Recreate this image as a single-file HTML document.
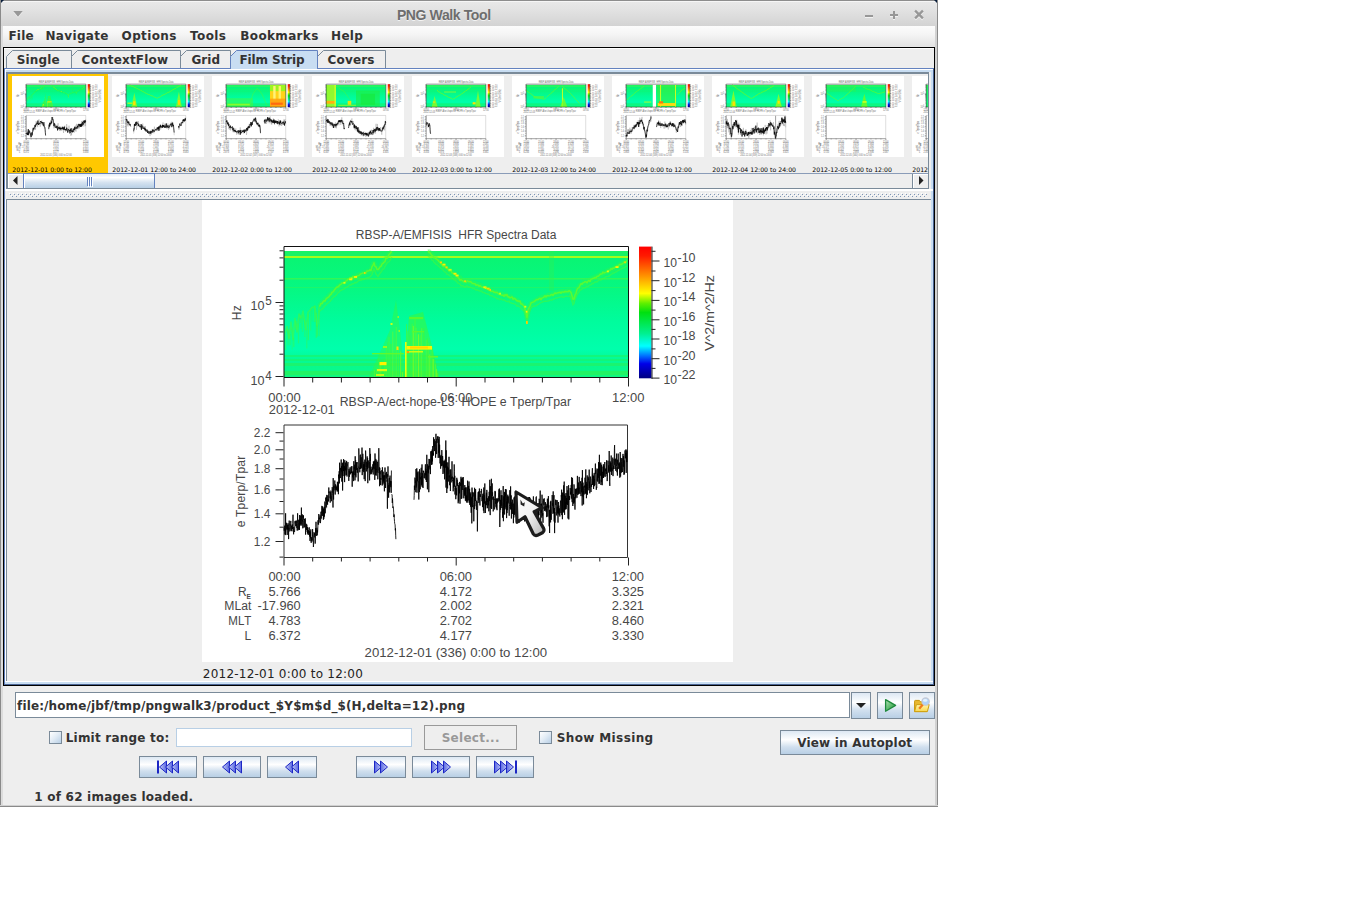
<!DOCTYPE html>
<html lang="en"><head><meta charset="utf-8"><title>PNG Walk Tool</title>
<style>

*{box-sizing:border-box;margin:0;padding:0}
html,body{width:1345px;height:916px;background:#fff;overflow:hidden}
body{position:relative;font-kerning:none;font-family:"DejaVu Sans","Liberation Sans",sans-serif;font-size:12px;color:#333}
.abs{position:absolute}
#win{position:absolute;left:0;top:0;width:938px;height:807px;background:#eee;overflow:hidden}
#titlebar{position:absolute;left:0;top:0;width:938px;height:26px;background:linear-gradient(#e9e9e9,#e4e4e4 30%,#d3d3d3)}
#title{position:absolute;left:0;width:888px;top:5px;text-align:center;font:bold 13.4px "Liberation Sans",sans-serif;color:#6d6d6d;text-shadow:0 1px 0 #f4f4f4;letter-spacing:0.1px}
#menubar{position:absolute;left:3px;top:26px;width:932px;height:20px;background:linear-gradient(#fcfcfc,#f5f5f5 40%,#e3e3e3)}
.menu{position:absolute;top:3px;font-weight:bold;font-size:12px;color:#333;white-space:nowrap;letter-spacing:0.1px}
.b{font-weight:bold}
.tab{position:absolute;top:50px;height:19px;font-weight:bold;font-size:12px;color:#333;white-space:nowrap;letter-spacing:0.12px}
.tab svg{position:absolute;left:0;top:0}
.tab span{position:absolute;top:3px}
.btn{position:absolute;border:1px solid #7a8a99;background:linear-gradient(#dde8f3,#ffffff 38%,#d0dfee 70%,#b8cfe5)}
.btn svg{position:absolute}
.lbl{position:absolute;white-space:nowrap;font-weight:bold;font-size:12px;color:#333}
svg.th text{font-size:15px;fill:#6a6a6a}
.chk{position:absolute;width:13px;height:13px;border:1px solid #7a8a99;background:linear-gradient(135deg,#ffffff,#e4edf6 45%,#b8cfe5)}

</style></head><body>
<svg width="0" height="0" style="position:absolute"><defs>
<linearGradient id="jet" x1="0" y1="0" x2="0" y2="1">
<stop offset="0" stop-color="#f00"/><stop offset="0.07" stop-color="#ff1a00"/><stop offset="0.22" stop-color="#ff9000"/><stop offset="0.355" stop-color="#ffff00"/>
<stop offset="0.43" stop-color="#60f000"/><stop offset="0.5" stop-color="#00e010"/><stop offset="0.66" stop-color="#00f090"/><stop offset="0.755" stop-color="#00ffff"/>
<stop offset="0.83" stop-color="#0070ff"/><stop offset="0.89" stop-color="#0000e8"/><stop offset="1" stop-color="#000080"/></linearGradient>
<linearGradient id="specg" x1="0" y1="0" x2="0" y2="1">
<stop offset="0" stop-color="#0af470"/><stop offset="0.3" stop-color="#06f882"/><stop offset="0.55" stop-color="#00fc9c"/><stop offset="0.78" stop-color="#00ffac"/><stop offset="0.86" stop-color="#04fa96"/><stop offset="1" stop-color="#0ef780"/></linearGradient>
<linearGradient id="tl" x1="0" y1="0" x2="1" y2="0"><stop offset="0" stop-color="#c4ccf6"/><stop offset="1" stop-color="#5a68e2"/></linearGradient>
<linearGradient id="tr" x1="0" y1="0" x2="1" y2="0"><stop offset="0" stop-color="#5a68e2"/><stop offset="1" stop-color="#c4ccf6"/></linearGradient>
</defs></svg>
<div id="win">
<div id="titlebar"></div>
<div class="abs" style="left:0;top:0;width:938px;height:1px;background:#8d8d8d"></div>
<div class="abs" style="left:1px;top:1px;width:936px;height:1px;background:#f6f6f6"></div>
<div class="abs" style="left:396.90px;top:6.60px;font:bold 14px 'Liberation Sans',sans-serif;letter-spacing:-0.387px;color:#6d6d6d;white-space:nowrap;line-height:normal;text-shadow:0 1px 0 #f4f4f4;">PNG Walk Tool</div>
<svg class="abs" style="left:0;top:0" width="938" height="26" viewBox="0 0 938 26"><path d="M13.3 12 L22.7 12 L18 17.8 Z" fill="#f0f0f0"/><path d="M13.3 11 L22.7 11 L18 16.8 Z" fill="#989898"/><path d="M0 0 H4 L0 4 Z" fill="#0a1f3c"/><path d="M938 0 H934 L938 4 Z" fill="#0a1f3c"/><g transform="translate(0 1)" fill="#f2f2f2" stroke="#f2f2f2"><path d="M865 15 H873 V17 H865 Z" stroke="none"/><path d="M890 14 H893 V11 H895 V14 H898 V16 H895 V19 H893 V16 H890 Z" stroke="none"/><path d="M915.1 10.6 L922.9 18.4 M922.9 10.6 L915.1 18.4" stroke-width="2.3" fill="none"/></g><path d="M865 15 H873 V17 H865 Z" fill="#979797"/><path d="M890 14 H893 V11 H895 V14 H898 V16 H895 V19 H893 V16 H890 Z" fill="#979797"/><path d="M915.1 10.6 L922.9 18.4 M922.9 10.6 L915.1 18.4" stroke="#979797" stroke-width="2.3" fill="none"/></svg>
<div id="menubar">
</div>
<div class="abs" style="left:8.40px;top:28.60px;font:bold 12px 'DejaVu Sans',sans-serif;letter-spacing:0.225px;color:#333;white-space:nowrap;line-height:normal;">File</div>
<div class="abs" style="left:45.50px;top:28.60px;font:bold 12px 'DejaVu Sans',sans-serif;letter-spacing:0.329px;color:#333;white-space:nowrap;line-height:normal;">Navigate</div>
<div class="abs" style="left:121.60px;top:28.60px;font:bold 12px 'DejaVu Sans',sans-serif;letter-spacing:0.362px;color:#333;white-space:nowrap;line-height:normal;">Options</div>
<div class="abs" style="left:190.10px;top:28.60px;font:bold 12px 'DejaVu Sans',sans-serif;letter-spacing:0.378px;color:#333;white-space:nowrap;line-height:normal;">Tools</div>
<div class="abs" style="left:240.30px;top:28.60px;font:bold 12px 'DejaVu Sans',sans-serif;letter-spacing:0.348px;color:#333;white-space:nowrap;line-height:normal;">Bookmarks</div>
<div class="abs" style="left:331.10px;top:28.60px;font:bold 12px 'DejaVu Sans',sans-serif;letter-spacing:0.268px;color:#333;white-space:nowrap;line-height:normal;">Help</div>
<div class="abs" style="left:0;top:0;width:1px;height:807px;background:#8a8a8a"></div>
<div class="abs" style="left:1px;top:26px;width:2px;height:780px;background:#dcdcdc"></div>
<div class="abs" style="left:937px;top:0;width:1px;height:807px;background:#8a8a8a"></div>
<div class="abs" style="left:935px;top:26px;width:2px;height:780px;background:#d2d2d2"></div>
<div class="abs" style="left:0;top:805px;width:938px;height:1px;background:#d0d0d0"></div>
<div class="abs" style="left:0;top:806px;width:938px;height:1px;background:#8a8a8a"></div>
<div class="abs" style="left:3px;top:46px;width:932px;height:1px;background:#e6e6e6"></div>
<div class="abs" style="left:3px;top:47px;width:932px;height:639px;border:1px solid #000;background:#eee"></div>
<div class="abs" style="left:4px;top:48px;width:930px;height:1px;background:#fff"></div>
<div class="abs" style="left:4px;top:68px;width:930px;height:617px;border:1px solid #6382bf;border-bottom-color:#4a6494;border-right-color:#4a6494;background:#c8ddf2"></div>
<div class="abs" style="left:5px;top:69px;width:928px;height:1px;background:#fff"></div>
<div class="abs" style="left:5px;top:69px;width:1px;height:612px;background:#fff"></div>
<div class="abs" style="left:6px;top:72px;width:925px;height:610px;background:#eee"></div>
<div class="tab" style="left:6px;width:66px"><svg width="66" height="19" viewBox="0 0 66 19"><path d="M0.5 18 L0.5 6.5 L6.5 0.5 L65.5 0.5 L65.5 18 Z" fill="#eeeeee"/><path d="M0.5 18 L0.5 6.5 L6.5 0.5 L65.5 0.5 L65.5 18" fill="none" stroke="#7a8a99" stroke-width="1"/></svg></div>
<div class="tab" style="left:71px;width:110px"><svg width="110" height="19" viewBox="0 0 110 19"><path d="M0.5 18 L0.5 6.5 L6.5 0.5 L109.5 0.5 L109.5 18 Z" fill="#eeeeee"/><path d="M0.5 18 L0.5 6.5 L6.5 0.5 L109.5 0.5 L109.5 18" fill="none" stroke="#7a8a99" stroke-width="1"/></svg></div>
<div class="tab" style="left:180px;width:51px"><svg width="51" height="19" viewBox="0 0 51 19"><path d="M0.5 18 L0.5 6.5 L6.5 0.5 L50.5 0.5 L50.5 18 Z" fill="#eeeeee"/><path d="M0.5 18 L0.5 6.5 L6.5 0.5 L50.5 0.5 L50.5 18" fill="none" stroke="#7a8a99" stroke-width="1"/></svg></div>
<div class="tab" style="left:317px;width:69px"><svg width="69" height="19" viewBox="0 0 69 19"><path d="M0.5 18 L0.5 6.5 L6.5 0.5 L68.5 0.5 L68.5 18 Z" fill="#eeeeee"/><path d="M0.5 18 L0.5 6.5 L6.5 0.5 L68.5 0.5 L68.5 18" fill="none" stroke="#7a8a99" stroke-width="1"/></svg></div>
<div class="tab" style="left:230px;width:88px"><svg width="88" height="19" viewBox="0 0 88 19"><path d="M0.5 19 L0.5 6.5 L6.5 0.5 L87.5 0.5 L87.5 19 Z" fill="#c8ddf2"/><path d="M0.5 19 L0.5 6.5 L6.5 0.5 L87.5 0.5 L87.5 19" fill="none" stroke="#6382bf" stroke-width="1"/></svg></div>
<div class="abs" style="left:16.70px;top:52.80px;font:bold 12px 'DejaVu Sans',sans-serif;letter-spacing:0.160px;color:#333;white-space:nowrap;line-height:normal;">Single</div>
<div class="abs" style="left:81.50px;top:52.80px;font:bold 12px 'DejaVu Sans',sans-serif;letter-spacing:0.200px;color:#333;white-space:nowrap;line-height:normal;">ContextFlow</div>
<div class="abs" style="left:191.40px;top:52.80px;font:bold 12px 'DejaVu Sans',sans-serif;letter-spacing:0.106px;color:#333;white-space:nowrap;line-height:normal;">Grid</div>
<div class="abs" style="left:239.50px;top:52.80px;font:bold 12px 'DejaVu Sans',sans-serif;letter-spacing:-0.102px;color:#333;white-space:nowrap;line-height:normal;">Film Strip</div>
<div class="abs" style="left:327.50px;top:52.80px;font:bold 12px 'DejaVu Sans',sans-serif;letter-spacing:0.174px;color:#333;white-space:nowrap;line-height:normal;">Covers</div>
<div class="abs" style="left:6px;top:72px;width:923px;height:117px;background:#7a8a99"></div>
<div class="abs" style="left:8px;top:74px;width:920px;height:99px;background:#eee;overflow:hidden">
<div class="abs" style="left:0;top:0;width:100px;height:99px;background:#ffc800"></div>
<div class="abs" style="left:4px;top:2px;width:92px;height:81px;background:#fff;overflow:hidden"><svg class="th" width="92" height="81" viewBox="0 0 531 462" preserveAspectRatio="none" style="position:absolute;left:0;top:0"><g font-family="'Liberation Sans',sans-serif" font-size="12" fill="#484848">
<rect x="82.0" y="51" width="344.0" height="126" fill="url(#specg)"/>
<rect x="82.0" y="155" width="344.0" height="2" fill="#12f77c"/>
<rect x="82.0" y="159" width="344.0" height="2" fill="#12f67a"/>
<rect x="82.0" y="163" width="344.0" height="3" fill="#1af470"/>
<rect x="82.0" y="168" width="344.0" height="2" fill="#08f98e"/>
<rect x="82.0" y="171" width="344.0" height="4" fill="#22f364"/>
<rect x="82.0" y="175" width="344.0" height="2" fill="#10f780"/>
<rect x="82.0" y="56" width="344.0" height="2" fill="#a4fb1c"/>
<rect x="82.0" y="51" width="344.0" height="5" fill="#22f25e" opacity="0.6"/>
<rect x="82.0" y="78" width="344.0" height="1.5" fill="#3cf64c" opacity="0.8"/>
<rect x="82.0" y="87" width="344.0" height="1" fill="#30f656" opacity="0.5"/>
<rect x="347" y="51" width="5" height="40" fill="#30f050" opacity="0.35"/>
<rect x="83.0" y="134.0" width="1.2" height="16.1" fill="#44f83c" opacity="0.42"/><rect x="85.5" y="129.0" width="1.2" height="16.4" fill="#44f83c" opacity="0.40"/><rect x="87.5" y="133.9" width="1.2" height="11.3" fill="#44f83c" opacity="0.40"/><rect x="89.6" y="127.4" width="1.2" height="22.3" fill="#44f83c" opacity="0.28"/><rect x="91.2" y="137.5" width="1.2" height="9.6" fill="#44f83c" opacity="0.49"/><rect x="93.4" y="120.8" width="1.2" height="8.8" fill="#44f83c" opacity="0.54"/><rect x="95.9" y="123.5" width="1.2" height="19.8" fill="#44f83c" opacity="0.43"/><rect x="97.4" y="114.7" width="1.2" height="8.3" fill="#44f83c" opacity="0.41"/><rect x="98.6" y="117.3" width="1.2" height="11.4" fill="#44f83c" opacity="0.32"/><rect x="99.9" y="115.3" width="1.2" height="16.4" fill="#44f83c" opacity="0.38"/><rect x="102.3" y="119.6" width="1.2" height="17.3" fill="#44f83c" opacity="0.44"/><rect x="104.2" y="128.5" width="1.2" height="19.9" fill="#44f83c" opacity="0.39"/><rect x="105.8" y="114.2" width="1.2" height="26.0" fill="#44f83c" opacity="0.55"/><rect x="108.1" y="109.9" width="1.2" height="20.7" fill="#44f83c" opacity="0.34"/><rect x="109.7" y="108.3" width="1.2" height="13.2" fill="#44f83c" opacity="0.27"/><rect x="111.9" y="106.7" width="1.2" height="15.2" fill="#44f83c" opacity="0.50"/><rect x="113.7" y="112.7" width="1.2" height="25.2" fill="#44f83c" opacity="0.50"/><rect x="114.9" y="124.7" width="1.2" height="11.8" fill="#44f83c" opacity="0.52"/><rect x="116.7" y="110.5" width="1.2" height="25.6" fill="#44f83c" opacity="0.37"/>
<path d="M83.0 133.6L84.0 130.1L85.0 126.5L86.0 132.6L87.0 138.5L88.0 130.0L89.0 122.1L90.0 130.9L91.0 139.5L92.0 128.8L93.0 118.4L94.0 125.1L95.0 131.9L96.0 122.6L97.0 114.0L98.0 115.8L99.0 118.0L100.0 115.2L101.0 111.1L102.0 118.0L103.0 123.4L104.0 129.6L105.0 120.5L106.0 112.4L107.0 111.3L108.0 110.2L109.0 108.7L110.0 107.4L111.0 107.2L112.0 106.7L113.0 106.0L114.0 116.3L115.0 125.9L116.0 123.4L117.0 106.3" fill="none" stroke="#50f834" stroke-width="1.6" opacity="0.5" stroke-linejoin="round"/>
<path d="M117.0 106.5L118.0 105.6L119.0 104.0L120.0 102.7L121.0 101.6L122.0 101.0L123.0 99.6L124.0 98.4L125.0 98.1L126.0 97.1L127.0 96.2L128.0 94.6L129.0 94.0L130.0 93.0L131.0 91.4L132.0 91.2L133.0 90.1L134.0 90.0L135.0 88.1L136.0 86.9L137.0 86.5L138.0 85.1L139.0 84.8L140.0 83.7L141.0 83.3L142.0 83.0L143.0 82.3L144.0 81.5L145.0 80.4L146.0 80.4L147.0 79.6L148.0 79.3L149.0 78.6L150.0 78.5L151.0 77.6L152.0 77.3L153.0 77.0L154.0 75.9L155.0 75.7L156.0 75.2L157.0 75.7L158.0 74.5L159.0 74.4L160.0 74.0L161.0 73.3L162.0 72.5L163.0 73.1L164.0 72.2L165.0 72.3L166.0 71.2L167.0 71.2L168.0 71.5L169.0 70.1L170.0 67.5L171.0 65.0L172.0 63.0L173.0 65.8L174.0 68.1L175.0 69.1L176.0 69.6L177.0 68.9L178.0 67.8L179.0 65.8L180.0 64.1L181.0 63.0L182.0 62.3L183.0 59.8L184.0 59.0L185.0 57.1L186.0 55.9L187.0 54.7L188.0 53.5L189.0 52.9L190.0 51.2" fill="none" stroke="#34f848" stroke-width="5" opacity="0.4" stroke-linejoin="round"/>
<path d="M226.0 51.9L227.0 51.7L228.0 53.2L229.0 54.1L230.0 55.3L231.0 55.4L232.0 56.8L233.0 57.7L234.0 58.5L235.0 59.5L236.0 60.5L237.0 61.5L238.0 62.1L239.0 63.6L240.0 64.1L241.0 63.9L242.0 66.6L243.0 66.8L244.0 67.5L245.0 68.7L246.0 69.5L247.0 70.2L248.0 70.7L249.0 71.9L250.0 72.0L251.0 74.0L252.0 73.7L253.0 74.9L254.0 75.9L255.0 76.8L256.0 77.5L257.0 78.6L258.0 77.8L259.0 80.0L260.0 80.9L261.0 80.9L262.0 81.8L263.0 80.9L264.0 81.4L265.0 80.8L266.0 81.8L267.0 81.2L268.0 81.3L269.0 83.3L270.0 83.0L271.0 83.1L272.0 83.6L273.0 83.4L274.0 83.9L275.0 84.9L276.0 84.3L277.0 85.7L278.0 85.2L279.0 86.4L280.0 86.3L281.0 87.9L282.0 88.0L283.0 87.8L284.0 87.7L285.0 88.5L286.0 89.2L287.0 89.3L288.0 90.2L289.0 90.9L290.0 90.9L291.0 91.1L292.0 92.0L293.0 92.0L294.0 92.9L295.0 92.8L296.0 93.9L297.0 93.4L298.0 93.4L299.0 94.2L300.0 94.2L301.0 94.4L302.0 95.1L303.0 95.7L304.0 94.8L305.0 96.0L306.0 96.3L307.0 96.6L308.0 97.3L309.0 96.9L310.0 98.2L311.0 98.4L312.0 99.0L313.0 99.4L314.0 99.8L315.0 100.2L316.0 101.1L317.0 102.3L318.0 102.4L319.0 103.3L320.0 104.2L321.0 104.8L322.0 106.2L323.0 109.8L324.0 111.4L325.0 118.3L326.0 110.4L327.0 107.7L328.0 105.6L329.0 103.5L330.0 103.3L331.0 102.4L332.0 102.0L333.0 100.9L334.0 100.5L335.0 99.7L336.0 99.2L337.0 98.3L338.0 98.2L339.0 98.3L340.0 97.3L341.0 97.2L342.0 97.0L343.0 96.5L344.0 96.6L345.0 96.0L346.0 95.1L347.0 94.9L348.0 95.3L349.0 94.9L350.0 94.8L351.0 94.2L352.0 93.9L353.0 92.8L354.0 93.7L355.0 92.5L356.0 93.0L357.0 91.8L358.0 91.7L359.0 91.9L360.0 91.6L361.0 91.4L362.0 91.9L363.0 91.8L364.0 91.5L365.0 91.2L366.0 90.9L367.0 90.9L368.0 90.8L369.0 93.5L370.0 96.3L371.0 99.3L372.0 98.3L373.0 93.7L374.0 92.7L375.0 90.5L376.0 88.7L377.0 86.9L378.0 85.2L379.0 84.5L380.0 84.5L381.0 83.8L382.0 81.9L383.0 82.4L384.0 83.2L385.0 81.0L386.0 81.0L387.0 80.9L388.0 80.0L389.0 80.0L390.0 78.5L391.0 78.0L392.0 77.9L393.0 77.2L394.0 76.6L395.0 76.7L396.0 76.1L397.0 75.5L398.0 74.8L399.0 74.6L400.0 74.0L401.0 73.2L402.0 73.2L403.0 72.6L404.0 72.0L405.0 71.8L406.0 70.6L407.0 70.4L408.0 69.8L409.0 70.0L410.0 69.2L411.0 69.3L412.0 68.6L413.0 67.4L414.0 66.6L415.0 66.7L416.0 65.9L417.0 65.4L418.0 64.6L419.0 64.7L420.0 63.9L421.0 63.4L422.0 62.8L423.0 61.8L424.0 60.7L425.0 60.9" fill="none" stroke="#34f848" stroke-width="5" opacity="0.4" stroke-linejoin="round"/>
<path d="M226.0 55.6L227.0 56.7L228.0 58.2L229.0 58.3L230.0 60.0L231.0 60.3L232.0 62.3L233.0 63.1L234.0 64.3L235.0 64.6L236.0 65.8L237.0 66.5L238.0 67.3L239.0 68.4L240.0 68.9L241.0 70.1L242.0 71.3L243.0 72.0L244.0 72.7L245.0 74.3L246.0 74.4L247.0 75.0L248.0 76.0L249.0 76.6L250.0 77.5L251.0 78.3L252.0 79.8L253.0 80.0L254.0 80.9L255.0 81.9L256.0 83.2L257.0 83.4L258.0 84.1L259.0 85.9L260.0 85.6L261.0 86.0L262.0 86.5L263.0 87.1L264.0 86.2L265.0 85.9L266.0 86.9L267.0 86.7L268.0 86.9L269.0 87.5L270.0 87.9L271.0 88.3L272.0 88.5L273.0 89.4L274.0 89.9L275.0 89.8L276.0 90.1L277.0 90.8L278.0 91.1L279.0 91.1L280.0 91.7L281.0 92.6L282.0 92.6L283.0 93.0L284.0 93.5L285.0 93.9L286.0 94.3L287.0 94.1L288.0 95.6L289.0 95.6L290.0 95.7L291.0 96.6L292.0 96.9L293.0 97.2L294.0 97.9L295.0 98.7L296.0 98.5L297.0 99.1L298.0 99.6L299.0 98.9L300.0 99.4L301.0 100.1L302.0 99.6L303.0 100.4L304.0 101.2L305.0 101.4L306.0 101.6L307.0 101.1L308.0 102.7L309.0 102.7L310.0 103.2L311.0 103.6L312.0 103.5L313.0 104.1L314.0 104.6L315.0 106.1L316.0 105.8L317.0 106.4L318.0 106.9L319.0 108.2L320.0 109.2L321.0 110.1L322.0 110.6L323.0 113.1L324.0 117.0L325.0 123.1L326.0 115.4L327.0 112.6L328.0 110.1L329.0 108.1L330.0 107.0L331.0 106.6L332.0 106.0L333.0 105.9L334.0 105.8L335.0 104.9L336.0 104.5L337.0 103.6L338.0 103.1L339.0 102.6L340.0 102.3L341.0 101.4L342.0 101.4L343.0 101.1L344.0 101.5L345.0 101.1L346.0 100.9L347.0 100.8L348.0 99.9L349.0 100.0L350.0 100.0L351.0 99.1L352.0 99.1L353.0 98.5L354.0 97.7L355.0 97.9L356.0 97.4L357.0 97.3L358.0 96.9L359.0 97.0L360.0 96.2L361.0 97.3L362.0 97.0L363.0 96.4L364.0 96.1L365.0 96.3L366.0 96.4L367.0 96.2L368.0 96.1L369.0 97.9L370.0 100.7L371.0 104.7L372.0 103.7L373.0 98.5L374.0 96.9L375.0 95.0L376.0 93.3L377.0 92.2L378.0 89.9L379.0 89.8L380.0 89.1L381.0 88.0L382.0 87.8L383.0 88.2L384.0 86.8L385.0 86.2L386.0 86.4L387.0 85.5L388.0 85.0L389.0 84.9L390.0 83.5L391.0 83.6L392.0 82.7L393.0 82.1L394.0 81.8L395.0 81.9L396.0 81.0L397.0 79.9L398.0 79.7L399.0 80.0L400.0 79.3L401.0 78.2L402.0 78.7L403.0 77.4L404.0 76.6L405.0 76.5L406.0 76.3L407.0 76.0L408.0 75.3L409.0 74.4L410.0 73.8L411.0 73.1L412.0 73.0L413.0 72.3L414.0 72.1L415.0 71.1L416.0 70.8L417.0 70.2L418.0 69.6L419.0 69.1L420.0 68.5L421.0 67.9L422.0 67.9L423.0 67.2L424.0 66.2L425.0 66.2" fill="none" stroke="#48f838" stroke-width="1.5" opacity="0.55"/>
<path d="M117.0 112.1L118.0 110.5L119.0 109.8L120.0 109.0L121.0 108.4L122.0 107.0L123.0 105.5L124.0 105.1L125.0 103.6L126.0 103.4L127.0 101.9L128.0 101.5L129.0 100.0L130.0 98.7L131.0 97.6L132.0 96.9L133.0 96.1L134.0 95.4L135.0 94.1L136.0 92.8L137.0 92.2L138.0 90.6L139.0 90.6L140.0 89.6L141.0 89.6L142.0 88.9L143.0 88.1L144.0 87.1L145.0 87.0L146.0 86.3L147.0 85.4L148.0 84.8L149.0 84.9L150.0 84.0L151.0 83.8L152.0 83.6L153.0 82.3L154.0 82.8L155.0 82.2L156.0 81.2L157.0 80.7L158.0 80.1L159.0 80.4L160.0 79.0L161.0 79.7L162.0 79.2L163.0 78.5L164.0 78.2L165.0 77.9L166.0 77.6L167.0 77.6L168.0 76.7L169.0 75.8L170.0 74.3L171.0 71.4L172.0 69.2L173.0 71.3L174.0 74.0L175.0 75.1L176.0 76.6L177.0 74.7L178.0 73.3L179.0 72.0L180.0 70.6L181.0 69.0L182.0 68.6L183.0 66.3L184.0 64.8L185.0 63.3L186.0 62.2L187.0 61.6L188.0 60.4L189.0 58.5L190.0 57.1" fill="none" stroke="#48f838" stroke-width="1.5" opacity="0.55"/>
<path d="M117.0 106.1L118.0 105.8L119.0 103.4L120.0 103.6L121.0 101.8L122.0 100.8L123.0 101.1L124.0 99.1L125.0 98.0L126.0 97.4L127.0 96.7L128.0 95.0L129.0 94.4L130.0 92.4L131.0 91.8L132.0 90.7L133.0 89.2L134.0 88.1L135.0 87.0L136.0 86.9L137.0 85.9L138.0 84.8L139.0 84.4L140.0 83.0L141.0 83.2L142.0 82.7L143.0 82.5L144.0 80.9L145.0 80.6L146.0 79.0L147.0 79.3L148.0 77.7L149.0 77.7L150.0 78.8L151.0 76.3L152.0 77.7L153.0 76.9L154.0 76.1L155.0 76.1L156.0 75.7L157.0 75.6L158.0 74.4L159.0 73.8L160.0 73.4L161.0 72.9L162.0 73.1L163.0 72.3L164.0 73.0L165.0 70.9L166.0 71.0L167.0 70.8L168.0 69.7L169.0 70.6L170.0 66.6L171.0 65.3L172.0 62.7L173.0 66.5L174.0 66.8L175.0 69.6L176.0 69.6L177.0 68.6L178.0 66.9L179.0 66.4L180.0 64.0L181.0 63.3L182.0 62.2L183.0 61.6L184.0 57.6L185.0 58.4L186.0 56.6L187.0 54.5L188.0 53.7L189.0 52.0L190.0 52.0" fill="none" stroke="#66fa28" stroke-width="1.5" opacity="0.85" stroke-linejoin="round"/>
<path d="M226.0 51.0L227.0 52.3L228.0 52.7L229.0 54.2L230.0 55.6L231.0 56.2L232.0 57.9L233.0 57.5L234.0 58.9L235.0 59.4L236.0 60.2L237.0 61.5L238.0 62.6L239.0 63.7L240.0 64.6L241.0 66.5L242.0 66.6L243.0 66.0L244.0 67.9L245.0 68.2L246.0 69.1L247.0 71.0L248.0 70.9L249.0 70.6L250.0 72.8L251.0 73.2L252.0 73.5L253.0 74.4L254.0 75.5L255.0 76.7L256.0 77.3L257.0 78.5L258.0 80.4L259.0 79.7L260.0 80.5L261.0 81.0L262.0 81.9L263.0 81.0L264.0 82.4L265.0 80.8L266.0 81.1L267.0 81.8L268.0 81.5L269.0 82.0L270.0 83.1L271.0 83.6L272.0 83.7L273.0 83.8L274.0 85.2L275.0 85.0L276.0 85.1L277.0 86.3L278.0 85.5L279.0 86.5L280.0 87.2L281.0 87.2L282.0 87.3L283.0 88.3L284.0 88.1L285.0 88.5L286.0 88.7L287.0 90.5L288.0 89.8L289.0 91.2L290.0 91.2L291.0 91.2L292.0 92.2L293.0 92.3L294.0 92.7L295.0 92.2L296.0 93.4L297.0 94.2L298.0 94.2L299.0 94.8L300.0 95.4L301.0 95.1L302.0 96.3L303.0 94.6L304.0 95.6L305.0 94.6L306.0 96.9L307.0 96.7L308.0 98.0L309.0 97.3L310.0 96.8L311.0 99.3L312.0 98.2L313.0 98.7L314.0 99.9L315.0 100.9L316.0 100.7L317.0 101.6L318.0 100.9L319.0 104.0L320.0 104.0L321.0 105.1L322.0 106.4L323.0 109.1L324.0 112.1L325.0 117.4L326.0 109.9L327.0 107.9L328.0 106.0L329.0 102.9L330.0 102.5L331.0 102.1L332.0 101.7L333.0 100.9L334.0 100.1L335.0 99.4L336.0 99.8L337.0 98.7L338.0 98.0L339.0 99.8L340.0 97.9L341.0 97.6L342.0 96.9L343.0 95.9L344.0 96.9L345.0 95.8L346.0 95.6L347.0 95.9L348.0 95.6L349.0 94.8L350.0 94.4L351.0 95.4L352.0 94.1L353.0 92.9L354.0 93.7L355.0 93.0L356.0 92.6L357.0 92.7L358.0 92.1L359.0 93.1L360.0 91.9L361.0 91.9L362.0 92.3L363.0 91.2L364.0 92.0L365.0 91.3L366.0 91.9L367.0 90.6L368.0 91.3L369.0 92.5L370.0 95.7L371.0 99.3L372.0 99.0L373.0 95.2L374.0 93.3L375.0 89.6L376.0 88.1L377.0 87.6L378.0 85.3L379.0 83.7L380.0 84.3L381.0 82.8L382.0 82.5L383.0 81.7L384.0 81.8L385.0 82.8L386.0 81.2L387.0 80.4L388.0 81.5L389.0 79.2L390.0 78.9L391.0 78.3L392.0 78.3L393.0 77.3L394.0 77.9L395.0 76.3L396.0 76.3L397.0 75.6L398.0 74.5L399.0 73.9L400.0 74.0L401.0 72.1L402.0 73.0L403.0 72.5L404.0 72.1L405.0 71.5L406.0 71.2L407.0 70.3L408.0 70.4L409.0 68.5L410.0 69.5L411.0 68.0L412.0 68.3L413.0 67.2L414.0 66.7L415.0 66.0L416.0 66.8L417.0 64.8L418.0 64.3L419.0 64.6L420.0 64.0L421.0 63.3L422.0 62.1L423.0 61.8L424.0 62.1L425.0 60.4" fill="none" stroke="#66fa28" stroke-width="1.5" opacity="0.85" stroke-linejoin="round"/>
<rect x="141.4" y="81.9" width="2" height="1.8" fill="#d8ff10"/><rect x="147.2" y="78.5" width="3" height="1.8" fill="#fff000"/><rect x="148.9" y="77.6" width="1.5" height="1.8" fill="#c0ff18"/><rect x="152.1" y="76.1" width="3" height="1.8" fill="#fff000"/><rect x="162.0" y="72.1" width="1.5" height="1.8" fill="#ffd000"/><rect x="238.0" y="61.5" width="2" height="1.8" fill="#ffd000"/><rect x="240.5" y="63.7" width="3" height="1.8" fill="#fff000"/><rect x="243.6" y="66.4" width="2" height="1.8" fill="#ffd000"/><rect x="246.6" y="68.9" width="3" height="1.8" fill="#c0ff18"/><rect x="251.5" y="72.8" width="3" height="1.8" fill="#fff000"/><rect x="253.6" y="74.6" width="3" height="1.8" fill="#fff000"/><rect x="262.3" y="80.3" width="1.5" height="1.8" fill="#ffd000"/><rect x="281.4" y="86.4" width="3" height="1.8" fill="#fff000"/><rect x="282.9" y="87.0" width="1.5" height="1.8" fill="#c0ff18"/><rect x="284.6" y="87.7" width="3" height="1.8" fill="#ffd000"/><rect x="287.5" y="88.9" width="1.5" height="1.8" fill="#ffd000"/><rect x="297.3" y="92.7" width="1.5" height="1.8" fill="#d8ff10"/><rect x="322.3" y="105.8" width="2" height="1.8" fill="#d8ff10"/><rect x="323.9" y="110.8" width="1.5" height="1.8" fill="#fff000"/><rect x="404.9" y="70.5" width="2" height="1.8" fill="#d8ff10"/><rect x="413.5" y="66.2" width="3" height="1.8" fill="#fff000"/><rect x="422.3" y="61.5" width="1.5" height="1.8" fill="#ffd000"/>
<rect x="324" y="121" width="1.8" height="3" fill="#ffc800"/>
<path d="M167 177 L188 130 L194 100 L198 130 L203 177 Z" fill="#38f83c" opacity="0.45"/>
<path d="M202 177 L207 116 L221 112 L231 150 L237 177 Z" fill="#3cf838" opacity="0.55"/>
<rect x="172.1" y="170.0" width="1" height="7.0" fill="#70fb20" opacity="0.52"/><rect x="173.9" y="168.3" width="1" height="8.7" fill="#70fb20" opacity="0.41"/><rect x="176.4" y="158.4" width="1" height="18.6" fill="#48f830" opacity="0.72"/><rect x="177.6" y="163.3" width="1" height="13.7" fill="#70fb20" opacity="0.72"/><rect x="179.1" y="160.9" width="1" height="16.1" fill="#48f830" opacity="0.67"/><rect x="181.3" y="158.2" width="1" height="18.8" fill="#48f830" opacity="0.38"/><rect x="182.3" y="160.5" width="1" height="16.5" fill="#58fb28" opacity="0.66"/><rect x="183.7" y="148.2" width="1" height="28.8" fill="#58fb28" opacity="0.64"/><rect x="185.3" y="142.0" width="1" height="35.0" fill="#48f830" opacity="0.46"/><rect x="186.5" y="136.9" width="1" height="40.1" fill="#58fb28" opacity="0.55"/><rect x="188.4" y="143.9" width="1" height="33.1" fill="#48f830" opacity="0.78"/><rect x="190.3" y="131.6" width="1" height="45.4" fill="#90fb18" opacity="0.47"/><rect x="192.3" y="137.4" width="1" height="39.6" fill="#58fb28" opacity="0.43"/><rect x="193.7" y="127.1" width="1" height="49.9" fill="#70fb20" opacity="0.53"/><rect x="195.8" y="147.3" width="1" height="29.7" fill="#58fb28" opacity="0.53"/><rect x="198.1" y="151.4" width="1" height="25.6" fill="#90fb18" opacity="0.55"/><rect x="200.0" y="172.1" width="1" height="4.9" fill="#90fb18" opacity="0.60"/><rect x="204.0" y="124.2" width="1" height="52.8" fill="#48f830" opacity="0.64"/><rect x="205.3" y="131.0" width="1" height="46.0" fill="#58fb28" opacity="0.45"/><rect x="207.6" y="135.6" width="1" height="41.4" fill="#48f830" opacity="0.59"/><rect x="209.7" y="123.8" width="1" height="53.2" fill="#58fb28" opacity="0.51"/><rect x="210.8" y="125.9" width="1" height="51.1" fill="#90fb18" opacity="0.70"/><rect x="212.5" y="118.5" width="1" height="58.5" fill="#58fb28" opacity="0.54"/><rect x="213.5" y="127.6" width="1" height="49.4" fill="#70fb20" opacity="0.56"/><rect x="215.9" y="134.2" width="1" height="42.8" fill="#90fb18" opacity="0.78"/><rect x="217.6" y="135.1" width="1" height="41.9" fill="#58fb28" opacity="0.69"/><rect x="219.2" y="128.1" width="1" height="48.9" fill="#70fb20" opacity="0.59"/><rect x="221.4" y="128.1" width="1" height="48.9" fill="#48f830" opacity="0.65"/><rect x="223.7" y="139.9" width="1" height="37.1" fill="#70fb20" opacity="0.49"/><rect x="224.9" y="138.4" width="1" height="38.6" fill="#48f830" opacity="0.61"/><rect x="226.2" y="142.8" width="1" height="34.2" fill="#58fb28" opacity="0.62"/><rect x="227.3" y="154.4" width="1" height="22.6" fill="#90fb18" opacity="0.59"/><rect x="229.6" y="147.7" width="1" height="29.3" fill="#58fb28" opacity="0.66"/><rect x="230.7" y="159.1" width="1" height="17.9" fill="#90fb18" opacity="0.76"/><rect x="232.9" y="164.3" width="1" height="12.7" fill="#70fb20" opacity="0.56"/><rect x="234.0" y="169.1" width="1" height="7.9" fill="#90fb18" opacity="0.59"/><rect x="235.2" y="173.0" width="1" height="4.0" fill="#58fb28" opacity="0.77"/>
<rect x="204.5" y="146" width="25.5" height="3.6" fill="#fff200"/>
<rect x="208" y="146.5" width="18" height="2" fill="#ffd800"/>
<rect x="204.5" y="151" width="3" height="2.2" fill="#ffa000"/>
<rect x="207" y="151" width="14" height="1.5" fill="#c8ff10"/>
<rect x="177.5" y="162" width="7" height="3.2" fill="#fff200"/>
<rect x="175" y="169" width="10" height="2.2" fill="#d8fb10"/>
<rect x="170" y="153" width="32" height="1.4" fill="#60f82c"/>
<rect x="194.5" y="146.5" width="2" height="3.5" fill="#ffe000"/>
<rect x="207" y="117" width="14" height="2.2" fill="#58f830"/>
<rect x="210" y="131" width="12" height="1.4" fill="#58f830"/>
<rect x="203" y="142" width="1.6" height="35" fill="#e8ff10"/>
<rect x="188.5" y="123" width="2" height="2" fill="#d0ff10"/>
<rect x="195.5" y="116" width="1.5" height="2" fill="#90fb20"/>
<rect x="196.5" y="130" width="1.5" height="2" fill="#90fb20"/>
<rect x="181" y="146" width="4" height="2" fill="#90fb20"/>
<rect x="226" y="156" width="10" height="1.6" fill="#60f82c"/>
<rect x="174" y="174" width="8" height="2" fill="#c0fb18"/>
<path d="M82.0 46.5 H426.5 V177.5 H82.0 Z" fill="none" stroke="#111" stroke-width="2.6"/>
<path d="M73.5 176.5 H81.5M73.5 102.5 H81.5M77.5 154.2 H81.5M77.5 141.2 H81.5M77.5 131.9 H81.5M77.5 124.8 H81.5M77.5 118.9 H81.5M77.5 114.0 H81.5M77.5 109.7 H81.5M77.5 105.9 H81.5M77.5 80.2 H81.5M77.5 67.2 H81.5M77.5 57.9 H81.5M77.5 50.8 H81.5M82.0 177.5 V186.5M110.7 177.5 V182.5M139.4 177.5 V182.5M168.1 177.5 V182.5M196.8 177.5 V182.5M225.5 177.5 V182.5M254.2 177.5 V186.5M283.0 177.5 V182.5M311.7 177.5 V182.5M340.4 177.5 V182.5M369.1 177.5 V182.5M397.8 177.5 V182.5M426.5 177.5 V186.5" stroke="#222" stroke-width="2.6" fill="none"/>
<rect x="437" y="46.599999999999994" width="12.5" height="131.70000000000002" fill="url(#jet)"/>
<path d="M450.0 46.599999999999994 V178.8M449.5 61.0 H457.5M449.5 80.7 H457.5M449.5 100.4 H457.5M449.5 119.8 H457.5M449.5 139.0 H457.5M449.5 158.7 H457.5M449.5 178.1 H457.5M449.5 51.3 H453.5M449.5 71.0 H453.5M449.5 90.6 H453.5M449.5 110.1 H453.5M449.5 129.4 H453.5M449.5 148.9 H453.5M449.5 168.4 H453.5" stroke="#222" stroke-width="2.6" fill="none"/>
<text x="461.5" y="67.0" text-anchor="start" font-size="12" textLength="13.5" lengthAdjust="spacingAndGlyphs">10</text>
<text x="475.5" y="62.0" text-anchor="start" font-size="12" textLength="18" lengthAdjust="spacingAndGlyphs">-10</text>
<text x="461.5" y="86.7" text-anchor="start" font-size="12" textLength="13.5" lengthAdjust="spacingAndGlyphs">10</text>
<text x="475.5" y="81.7" text-anchor="start" font-size="12" textLength="18" lengthAdjust="spacingAndGlyphs">-12</text>
<text x="461.5" y="106.4" text-anchor="start" font-size="12" textLength="13.5" lengthAdjust="spacingAndGlyphs">10</text>
<text x="475.5" y="101.4" text-anchor="start" font-size="12" textLength="18" lengthAdjust="spacingAndGlyphs">-14</text>
<text x="461.5" y="125.8" text-anchor="start" font-size="12" textLength="13.5" lengthAdjust="spacingAndGlyphs">10</text>
<text x="475.5" y="120.8" text-anchor="start" font-size="12" textLength="18" lengthAdjust="spacingAndGlyphs">-16</text>
<text x="461.5" y="145.0" text-anchor="start" font-size="12" textLength="13.5" lengthAdjust="spacingAndGlyphs">10</text>
<text x="475.5" y="140.0" text-anchor="start" font-size="12" textLength="18" lengthAdjust="spacingAndGlyphs">-18</text>
<text x="461.5" y="164.7" text-anchor="start" font-size="12" textLength="13.5" lengthAdjust="spacingAndGlyphs">10</text>
<text x="475.5" y="159.7" text-anchor="start" font-size="12" textLength="18" lengthAdjust="spacingAndGlyphs">-20</text>
<text x="461.5" y="184.1" text-anchor="start" font-size="12" textLength="13.5" lengthAdjust="spacingAndGlyphs">10</text>
<text x="475.5" y="179.1" text-anchor="start" font-size="12" textLength="18" lengthAdjust="spacingAndGlyphs">-22</text>
<text transform="translate(511.5 113) rotate(-90)" text-anchor="middle" textLength="76" lengthAdjust="spacingAndGlyphs">V^2/m^2/Hz</text>
<text x="153.8" y="38.5" text-anchor="start" font-size="12" textLength="200.5" lengthAdjust="spacingAndGlyphs">RBSP-A/EMFISIS&#160; HFR Spectra Data</text>
<text x="48.599999999999994" y="110" text-anchor="start" font-size="12" textLength="14" lengthAdjust="spacingAndGlyphs">10</text>
<text x="63.30000000000001" y="105" text-anchor="start" font-size="12" textLength="6.5" lengthAdjust="spacingAndGlyphs">5</text>
<text x="48.599999999999994" y="184.60000000000002" text-anchor="start" font-size="12" textLength="14" lengthAdjust="spacingAndGlyphs">10</text>
<text x="63.30000000000001" y="179.60000000000002" text-anchor="start" font-size="12" textLength="6.5" lengthAdjust="spacingAndGlyphs">4</text>
<text transform="translate(38.5 112.80000000000001) rotate(-90)" text-anchor="middle" textLength="15">Hz</text>
<text x="66.30000000000001" y="202.3" text-anchor="start" font-size="12" textLength="32.5" lengthAdjust="spacingAndGlyphs">00:00</text>
<text x="238" y="202.3" text-anchor="start" font-size="12" textLength="32.5" lengthAdjust="spacingAndGlyphs">06:00</text>
<text x="410" y="202.3" text-anchor="start" font-size="12" textLength="32.5" lengthAdjust="spacingAndGlyphs">12:00</text>
<text x="66.80000000000001" y="213.8" text-anchor="start" font-size="12" textLength="66" lengthAdjust="spacingAndGlyphs">2012-12-01</text>
<text x="137.7" y="205.5" text-anchor="start" font-size="12" textLength="231.3" lengthAdjust="spacingAndGlyphs">RBSP-A/ect-hope-L3&#160; HOPE e Tperp/Tpar</text>
<path d="M82.0 225.0 H425.5 V357.5" fill="none" stroke="#333" stroke-width="1"/>
<path d="M82.0 225.0 V357.5 H425.5" fill="none" stroke="#333" stroke-width="2.6"/>
<path d="M73.5 232.7 H81.5M73.5 249.8 H81.5M73.5 268.7 H81.5M73.5 289.9 H81.5M73.5 313.8 H81.5M73.5 341.5 H81.5M77.5 241.1 H81.5M77.5 259.0 H81.5M77.5 279.0 H81.5M77.5 301.5 H81.5M77.5 327.2 H81.5M77.5 357.1 H81.5M82.0 357.5 V365.5M110.7 357.5 V361.5M139.4 357.5 V361.5M168.1 357.5 V361.5M196.8 357.5 V361.5M225.5 357.5 V361.5M254.2 357.5 V365.5M283.0 357.5 V361.5M311.7 357.5 V361.5M340.4 357.5 V361.5M369.1 357.5 V361.5M397.8 357.5 V361.5M426.5 357.5 V365.5" stroke="#222" stroke-width="2.6" fill="none"/>
<text x="51.80000000000001" y="237.0" text-anchor="start" font-size="12" textLength="16.5" lengthAdjust="spacingAndGlyphs">2.2</text>
<text x="51.80000000000001" y="254.1" text-anchor="start" font-size="12" textLength="16.5" lengthAdjust="spacingAndGlyphs">2.0</text>
<text x="51.80000000000001" y="273.0" text-anchor="start" font-size="12" textLength="16.5" lengthAdjust="spacingAndGlyphs">1.8</text>
<text x="51.80000000000001" y="294.2" text-anchor="start" font-size="12" textLength="16.5" lengthAdjust="spacingAndGlyphs">1.6</text>
<text x="51.80000000000001" y="318.1" text-anchor="start" font-size="12" textLength="16.5" lengthAdjust="spacingAndGlyphs">1.4</text>
<text x="51.80000000000001" y="345.8" text-anchor="start" font-size="12" textLength="16.5" lengthAdjust="spacingAndGlyphs">1.2</text>
<text transform="translate(42.5 291.6) rotate(-90)" text-anchor="middle" textLength="71.5">e Tperp/Tpar</text>
<text x="98.69999999999999" y="380.8" text-anchor="end" font-size="12" textLength="32.3" lengthAdjust="spacingAndGlyphs">00:00</text>
<text x="270" y="380.8" text-anchor="end" font-size="12" textLength="32.3" lengthAdjust="spacingAndGlyphs">06:00</text>
<text x="442" y="380.8" text-anchor="end" font-size="12" textLength="32.3" lengthAdjust="spacingAndGlyphs">12:00</text>
<text x="98.69999999999999" y="395.8" text-anchor="end" font-size="12" textLength="32.3" lengthAdjust="spacingAndGlyphs">5.766</text>
<text x="270" y="395.8" text-anchor="end" font-size="12" textLength="32.3" lengthAdjust="spacingAndGlyphs">4.172</text>
<text x="442" y="395.8" text-anchor="end" font-size="12" textLength="32.3" lengthAdjust="spacingAndGlyphs">3.325</text>
<text x="98.69999999999999" y="410.3" text-anchor="end" font-size="12" textLength="43.3" lengthAdjust="spacingAndGlyphs">-17.960</text>
<text x="270" y="410.3" text-anchor="end" font-size="12" textLength="32.3" lengthAdjust="spacingAndGlyphs">2.002</text>
<text x="442" y="410.3" text-anchor="end" font-size="12" textLength="32.3" lengthAdjust="spacingAndGlyphs">2.321</text>
<text x="98.69999999999999" y="425.2" text-anchor="end" font-size="12" textLength="32.3" lengthAdjust="spacingAndGlyphs">4.783</text>
<text x="270" y="425.2" text-anchor="end" font-size="12" textLength="32.3" lengthAdjust="spacingAndGlyphs">2.702</text>
<text x="442" y="425.2" text-anchor="end" font-size="12" textLength="32.3" lengthAdjust="spacingAndGlyphs">8.460</text>
<text x="98.69999999999999" y="440.0" text-anchor="end" font-size="12" textLength="32.3" lengthAdjust="spacingAndGlyphs">6.372</text>
<text x="270" y="440.0" text-anchor="end" font-size="12" textLength="32.3" lengthAdjust="spacingAndGlyphs">4.177</text>
<text x="442" y="440.0" text-anchor="end" font-size="12" textLength="32.3" lengthAdjust="spacingAndGlyphs">3.330</text>
<text x="36" y="395.79999999999995" textLength="8.5">R</text><text x="44.5" y="399" font-size="6.5" font-weight="bold">E</text>
<text x="49.30000000000001" y="410.29999999999995" text-anchor="end" font-size="12" textLength="27" lengthAdjust="spacingAndGlyphs">MLat</text>
<text x="49.30000000000001" y="425.20000000000005" text-anchor="end" font-size="12" textLength="23" lengthAdjust="spacingAndGlyphs">MLT</text>
<text x="49.30000000000001" y="440" text-anchor="end" font-size="12">L</text>
<text x="162.60000000000002" y="457.1" text-anchor="start" font-size="12" textLength="182.5" lengthAdjust="spacingAndGlyphs">2012-12-01 (336) 0:00 to 12:00</text>
</g>
<path d="M82.0 314.3L83.5 304.5L85.0 333.9L86.5 317.3L88.0 323.2L89.5 331.7L91.0 315.9L92.5 324.3L94.0 328.5L95.5 340.5L97.0 327.6L98.5 323.6L100.0 324.9L101.5 322.5L103.0 319.5L104.5 318.3L106.0 343.3L107.5 341.6L109.0 355.5L110.5 321.4L112.0 321.8L113.5 327.0L115.0 322.7L116.5 331.9L118.0 327.3L119.5 305.6L121.0 311.1L122.5 292.3L124.0 315.8L125.5 293.1L127.0 305.9L128.5 288.7L130.0 288.3L131.5 294.8L133.0 301.7L134.5 275.9L136.0 307.6L137.5 274.1L139.0 256.8L140.5 261.7L142.0 270.0L143.5 282.9L145.0 273.0L146.5 266.0L148.0 291.7L149.5 265.2L151.0 273.2L152.5 272.2L154.0 279.3L155.5 246.2L157.0 269.3L158.5 266.7L160.0 273.4L161.5 271.5L163.0 289.6L164.5 267.3L166.0 272.8L167.5 259.6L169.0 275.2L170.5 261.9L172.0 253.3L173.5 263.3L175.0 279.8L176.5 264.8L178.0 262.9L179.5 272.3L181.0 275.0L182.5 290.3L184.0 287.3L185.5 275.6L187.0 299.2L188.5 278.7M189.5 291.2L191.0 301.3L192.5 326.7L194.0 337.8M212.0 308.2L213.5 275.4L215.0 292.6L216.5 277.3L218.0 266.4L219.5 288.4L221.0 265.6L222.5 283.5L224.0 251.2L225.5 260.6L227.0 265.1L228.5 254.0L230.0 248.4L231.5 252.3L233.0 233.8L234.5 235.6L236.0 235.3L237.5 237.7L239.0 264.3L240.5 272.8L242.0 298.6L243.5 268.9L245.0 266.4L246.5 290.8L248.0 271.7L249.5 279.4L251.0 280.0L252.5 285.3L254.0 278.9L255.5 290.1L257.0 290.3L258.5 286.3L260.0 292.0L261.5 278.3L263.0 308.6L264.5 292.0L266.0 268.8L267.5 290.0L269.0 298.5L270.5 307.8L272.0 287.9L273.5 299.9L275.0 312.9L276.5 285.2L278.0 311.4L279.5 312.7L281.0 305.5L282.5 302.7L284.0 302.5L285.5 311.3L287.0 294.6L288.5 309.6L290.0 304.0L291.5 287.7L293.0 287.2L294.5 300.1L296.0 306.1L297.5 325.1L299.0 299.5L300.5 309.6L302.0 308.6L303.5 308.0L305.0 283.3L306.5 312.5L308.0 301.6L309.5 318.6L311.0 305.0L312.5 313.7L314.0 309.8L315.5 274.1L317.0 288.5L318.5 315.5L320.0 316.3L321.5 297.7L323.0 319.2L324.5 308.3L326.0 303.9L327.5 291.5L329.0 283.2L330.5 291.1L332.0 330.9L333.5 309.8L335.0 302.4L336.5 318.3L338.0 318.8L339.5 341.0L341.0 327.6L342.5 308.6L344.0 337.5L345.5 298.2L347.0 309.3L348.5 311.2L350.0 302.5L351.5 316.9L353.0 296.6L354.5 306.8L356.0 307.1L357.5 295.7L359.0 323.5L360.5 296.0L362.0 312.6L363.5 299.3L365.0 310.4L366.5 283.0L368.0 302.4L369.5 317.3L371.0 277.9L372.5 272.7L374.0 303.2L375.5 282.3L377.0 273.8L378.5 278.0L380.0 289.0L381.5 303.3L383.0 287.7L384.5 277.4L386.0 293.6L387.5 290.0L389.0 299.4L390.5 283.0L392.0 271.0L393.5 280.7L395.0 278.0L396.5 280.7L398.0 270.8L399.5 288.3L401.0 258.1L402.5 265.3L404.0 282.5L405.5 255.3L407.0 276.4L408.5 274.6L410.0 272.9L411.5 278.7L413.0 253.3L414.5 288.0L416.0 276.5L417.5 269.9L419.0 262.8L420.5 257.2L422.0 264.8L423.5 285.9L425.0 246.1" fill="none" stroke="#777" stroke-width="2.4" stroke-linejoin="round" opacity="0.7"/>
<path d="M82.0 327.0L83.5 331.3L85.0 330.8L86.5 326.4L88.0 323.5L89.5 336.9L91.0 328.0L92.5 334.4L94.0 303.2L95.5 334.9L97.0 328.2L98.5 326.1L100.0 311.2L101.5 313.3L103.0 323.9L104.5 327.3L106.0 326.3L107.5 337.8L109.0 336.7L110.5 348.2L112.0 329.5L113.5 328.2L115.0 323.0L116.5 338.8L118.0 318.2L119.5 317.7L121.0 300.1L122.5 302.2L124.0 297.9L125.5 305.5L127.0 301.7L128.5 298.2L130.0 292.8L131.5 286.1L133.0 279.8L134.5 289.6L136.0 289.2L137.5 276.0L139.0 273.0L140.5 276.2L142.0 276.9L143.5 266.7L145.0 269.9L146.5 274.5L148.0 267.2L149.5 254.1L151.0 270.4L152.5 271.7L154.0 279.5L155.5 268.2L157.0 271.1L158.5 271.9L160.0 273.9L161.5 273.4L163.0 263.9L164.5 257.6L166.0 261.5L167.5 258.4L169.0 259.8L170.5 267.1L172.0 264.3L173.5 269.3L175.0 262.7L176.5 267.7L178.0 275.7L179.5 275.8L181.0 283.8L182.5 275.7L184.0 263.5L185.5 282.7L187.0 289.2L188.5 290.5M189.5 291.4L191.0 303.3L192.5 321.5L194.0 339.6M212.0 302.1L213.5 287.0L215.0 277.4L216.5 288.2L218.0 267.0L219.5 276.7L221.0 269.5L222.5 272.8L224.0 274.8L225.5 260.2L227.0 258.8L228.5 270.3L230.0 255.8L231.5 234.0L233.0 248.0L234.5 245.7L236.0 245.5L237.5 249.0L239.0 267.4L240.5 269.0L242.0 285.9L243.5 270.2L245.0 275.5L246.5 274.4L248.0 283.9L249.5 293.7L251.0 295.9L252.5 292.8L254.0 286.9L255.5 285.8L257.0 297.7L258.5 292.5L260.0 286.3L261.5 287.8L263.0 310.4L264.5 300.3L266.0 300.4L267.5 292.5L269.0 296.7L270.5 300.6L272.0 292.7L273.5 294.7L275.0 302.1L276.5 294.7L278.0 303.2L279.5 294.8L281.0 305.3L282.5 297.4L284.0 299.8L285.5 296.2L287.0 301.4L288.5 301.6L290.0 290.2L291.5 292.9L293.0 302.1L294.5 294.4L296.0 307.3L297.5 298.7L299.0 293.2L300.5 302.0L302.0 288.9L303.5 305.3L305.0 308.0L306.5 302.5L308.0 306.4L309.5 302.4L311.0 309.7L312.5 308.1L314.0 309.4L315.5 294.7L317.0 305.9L318.5 305.2L320.0 311.0L321.5 322.9L323.0 319.8L324.5 307.9L326.0 303.4L327.5 308.4L329.0 308.9L330.5 308.1L332.0 314.8L333.5 310.2L335.0 325.7L336.5 316.7L338.0 304.7L339.5 312.7L341.0 298.0L342.5 315.6L344.0 317.2L345.5 319.9L347.0 310.6L348.5 309.8L350.0 321.2L351.5 314.5L353.0 318.3L354.5 313.6L356.0 301.3L357.5 307.1L359.0 304.1L360.5 306.5L362.0 289.5L363.5 303.1L365.0 295.6L366.5 297.5L368.0 295.6L369.5 293.2L371.0 291.1L372.5 292.5L374.0 301.3L375.5 298.4L377.0 293.4L378.5 284.1L380.0 293.7L381.5 286.5L383.0 282.0L384.5 273.7L386.0 275.0L387.5 288.3L389.0 287.6L390.5 273.9L392.0 277.4L393.5 284.5L395.0 275.7L396.5 291.1L398.0 275.2L399.5 289.1L401.0 278.2L402.5 271.1L404.0 286.3L405.5 275.5L407.0 262.4L408.5 263.2L410.0 278.1L411.5 271.5L413.0 271.4L414.5 256.1L416.0 260.8L417.5 254.7L419.0 268.0L420.5 269.4L422.0 251.6L423.5 263.5L425.0 259.1" fill="none" stroke="#000" stroke-width="4" stroke-linejoin="round"/></svg></div>
<div class="abs" style="left:4.30px;top:91.90px;font:normal 6.2px 'DejaVu Sans',sans-serif;letter-spacing:-0.007px;color:#000;white-space:nowrap;line-height:normal;">2012-12-01 0:00 to 12:00</div>
<div class="abs" style="left:104px;top:2px;width:92px;height:81px;background:#fff;overflow:hidden"><svg class="th" width="92" height="81" viewBox="0 0 531 462" preserveAspectRatio="none" style="position:absolute;left:0;top:0"><g font-family="'Liberation Sans',sans-serif" font-size="12" fill="#484848">
<rect x="82.0" y="51" width="344.0" height="126" fill="url(#specg)"/>
<rect x="82.0" y="155" width="344.0" height="2" fill="#12f77c"/>
<rect x="82.0" y="159" width="344.0" height="2" fill="#12f67a"/>
<rect x="82.0" y="163" width="344.0" height="3" fill="#1af470"/>
<rect x="82.0" y="168" width="344.0" height="2" fill="#08f98e"/>
<rect x="82.0" y="171" width="344.0" height="4" fill="#22f364"/>
<rect x="82.0" y="175" width="344.0" height="2" fill="#10f780"/>
<rect x="82.0" y="56" width="344.0" height="2" fill="#a4fb1c"/>
<rect x="82.0" y="51" width="344.0" height="5" fill="#22f25e" opacity="0.6"/>
<rect x="82.0" y="78" width="344.0" height="1.5" fill="#3cf64c" opacity="0.8"/>
<rect x="82.0" y="87" width="344.0" height="1" fill="#30f656" opacity="0.5"/>
<path d="M99.6 51.6L102.6 53.4L105.6 53.0L108.6 54.3L111.6 56.6L114.6 59.0L117.6 59.3L120.6 59.4L123.6 61.0L126.6 62.9L129.6 65.0L132.6 65.6L135.6 66.6L138.6 68.0L141.6 69.7L144.6 70.3L147.6 72.2L150.6 73.7L153.6 76.4L156.6 76.7L159.6 79.1L162.6 79.1L165.6 82.2L168.6 83.3L171.6 84.4L174.6 86.4L177.6 88.7L180.6 89.4L183.6 92.0L186.6 94.1L189.6 95.7L192.6 97.4L195.6 96.7L198.6 99.6L201.6 100.4L204.6 103.1L207.6 103.7L210.6 105.1L213.6 106.6L216.6 107.1L219.6 108.9L222.6 109.5L225.6 113.0L228.6 112.3L231.6 114.0L234.6 113.9L237.6 115.4L240.6 117.2L243.6 119.8L246.6 121.1L249.6 122.0L252.6 122.6L255.6 125.8L258.6 124.9L261.6 125.6L264.6 125.1L267.6 122.4L270.6 121.9L273.6 120.9L276.6 118.5L279.6 117.4L282.6 115.6L285.6 113.5L288.6 110.0L291.6 110.0L294.6 109.4L297.6 106.6L300.6 105.9L303.6 105.0L306.6 104.4L309.6 100.6L312.6 99.7L315.6 98.6L318.6 97.3L321.6 94.1L324.6 95.1L327.6 91.3L330.6 91.2L333.6 88.6L336.6 87.5L339.6 86.8L342.6 84.5L345.6 82.4L348.6 79.9L351.6 78.5L354.6 76.3L357.6 77.4L360.6 72.9L363.6 70.4L366.6 72.0L369.6 70.0L372.6 67.0L375.6 66.3L378.6 63.3L381.6 61.8L384.6 60.9L387.6 59.2L390.6 56.8L393.6 56.7L396.6 54.3L399.6 52.2" fill="none" stroke="#70fb20" stroke-width="5" opacity="0.9" stroke-linejoin="round"/><path d="M128.8 95.1 L146.0 177.0 L111.7 177.0 Z" fill="#90fb20" opacity="0.8"/><rect x="121.9" y="144.2" width="13.7" height="22.7" fill="#ffe000" opacity="1"/><path d="M386.1 88.8 L403.2 177.0 L368.9 177.0 Z" fill="#90fb20" opacity="0.8"/><rect x="380.9" y="136.7" width="12.0" height="27.7" fill="#ffd000" opacity="1"/><rect x="89.4" y="151.8" width="27.4" height="6.3" fill="#d0ff10" opacity="1"/>
<path d="M82.0 46.5 H426.5 V177.5 H82.0 Z" fill="none" stroke="#111" stroke-width="2.6"/>
<path d="M73.5 176.5 H81.5M73.5 102.5 H81.5M77.5 154.2 H81.5M77.5 141.2 H81.5M77.5 131.9 H81.5M77.5 124.8 H81.5M77.5 118.9 H81.5M77.5 114.0 H81.5M77.5 109.7 H81.5M77.5 105.9 H81.5M77.5 80.2 H81.5M77.5 67.2 H81.5M77.5 57.9 H81.5M77.5 50.8 H81.5M82.0 177.5 V186.5M110.7 177.5 V182.5M139.4 177.5 V182.5M168.1 177.5 V182.5M196.8 177.5 V182.5M225.5 177.5 V182.5M254.2 177.5 V186.5M283.0 177.5 V182.5M311.7 177.5 V182.5M340.4 177.5 V182.5M369.1 177.5 V182.5M397.8 177.5 V182.5M426.5 177.5 V186.5" stroke="#222" stroke-width="2.6" fill="none"/>
<rect x="437" y="46.599999999999994" width="12.5" height="131.70000000000002" fill="url(#jet)"/>
<path d="M450.0 46.599999999999994 V178.8M449.5 61.0 H457.5M449.5 80.7 H457.5M449.5 100.4 H457.5M449.5 119.8 H457.5M449.5 139.0 H457.5M449.5 158.7 H457.5M449.5 178.1 H457.5M449.5 51.3 H453.5M449.5 71.0 H453.5M449.5 90.6 H453.5M449.5 110.1 H453.5M449.5 129.4 H453.5M449.5 148.9 H453.5M449.5 168.4 H453.5" stroke="#222" stroke-width="2.6" fill="none"/>
<text x="461.5" y="67.0" text-anchor="start" font-size="12" textLength="13.5" lengthAdjust="spacingAndGlyphs">10</text>
<text x="475.5" y="62.0" text-anchor="start" font-size="12" textLength="18" lengthAdjust="spacingAndGlyphs">-10</text>
<text x="461.5" y="86.7" text-anchor="start" font-size="12" textLength="13.5" lengthAdjust="spacingAndGlyphs">10</text>
<text x="475.5" y="81.7" text-anchor="start" font-size="12" textLength="18" lengthAdjust="spacingAndGlyphs">-12</text>
<text x="461.5" y="106.4" text-anchor="start" font-size="12" textLength="13.5" lengthAdjust="spacingAndGlyphs">10</text>
<text x="475.5" y="101.4" text-anchor="start" font-size="12" textLength="18" lengthAdjust="spacingAndGlyphs">-14</text>
<text x="461.5" y="125.8" text-anchor="start" font-size="12" textLength="13.5" lengthAdjust="spacingAndGlyphs">10</text>
<text x="475.5" y="120.8" text-anchor="start" font-size="12" textLength="18" lengthAdjust="spacingAndGlyphs">-16</text>
<text x="461.5" y="145.0" text-anchor="start" font-size="12" textLength="13.5" lengthAdjust="spacingAndGlyphs">10</text>
<text x="475.5" y="140.0" text-anchor="start" font-size="12" textLength="18" lengthAdjust="spacingAndGlyphs">-18</text>
<text x="461.5" y="164.7" text-anchor="start" font-size="12" textLength="13.5" lengthAdjust="spacingAndGlyphs">10</text>
<text x="475.5" y="159.7" text-anchor="start" font-size="12" textLength="18" lengthAdjust="spacingAndGlyphs">-20</text>
<text x="461.5" y="184.1" text-anchor="start" font-size="12" textLength="13.5" lengthAdjust="spacingAndGlyphs">10</text>
<text x="475.5" y="179.1" text-anchor="start" font-size="12" textLength="18" lengthAdjust="spacingAndGlyphs">-22</text>
<text transform="translate(511.5 113) rotate(-90)" text-anchor="middle" textLength="76" lengthAdjust="spacingAndGlyphs">V^2/m^2/Hz</text>
<text x="153.8" y="38.5" text-anchor="start" font-size="12" textLength="200.5" lengthAdjust="spacingAndGlyphs">RBSP-A/EMFISIS&#160; HFR Spectra Data</text>
<text x="48.599999999999994" y="110" text-anchor="start" font-size="12" textLength="14" lengthAdjust="spacingAndGlyphs">10</text>
<text x="63.30000000000001" y="105" text-anchor="start" font-size="12" textLength="6.5" lengthAdjust="spacingAndGlyphs">5</text>
<text x="48.599999999999994" y="184.60000000000002" text-anchor="start" font-size="12" textLength="14" lengthAdjust="spacingAndGlyphs">10</text>
<text x="63.30000000000001" y="179.60000000000002" text-anchor="start" font-size="12" textLength="6.5" lengthAdjust="spacingAndGlyphs">4</text>
<text transform="translate(38.5 112.80000000000001) rotate(-90)" text-anchor="middle" textLength="15">Hz</text>
<text x="66.30000000000001" y="202.3" text-anchor="start" font-size="12" textLength="32.5" lengthAdjust="spacingAndGlyphs">12:00</text>
<text x="238" y="202.3" text-anchor="start" font-size="12" textLength="32.5" lengthAdjust="spacingAndGlyphs">18:00</text>
<text x="410" y="202.3" text-anchor="start" font-size="12" textLength="32.5" lengthAdjust="spacingAndGlyphs">00:00</text>
<text x="66.80000000000001" y="213.8" text-anchor="start" font-size="12" textLength="66" lengthAdjust="spacingAndGlyphs">2012-12-01</text>
<text x="137.7" y="205.5" text-anchor="start" font-size="12" textLength="231.3" lengthAdjust="spacingAndGlyphs">RBSP-A/ect-hope-L3&#160; HOPE e Tperp/Tpar</text>
<path d="M82.0 225.0 H425.5 V357.5" fill="none" stroke="#333" stroke-width="1"/>
<path d="M82.0 225.0 V357.5 H425.5" fill="none" stroke="#333" stroke-width="2.6"/>
<path d="M73.5 232.7 H81.5M73.5 249.8 H81.5M73.5 268.7 H81.5M73.5 289.9 H81.5M73.5 313.8 H81.5M73.5 341.5 H81.5M77.5 241.1 H81.5M77.5 259.0 H81.5M77.5 279.0 H81.5M77.5 301.5 H81.5M77.5 327.2 H81.5M77.5 357.1 H81.5M82.0 357.5 V365.5M110.7 357.5 V361.5M139.4 357.5 V361.5M168.1 357.5 V361.5M196.8 357.5 V361.5M225.5 357.5 V361.5M254.2 357.5 V365.5M283.0 357.5 V361.5M311.7 357.5 V361.5M340.4 357.5 V361.5M369.1 357.5 V361.5M397.8 357.5 V361.5M426.5 357.5 V365.5" stroke="#222" stroke-width="2.6" fill="none"/>
<text x="51.80000000000001" y="237.0" text-anchor="start" font-size="12" textLength="16.5" lengthAdjust="spacingAndGlyphs">2.2</text>
<text x="51.80000000000001" y="254.1" text-anchor="start" font-size="12" textLength="16.5" lengthAdjust="spacingAndGlyphs">2.0</text>
<text x="51.80000000000001" y="273.0" text-anchor="start" font-size="12" textLength="16.5" lengthAdjust="spacingAndGlyphs">1.8</text>
<text x="51.80000000000001" y="294.2" text-anchor="start" font-size="12" textLength="16.5" lengthAdjust="spacingAndGlyphs">1.6</text>
<text x="51.80000000000001" y="318.1" text-anchor="start" font-size="12" textLength="16.5" lengthAdjust="spacingAndGlyphs">1.4</text>
<text x="51.80000000000001" y="345.8" text-anchor="start" font-size="12" textLength="16.5" lengthAdjust="spacingAndGlyphs">1.2</text>
<text transform="translate(42.5 291.6) rotate(-90)" text-anchor="middle" textLength="71.5">e Tperp/Tpar</text>
<text x="98.69999999999999" y="380.8" text-anchor="end" font-size="12" textLength="32.3" lengthAdjust="spacingAndGlyphs">12:00</text>
<text x="184.5" y="380.8" text-anchor="end" font-size="12" textLength="32.3" lengthAdjust="spacingAndGlyphs">15:00</text>
<text x="270" y="380.8" text-anchor="end" font-size="12" textLength="32.3" lengthAdjust="spacingAndGlyphs">18:00</text>
<text x="356" y="380.8" text-anchor="end" font-size="12" textLength="32.3" lengthAdjust="spacingAndGlyphs">21:00</text>
<text x="442" y="380.8" text-anchor="end" font-size="12" textLength="32.3" lengthAdjust="spacingAndGlyphs">00:00</text>
<text x="98.69999999999999" y="395.8" text-anchor="end" font-size="12" textLength="32.3" lengthAdjust="spacingAndGlyphs">4.141</text>
<text x="184.5" y="395.8" text-anchor="end" font-size="12" textLength="32.3" lengthAdjust="spacingAndGlyphs">4.092</text>
<text x="270" y="395.8" text-anchor="end" font-size="12" textLength="32.3" lengthAdjust="spacingAndGlyphs">2.308</text>
<text x="356" y="395.8" text-anchor="end" font-size="12" textLength="32.3" lengthAdjust="spacingAndGlyphs">4.911</text>
<text x="442" y="395.8" text-anchor="end" font-size="12" textLength="32.3" lengthAdjust="spacingAndGlyphs">2.748</text>
<text x="98.69999999999999" y="410.3" text-anchor="end" font-size="12" textLength="36" lengthAdjust="spacingAndGlyphs">-7.083</text>
<text x="184.5" y="410.3" text-anchor="end" font-size="12" textLength="32.3" lengthAdjust="spacingAndGlyphs">3.541</text>
<text x="270" y="410.3" text-anchor="end" font-size="12" textLength="36" lengthAdjust="spacingAndGlyphs">-7.447</text>
<text x="356" y="410.3" text-anchor="end" font-size="12" textLength="32.3" lengthAdjust="spacingAndGlyphs">10.409</text>
<text x="442" y="410.3" text-anchor="end" font-size="12" textLength="36" lengthAdjust="spacingAndGlyphs">-4.223</text>
<text x="98.69999999999999" y="425.2" text-anchor="end" font-size="12" textLength="32.3" lengthAdjust="spacingAndGlyphs">8.641</text>
<text x="184.5" y="425.2" text-anchor="end" font-size="12" textLength="32.3" lengthAdjust="spacingAndGlyphs">0.558</text>
<text x="270" y="425.2" text-anchor="end" font-size="12" textLength="32.3" lengthAdjust="spacingAndGlyphs">17.436</text>
<text x="356" y="425.2" text-anchor="end" font-size="12" textLength="32.3" lengthAdjust="spacingAndGlyphs">4.994</text>
<text x="442" y="425.2" text-anchor="end" font-size="12" textLength="32.3" lengthAdjust="spacingAndGlyphs">10.557</text>
<text x="98.69999999999999" y="440.0" text-anchor="end" font-size="12" textLength="32.3" lengthAdjust="spacingAndGlyphs">4.713</text>
<text x="184.5" y="440.0" text-anchor="end" font-size="12" textLength="32.3" lengthAdjust="spacingAndGlyphs">3.627</text>
<text x="270" y="440.0" text-anchor="end" font-size="12" textLength="32.3" lengthAdjust="spacingAndGlyphs">6.149</text>
<text x="356" y="440.0" text-anchor="end" font-size="12" textLength="32.3" lengthAdjust="spacingAndGlyphs">3.249</text>
<text x="442" y="440.0" text-anchor="end" font-size="12" textLength="32.3" lengthAdjust="spacingAndGlyphs">3.063</text>
<text x="36" y="395.79999999999995" textLength="8.5">R</text><text x="44.5" y="399" font-size="6.5" font-weight="bold">E</text>
<text x="49.30000000000001" y="410.29999999999995" text-anchor="end" font-size="12" textLength="27" lengthAdjust="spacingAndGlyphs">MLat</text>
<text x="49.30000000000001" y="425.20000000000005" text-anchor="end" font-size="12" textLength="23" lengthAdjust="spacingAndGlyphs">MLT</text>
<text x="49.30000000000001" y="440" text-anchor="end" font-size="12">L</text>
<text x="162.60000000000002" y="457.1" text-anchor="start" font-size="12" textLength="182.5" lengthAdjust="spacingAndGlyphs">2012-12-01 (336) 12:00 to 24:00</text>
</g>
<path d="M82.0 275.5L83.5 245.6L85.0 255.1L86.5 247.3L88.0 267.2L89.5 281.1L91.0 265.1L92.5 288.2L94.0 269.2L95.5 275.0L97.0 257.9L98.5 255.5L100.0 270.4L101.5 272.3L103.0 268.5L104.5 277.4L106.0 277.5L107.5 286.4M124.9 328.1L126.4 316.2L127.9 303.5L129.4 281.3L130.9 280.0L132.4 268.1L133.9 276.3L135.4 276.5L136.9 261.2L138.4 267.7L139.9 265.5L141.4 307.1L142.9 264.9L144.4 268.6L145.9 258.6L147.4 266.3L148.9 288.4L150.4 287.2L151.9 257.1L153.4 284.7L154.9 282.6L156.4 284.1L157.9 275.3L159.4 274.7L160.9 278.2L162.4 276.9L163.9 298.8L165.4 299.4L166.9 288.0L168.4 288.3L169.9 289.1L171.4 299.0L172.9 292.7L174.4 289.7L175.9 299.9L177.4 271.3L178.9 299.6L180.4 284.9L181.9 302.2L183.4 295.8L184.9 293.1L186.4 287.1L187.9 290.3L189.4 296.2L190.9 311.8L192.4 285.0L193.9 315.6L195.4 319.3L196.9 311.2L198.4 302.0L199.9 310.5L201.4 314.3L202.9 311.4L204.4 310.8L205.9 323.8L207.4 325.3L208.9 311.6L210.4 310.7L211.9 328.0L213.4 319.5L214.9 314.6L216.4 329.4L217.9 314.5L219.4 342.8L220.9 311.8L222.4 322.7L223.9 311.5L225.4 332.5L226.9 320.4L228.4 332.7L229.9 320.8L231.4 312.0L232.9 312.8L234.4 312.6L235.9 321.8L237.4 323.9L238.9 306.6L240.4 311.7L241.9 326.9L243.4 310.7L244.9 289.2L246.4 316.4L247.9 313.8L249.4 300.4L250.9 305.4L252.4 308.1L253.9 302.5L255.4 309.2L256.9 308.0L258.4 310.7L259.9 303.2L261.4 314.3L262.9 305.9L264.4 293.1L265.9 292.9L267.4 302.5L268.9 298.6L270.4 285.1L271.9 312.7L273.4 298.0L274.9 281.1L276.4 297.1L277.9 297.2L279.4 296.7L280.9 305.2L282.4 301.6L283.9 298.4L285.4 284.4L286.9 293.0L288.4 279.2L289.9 291.2L291.4 276.3L292.9 286.6L294.4 265.2L295.9 293.8L297.4 283.1L298.9 286.8L300.4 294.9L301.9 289.9L303.4 276.5L304.9 290.7L306.4 269.8L307.9 288.7L309.4 275.3L310.9 292.6L312.4 296.4L313.9 290.3L315.4 283.0L316.9 300.8L318.4 282.9L319.9 289.9L321.4 275.5L322.9 271.1L324.4 282.6L325.9 308.3L327.4 286.2L328.9 298.0L330.4 280.4L331.9 299.9L333.4 284.1L334.9 283.4L336.4 273.1L337.9 283.9L339.4 265.9L340.9 273.6L342.4 275.7L343.9 263.8L345.4 260.4L346.9 275.9L348.4 265.9L349.9 264.2L351.4 269.7L352.9 279.4L354.4 279.7L355.9 286.7L357.4 307.6L358.9 337.9M384.3 305.2L385.8 286.9L387.3 305.2L388.8 284.0L390.3 274.3L391.8 287.7L393.3 283.7L394.8 276.2L396.3 265.6L397.8 265.3L399.3 268.5L400.8 283.7L402.3 275.4L403.8 271.5L405.3 258.8L406.8 267.5L408.3 272.7L409.8 266.0L411.3 253.0L412.8 261.8L414.3 247.1L415.8 263.5L417.3 258.0L418.8 239.2L420.3 255.6L421.8 254.2L423.3 243.1L424.8 254.2" fill="none" stroke="#777" stroke-width="2.4" stroke-linejoin="round" opacity="0.7"/>
<path d="M82.0 248.8L83.5 251.7L85.0 246.9L86.5 257.9L88.0 255.7L89.5 267.3L91.0 263.8L92.5 263.5L94.0 259.2L95.5 269.4L97.0 263.8L98.5 271.3L100.0 279.3L101.5 280.3L103.0 280.1L104.5 274.6L106.0 282.3L107.5 287.4M124.9 315.9L126.4 300.6L127.9 303.8L129.4 273.8L130.9 283.8L132.4 275.7L133.9 284.8L135.4 272.8L136.9 263.9L138.4 272.2L139.9 280.4L141.4 261.1L142.9 263.4L144.4 270.9L145.9 270.3L147.4 267.9L148.9 270.2L150.4 270.2L151.9 283.8L153.4 275.6L154.9 282.1L156.4 281.9L157.9 287.7L159.4 284.8L160.9 286.1L162.4 291.9L163.9 288.5L165.4 291.1L166.9 291.3L168.4 274.7L169.9 306.8L171.4 289.3L172.9 281.9L174.4 287.9L175.9 289.5L177.4 288.4L178.9 299.7L180.4 294.9L181.9 296.3L183.4 300.0L184.9 301.7L186.4 303.4L187.9 294.6L189.4 306.1L190.9 299.2L192.4 311.8L193.9 302.2L195.4 306.6L196.9 309.4L198.4 316.1L199.9 313.1L201.4 312.9L202.9 306.1L204.4 317.8L205.9 324.9L207.4 314.2L208.9 319.9L210.4 318.4L211.9 319.3L213.4 329.1L214.9 324.0L216.4 321.8L217.9 317.2L219.4 315.5L220.9 316.6L222.4 328.2L223.9 316.2L225.4 321.4L226.9 319.3L228.4 315.6L229.9 322.1L231.4 324.0L232.9 305.8L234.4 311.7L235.9 316.9L237.4 305.9L238.9 312.4L240.4 312.4L241.9 317.5L243.4 317.0L244.9 316.5L246.4 309.4L247.9 307.4L249.4 307.0L250.9 307.0L252.4 304.6L253.9 310.2L255.4 308.1L256.9 301.6L258.4 299.3L259.9 300.6L261.4 293.5L262.9 301.3L264.4 305.5L265.9 292.9L267.4 302.2L268.9 289.2L270.4 311.9L271.9 306.8L273.4 296.9L274.9 289.4L276.4 285.9L277.9 295.1L279.4 278.3L280.9 291.0L282.4 288.2L283.9 286.9L285.4 292.0L286.9 290.1L288.4 289.8L289.9 296.0L291.4 279.2L292.9 292.2L294.4 281.2L295.9 288.6L297.4 281.4L298.9 290.0L300.4 283.1L301.9 287.6L303.4 294.9L304.9 289.8L306.4 283.3L307.9 288.4L309.4 294.8L310.9 290.8L312.4 280.7L313.9 270.8L315.4 291.9L316.9 289.0L318.4 294.7L319.9 285.9L321.4 288.3L322.9 280.6L324.4 287.4L325.9 293.6L327.4 295.8L328.9 289.6L330.4 287.5L331.9 290.3L333.4 289.0L334.9 279.5L336.4 276.3L337.9 279.2L339.4 278.9L340.9 270.9L342.4 270.6L343.9 275.7L345.4 291.8L346.9 274.1L348.4 277.6L349.9 266.3L351.4 285.5L352.9 281.5L354.4 278.7L355.9 295.6L357.4 309.4L358.9 322.6M384.3 285.4L385.8 294.4L387.3 284.5L388.8 282.9L390.3 280.3L391.8 271.1L393.3 277.7L394.8 279.3L396.3 282.3L397.8 284.7L399.3 278.4L400.8 271.8L402.3 264.8L403.8 267.8L405.3 264.3L406.8 267.7L408.3 264.9L409.8 249.3L411.3 255.9L412.8 248.8L414.3 256.8L415.8 247.1L417.3 252.4L418.8 258.5L420.3 251.3L421.8 247.2L423.3 253.3L424.8 238.7" fill="none" stroke="#000" stroke-width="4" stroke-linejoin="round"/></svg></div>
<div class="abs" style="left:104.30px;top:91.90px;font:normal 6.2px 'DejaVu Sans',sans-serif;letter-spacing:0.000px;color:#000;white-space:nowrap;line-height:normal;">2012-12-01 12:00 to 24:00</div>
<div class="abs" style="left:204px;top:2px;width:92px;height:81px;background:#fff;overflow:hidden"><svg class="th" width="92" height="81" viewBox="0 0 531 462" preserveAspectRatio="none" style="position:absolute;left:0;top:0"><g font-family="'Liberation Sans',sans-serif" font-size="12" fill="#484848">
<rect x="82.0" y="51" width="344.0" height="126" fill="url(#specg)"/>
<rect x="82.0" y="155" width="344.0" height="2" fill="#12f77c"/>
<rect x="82.0" y="159" width="344.0" height="2" fill="#12f67a"/>
<rect x="82.0" y="163" width="344.0" height="3" fill="#1af470"/>
<rect x="82.0" y="168" width="344.0" height="2" fill="#08f98e"/>
<rect x="82.0" y="171" width="344.0" height="4" fill="#22f364"/>
<rect x="82.0" y="175" width="344.0" height="2" fill="#10f780"/>
<rect x="82.0" y="56" width="344.0" height="2" fill="#a4fb1c"/>
<rect x="82.0" y="51" width="344.0" height="5" fill="#22f25e" opacity="0.6"/>
<rect x="82.0" y="78" width="344.0" height="1.5" fill="#3cf64c" opacity="0.8"/>
<rect x="82.0" y="87" width="344.0" height="1" fill="#30f656" opacity="0.5"/>
<rect x="82.5" y="126.6" width="154.3" height="50.4" fill="#50f830" opacity="0.45"/><rect x="89.4" y="158.1" width="130.3" height="10.1" fill="#b0fb18" opacity="0.7"/><path d="M212.8 177.4L215.8 167.4L218.8 161.0L221.8 149.1L224.8 139.4L227.8 130.1L230.8 119.9L233.8 110.3L236.8 101.9L239.8 97.1L242.8 94.2L245.8 89.4L248.8 84.2L251.8 80.6L254.8 77.1L257.8 72.2L260.8 69.9L263.8 73.1L266.8 77.5L269.8 79.5L272.8 83.5L275.8 87.6L278.8 91.2L281.8 93.1L284.8 98.7L287.8 100.3L290.8 108.2L293.8 113.9L296.8 120.7L299.8 126.9L302.8 134.7L305.8 143.7L308.8 148.0L311.8 156.7L314.8 163.4" fill="none" stroke="#50f838" stroke-width="4" opacity="0.7" stroke-linejoin="round"/><rect x="334.6" y="51.0" width="90.9" height="126.0" fill="#ffd21a" opacity="1"/><rect x="334.6" y="51.0" width="90.9" height="35.3" fill="#9cf520" opacity="1"/><rect x="353.5" y="57.3" width="13.7" height="81.9" fill="#fff27a" opacity="1"/><rect x="384.3" y="57.3" width="13.7" height="75.6" fill="#fff06a" opacity="1"/><rect x="334.6" y="129.1" width="90.9" height="47.9" fill="#ffa010" opacity="0.85"/><rect x="339.8" y="151.8" width="68.6" height="12.6" fill="#ff5a10" opacity="0.8"/>
<path d="M82.0 46.5 H426.5 V177.5 H82.0 Z" fill="none" stroke="#111" stroke-width="2.6"/>
<path d="M73.5 176.5 H81.5M73.5 102.5 H81.5M77.5 154.2 H81.5M77.5 141.2 H81.5M77.5 131.9 H81.5M77.5 124.8 H81.5M77.5 118.9 H81.5M77.5 114.0 H81.5M77.5 109.7 H81.5M77.5 105.9 H81.5M77.5 80.2 H81.5M77.5 67.2 H81.5M77.5 57.9 H81.5M77.5 50.8 H81.5M82.0 177.5 V186.5M110.7 177.5 V182.5M139.4 177.5 V182.5M168.1 177.5 V182.5M196.8 177.5 V182.5M225.5 177.5 V182.5M254.2 177.5 V186.5M283.0 177.5 V182.5M311.7 177.5 V182.5M340.4 177.5 V182.5M369.1 177.5 V182.5M397.8 177.5 V182.5M426.5 177.5 V186.5" stroke="#222" stroke-width="2.6" fill="none"/>
<rect x="437" y="46.599999999999994" width="12.5" height="131.70000000000002" fill="url(#jet)"/>
<path d="M450.0 46.599999999999994 V178.8M449.5 61.0 H457.5M449.5 80.7 H457.5M449.5 100.4 H457.5M449.5 119.8 H457.5M449.5 139.0 H457.5M449.5 158.7 H457.5M449.5 178.1 H457.5M449.5 51.3 H453.5M449.5 71.0 H453.5M449.5 90.6 H453.5M449.5 110.1 H453.5M449.5 129.4 H453.5M449.5 148.9 H453.5M449.5 168.4 H453.5" stroke="#222" stroke-width="2.6" fill="none"/>
<text x="461.5" y="67.0" text-anchor="start" font-size="12" textLength="13.5" lengthAdjust="spacingAndGlyphs">10</text>
<text x="475.5" y="62.0" text-anchor="start" font-size="12" textLength="18" lengthAdjust="spacingAndGlyphs">-10</text>
<text x="461.5" y="86.7" text-anchor="start" font-size="12" textLength="13.5" lengthAdjust="spacingAndGlyphs">10</text>
<text x="475.5" y="81.7" text-anchor="start" font-size="12" textLength="18" lengthAdjust="spacingAndGlyphs">-12</text>
<text x="461.5" y="106.4" text-anchor="start" font-size="12" textLength="13.5" lengthAdjust="spacingAndGlyphs">10</text>
<text x="475.5" y="101.4" text-anchor="start" font-size="12" textLength="18" lengthAdjust="spacingAndGlyphs">-14</text>
<text x="461.5" y="125.8" text-anchor="start" font-size="12" textLength="13.5" lengthAdjust="spacingAndGlyphs">10</text>
<text x="475.5" y="120.8" text-anchor="start" font-size="12" textLength="18" lengthAdjust="spacingAndGlyphs">-16</text>
<text x="461.5" y="145.0" text-anchor="start" font-size="12" textLength="13.5" lengthAdjust="spacingAndGlyphs">10</text>
<text x="475.5" y="140.0" text-anchor="start" font-size="12" textLength="18" lengthAdjust="spacingAndGlyphs">-18</text>
<text x="461.5" y="164.7" text-anchor="start" font-size="12" textLength="13.5" lengthAdjust="spacingAndGlyphs">10</text>
<text x="475.5" y="159.7" text-anchor="start" font-size="12" textLength="18" lengthAdjust="spacingAndGlyphs">-20</text>
<text x="461.5" y="184.1" text-anchor="start" font-size="12" textLength="13.5" lengthAdjust="spacingAndGlyphs">10</text>
<text x="475.5" y="179.1" text-anchor="start" font-size="12" textLength="18" lengthAdjust="spacingAndGlyphs">-22</text>
<text transform="translate(511.5 113) rotate(-90)" text-anchor="middle" textLength="76" lengthAdjust="spacingAndGlyphs">V^2/m^2/Hz</text>
<text x="153.8" y="38.5" text-anchor="start" font-size="12" textLength="200.5" lengthAdjust="spacingAndGlyphs">RBSP-A/EMFISIS&#160; HFR Spectra Data</text>
<text x="48.599999999999994" y="110" text-anchor="start" font-size="12" textLength="14" lengthAdjust="spacingAndGlyphs">10</text>
<text x="63.30000000000001" y="105" text-anchor="start" font-size="12" textLength="6.5" lengthAdjust="spacingAndGlyphs">5</text>
<text x="48.599999999999994" y="184.60000000000002" text-anchor="start" font-size="12" textLength="14" lengthAdjust="spacingAndGlyphs">10</text>
<text x="63.30000000000001" y="179.60000000000002" text-anchor="start" font-size="12" textLength="6.5" lengthAdjust="spacingAndGlyphs">4</text>
<text transform="translate(38.5 112.80000000000001) rotate(-90)" text-anchor="middle" textLength="15">Hz</text>
<text x="66.30000000000001" y="202.3" text-anchor="start" font-size="12" textLength="32.5" lengthAdjust="spacingAndGlyphs">00:00</text>
<text x="238" y="202.3" text-anchor="start" font-size="12" textLength="32.5" lengthAdjust="spacingAndGlyphs">06:00</text>
<text x="410" y="202.3" text-anchor="start" font-size="12" textLength="32.5" lengthAdjust="spacingAndGlyphs">12:00</text>
<text x="66.80000000000001" y="213.8" text-anchor="start" font-size="12" textLength="66" lengthAdjust="spacingAndGlyphs">2012-12-02</text>
<text x="137.7" y="205.5" text-anchor="start" font-size="12" textLength="231.3" lengthAdjust="spacingAndGlyphs">RBSP-A/ect-hope-L3&#160; HOPE e Tperp/Tpar</text>
<path d="M82.0 225.0 H425.5 V357.5" fill="none" stroke="#333" stroke-width="1"/>
<path d="M82.0 225.0 V357.5 H425.5" fill="none" stroke="#333" stroke-width="2.6"/>
<path d="M73.5 232.7 H81.5M73.5 249.8 H81.5M73.5 268.7 H81.5M73.5 289.9 H81.5M73.5 313.8 H81.5M73.5 341.5 H81.5M77.5 241.1 H81.5M77.5 259.0 H81.5M77.5 279.0 H81.5M77.5 301.5 H81.5M77.5 327.2 H81.5M77.5 357.1 H81.5M82.0 357.5 V365.5M110.7 357.5 V361.5M139.4 357.5 V361.5M168.1 357.5 V361.5M196.8 357.5 V361.5M225.5 357.5 V361.5M254.2 357.5 V365.5M283.0 357.5 V361.5M311.7 357.5 V361.5M340.4 357.5 V361.5M369.1 357.5 V361.5M397.8 357.5 V361.5M426.5 357.5 V365.5" stroke="#222" stroke-width="2.6" fill="none"/>
<text x="51.80000000000001" y="237.0" text-anchor="start" font-size="12" textLength="16.5" lengthAdjust="spacingAndGlyphs">2.2</text>
<text x="51.80000000000001" y="254.1" text-anchor="start" font-size="12" textLength="16.5" lengthAdjust="spacingAndGlyphs">2.0</text>
<text x="51.80000000000001" y="273.0" text-anchor="start" font-size="12" textLength="16.5" lengthAdjust="spacingAndGlyphs">1.8</text>
<text x="51.80000000000001" y="294.2" text-anchor="start" font-size="12" textLength="16.5" lengthAdjust="spacingAndGlyphs">1.6</text>
<text x="51.80000000000001" y="318.1" text-anchor="start" font-size="12" textLength="16.5" lengthAdjust="spacingAndGlyphs">1.4</text>
<text x="51.80000000000001" y="345.8" text-anchor="start" font-size="12" textLength="16.5" lengthAdjust="spacingAndGlyphs">1.2</text>
<text transform="translate(42.5 291.6) rotate(-90)" text-anchor="middle" textLength="71.5">e Tperp/Tpar</text>
<text x="98.69999999999999" y="380.8" text-anchor="end" font-size="12" textLength="32.3" lengthAdjust="spacingAndGlyphs">00:00</text>
<text x="184.5" y="380.8" text-anchor="end" font-size="12" textLength="32.3" lengthAdjust="spacingAndGlyphs">03:00</text>
<text x="270" y="380.8" text-anchor="end" font-size="12" textLength="32.3" lengthAdjust="spacingAndGlyphs">06:00</text>
<text x="356" y="380.8" text-anchor="end" font-size="12" textLength="32.3" lengthAdjust="spacingAndGlyphs">09:00</text>
<text x="442" y="380.8" text-anchor="end" font-size="12" textLength="32.3" lengthAdjust="spacingAndGlyphs">12:00</text>
<text x="98.69999999999999" y="395.8" text-anchor="end" font-size="12" textLength="32.3" lengthAdjust="spacingAndGlyphs">3.525</text>
<text x="184.5" y="395.8" text-anchor="end" font-size="12" textLength="32.3" lengthAdjust="spacingAndGlyphs">1.975</text>
<text x="270" y="395.8" text-anchor="end" font-size="12" textLength="32.3" lengthAdjust="spacingAndGlyphs">2.819</text>
<text x="356" y="395.8" text-anchor="end" font-size="12" textLength="32.3" lengthAdjust="spacingAndGlyphs">4.913</text>
<text x="442" y="395.8" text-anchor="end" font-size="12" textLength="32.3" lengthAdjust="spacingAndGlyphs">4.410</text>
<text x="98.69999999999999" y="410.3" text-anchor="end" font-size="12" textLength="43.3" lengthAdjust="spacingAndGlyphs">-12.908</text>
<text x="184.5" y="410.3" text-anchor="end" font-size="12" textLength="32.3" lengthAdjust="spacingAndGlyphs">8.591</text>
<text x="270" y="410.3" text-anchor="end" font-size="12" textLength="32.3" lengthAdjust="spacingAndGlyphs">7.835</text>
<text x="356" y="410.3" text-anchor="end" font-size="12" textLength="43.3" lengthAdjust="spacingAndGlyphs">-16.772</text>
<text x="442" y="410.3" text-anchor="end" font-size="12" textLength="32.3" lengthAdjust="spacingAndGlyphs">1.335</text>
<text x="98.69999999999999" y="425.2" text-anchor="end" font-size="12" textLength="32.3" lengthAdjust="spacingAndGlyphs">8.779</text>
<text x="184.5" y="425.2" text-anchor="end" font-size="12" textLength="32.3" lengthAdjust="spacingAndGlyphs">1.879</text>
<text x="270" y="425.2" text-anchor="end" font-size="12" textLength="32.3" lengthAdjust="spacingAndGlyphs">7.406</text>
<text x="356" y="425.2" text-anchor="end" font-size="12" textLength="32.3" lengthAdjust="spacingAndGlyphs">14.872</text>
<text x="442" y="425.2" text-anchor="end" font-size="12" textLength="32.3" lengthAdjust="spacingAndGlyphs">2.580</text>
<text x="98.69999999999999" y="440.0" text-anchor="end" font-size="12" textLength="32.3" lengthAdjust="spacingAndGlyphs">2.873</text>
<text x="184.5" y="440.0" text-anchor="end" font-size="12" textLength="32.3" lengthAdjust="spacingAndGlyphs">4.778</text>
<text x="270" y="440.0" text-anchor="end" font-size="12" textLength="32.3" lengthAdjust="spacingAndGlyphs">2.416</text>
<text x="356" y="440.0" text-anchor="end" font-size="12" textLength="32.3" lengthAdjust="spacingAndGlyphs">5.747</text>
<text x="442" y="440.0" text-anchor="end" font-size="12" textLength="32.3" lengthAdjust="spacingAndGlyphs">4.178</text>
<text x="36" y="395.79999999999995" textLength="8.5">R</text><text x="44.5" y="399" font-size="6.5" font-weight="bold">E</text>
<text x="49.30000000000001" y="410.29999999999995" text-anchor="end" font-size="12" textLength="27" lengthAdjust="spacingAndGlyphs">MLat</text>
<text x="49.30000000000001" y="425.20000000000005" text-anchor="end" font-size="12" textLength="23" lengthAdjust="spacingAndGlyphs">MLT</text>
<text x="49.30000000000001" y="440" text-anchor="end" font-size="12">L</text>
<text x="162.60000000000002" y="457.1" text-anchor="start" font-size="12" textLength="182.5" lengthAdjust="spacingAndGlyphs">2012-12-02 (337) 0:00 to 12:00</text>
</g>
<path d="M82.0 257.4L83.5 260.2L85.0 266.9L86.5 251.1L88.0 267.3L89.5 259.7L91.0 275.5L92.5 265.8L94.0 273.5L95.5 269.1L97.0 303.4L98.5 291.6L100.0 296.0L101.5 285.1L103.0 307.1L104.5 292.8L106.0 282.8L107.5 310.7L109.0 288.9L110.5 294.7L112.0 295.9L113.5 295.0L115.0 300.0L116.5 295.6L118.0 309.0L119.5 302.1L121.0 320.4L122.5 293.9L124.0 308.1L125.5 320.0L127.0 300.2L128.5 321.9L130.0 308.5L131.5 305.9L133.0 309.7L134.5 319.5L136.0 305.0L137.5 299.0L139.0 312.9L140.5 315.7L142.0 335.3L143.5 333.0L145.0 313.3L146.5 327.3L148.0 328.3L149.5 311.3L151.0 319.3L152.5 311.9L154.0 334.7L155.5 331.7L157.0 316.9L158.5 312.3L160.0 307.3L161.5 312.1L163.0 293.1L164.5 309.6L166.0 324.4L167.5 330.9L169.0 308.0L170.5 309.0L172.0 308.8L173.5 323.3L175.0 316.8L176.5 307.5L178.0 317.0L179.5 313.3L181.0 327.8L182.5 322.9L184.0 322.7L185.5 306.9L187.0 307.3L188.5 320.5L190.0 306.5L191.5 312.6L193.0 306.4L194.5 303.7L196.0 319.3L197.5 301.6L199.0 336.5L200.5 325.8L202.0 299.4L203.5 291.8L205.0 311.2L206.5 313.6L208.0 288.9L209.5 306.4L211.0 304.8L212.5 285.4L214.0 275.2L215.5 272.5L217.0 280.5L218.5 295.9L220.0 292.1L221.5 281.8L223.0 289.1L224.5 266.8L226.0 273.2L227.5 279.1L229.0 263.6L230.5 277.8L232.0 271.8L233.5 264.5L235.0 254.2L236.5 255.9L238.0 258.5L239.5 255.0L241.0 242.3L242.5 242.5L244.0 246.4L245.5 241.5L247.0 253.5L248.5 261.3L250.0 237.2L251.5 262.3L253.0 248.2L254.5 264.9L256.0 262.5L257.5 263.3L259.0 280.1L260.5 266.8L262.0 280.4L263.5 274.3L265.0 273.1L266.5 286.7L268.0 271.5L269.5 275.1L271.0 285.1L272.5 277.1L274.0 283.5L275.5 291.9L277.0 286.0L278.5 300.7L280.0 329.7M300.1 264.1L301.6 264.1L303.1 257.7L304.6 247.8L306.1 257.8L307.6 254.5L309.1 253.4L310.6 244.7L312.1 242.2L313.6 273.8L315.1 271.2L316.6 258.7L318.1 262.2L319.6 263.0L321.1 235.8L322.6 247.9L324.1 244.0L325.6 245.4L327.1 234.1L328.6 249.4L330.1 269.7L331.6 248.2L333.1 236.7L334.6 236.7L336.1 230.5L337.6 256.5L339.1 266.4L340.6 257.0L342.1 275.4L343.6 252.9L345.1 277.0L346.6 270.3L348.1 252.9L349.6 261.3L351.1 251.6L352.6 257.5L354.1 242.0L355.6 245.5L357.1 249.7L358.6 264.4L360.1 265.0L361.6 278.8L363.1 253.8L364.6 263.1L366.1 258.7L367.6 252.0L369.1 268.8L370.6 257.6L372.1 253.3L373.6 263.0L375.1 259.6L376.6 265.4L378.1 277.1L379.6 264.1L381.1 260.0L382.6 247.1L384.1 251.0L385.6 265.3L387.1 287.5L388.6 271.3L390.1 258.7L391.6 277.4L393.1 261.6L394.6 257.4L396.1 262.8L397.6 281.6L399.1 276.5L400.6 284.6L402.1 268.1L403.6 270.6L405.1 259.1L406.6 280.3L408.1 267.9L409.6 258.5L411.1 260.6L412.6 266.7L414.1 248.3L415.6 249.7L417.1 262.0L418.6 249.3L420.1 270.5L421.6 249.6L423.1 247.6L424.6 250.0" fill="none" stroke="#777" stroke-width="2.4" stroke-linejoin="round" opacity="0.7"/>
<path d="M82.0 256.5L83.5 260.8L85.0 253.3L86.5 256.8L88.0 269.5L89.5 267.5L91.0 275.0L92.5 265.0L94.0 280.9L95.5 283.9L97.0 273.4L98.5 284.5L100.0 289.6L101.5 293.7L103.0 290.0L104.5 293.5L106.0 283.2L107.5 292.8L109.0 297.3L110.5 293.8L112.0 292.8L113.5 293.6L115.0 293.4L116.5 290.2L118.0 288.2L119.5 305.0L121.0 309.3L122.5 298.6L124.0 296.0L125.5 299.8L127.0 314.8L128.5 308.2L130.0 313.6L131.5 310.4L133.0 316.7L134.5 310.2L136.0 318.5L137.5 314.4L139.0 317.0L140.5 321.8L142.0 316.7L143.5 318.8L145.0 319.1L146.5 319.1L148.0 316.4L149.5 311.8L151.0 315.0L152.5 326.5L154.0 321.7L155.5 308.6L157.0 316.0L158.5 315.6L160.0 320.2L161.5 313.8L163.0 335.0L164.5 316.5L166.0 307.9L167.5 325.7L169.0 322.6L170.5 321.6L172.0 319.3L173.5 317.7L175.0 318.0L176.5 312.2L178.0 317.6L179.5 312.7L181.0 317.7L182.5 309.5L184.0 311.4L185.5 305.7L187.0 325.4L188.5 311.3L190.0 315.5L191.5 310.7L193.0 311.9L194.5 315.0L196.0 305.5L197.5 305.9L199.0 303.5L200.5 297.1L202.0 312.9L203.5 298.5L205.0 306.3L206.5 294.1L208.0 296.1L209.5 286.7L211.0 286.5L212.5 297.6L214.0 290.5L215.5 294.7L217.0 285.4L218.5 285.5L220.0 273.8L221.5 278.2L223.0 274.4L224.5 262.6L226.0 280.6L227.5 286.9L229.0 269.1L230.5 265.6L232.0 278.7L233.5 261.5L235.0 262.2L236.5 261.8L238.0 258.3L239.5 250.6L241.0 248.2L242.5 245.0L244.0 248.6L245.5 244.3L247.0 258.0L248.5 256.5L250.0 250.6L251.5 238.0L253.0 246.6L254.5 264.8L256.0 259.2L257.5 262.4L259.0 272.8L260.5 268.3L262.0 275.9L263.5 274.3L265.0 266.8L266.5 280.3L268.0 282.7L269.5 282.3L271.0 288.2L272.5 277.4L274.0 287.9L275.5 280.9L277.0 290.6L278.5 301.7L280.0 324.7M300.1 261.1L301.6 259.6L303.1 249.8L304.6 259.8L306.1 270.6L307.6 254.2L309.1 253.7L310.6 250.6L312.1 247.2L313.6 258.6L315.1 259.3L316.6 250.7L318.1 248.7L319.6 250.0L321.1 235.1L322.6 254.8L324.1 247.1L325.6 249.3L327.1 241.6L328.6 252.1L330.1 260.4L331.6 238.5L333.1 241.6L334.6 248.7L336.1 258.7L337.6 253.8L339.1 245.8L340.6 246.9L342.1 249.6L343.6 260.5L345.1 250.4L346.6 261.2L348.1 266.1L349.6 258.6L351.1 264.5L352.6 256.7L354.1 252.0L355.6 267.3L357.1 247.9L358.6 251.4L360.1 271.4L361.6 255.4L363.1 264.7L364.6 254.9L366.1 267.5L367.6 257.9L369.1 257.2L370.6 256.8L372.1 264.4L373.6 266.4L375.1 256.8L376.6 273.7L378.1 257.6L379.6 261.5L381.1 265.6L382.6 260.7L384.1 270.7L385.6 272.5L387.1 272.0L388.6 272.8L390.1 264.0L391.6 276.7L393.1 253.9L394.6 267.9L396.1 255.4L397.6 266.1L399.1 269.7L400.6 270.6L402.1 270.5L403.6 269.2L405.1 266.5L406.6 269.0L408.1 264.9L409.6 270.4L411.1 267.0L412.6 261.2L414.1 261.5L415.6 277.9L417.1 268.9L418.6 282.6L420.1 266.5L421.6 263.9L423.1 258.6L424.6 270.3" fill="none" stroke="#000" stroke-width="4" stroke-linejoin="round"/></svg></div>
<div class="abs" style="left:204.30px;top:91.90px;font:normal 6.2px 'DejaVu Sans',sans-serif;letter-spacing:-0.007px;color:#000;white-space:nowrap;line-height:normal;">2012-12-02 0:00 to 12:00</div>
<div class="abs" style="left:304px;top:2px;width:92px;height:81px;background:#fff;overflow:hidden"><svg class="th" width="92" height="81" viewBox="0 0 531 462" preserveAspectRatio="none" style="position:absolute;left:0;top:0"><g font-family="'Liberation Sans',sans-serif" font-size="12" fill="#484848">
<rect x="82.0" y="51" width="344.0" height="126" fill="url(#specg)"/>
<rect x="82.0" y="155" width="344.0" height="2" fill="#12f77c"/>
<rect x="82.0" y="159" width="344.0" height="2" fill="#12f67a"/>
<rect x="82.0" y="163" width="344.0" height="3" fill="#1af470"/>
<rect x="82.0" y="168" width="344.0" height="2" fill="#08f98e"/>
<rect x="82.0" y="171" width="344.0" height="4" fill="#22f364"/>
<rect x="82.0" y="175" width="344.0" height="2" fill="#10f780"/>
<rect x="82.0" y="56" width="344.0" height="2" fill="#a4fb1c"/>
<rect x="82.0" y="51" width="344.0" height="5" fill="#22f25e" opacity="0.6"/>
<rect x="82.0" y="78" width="344.0" height="1.5" fill="#3cf64c" opacity="0.8"/>
<rect x="82.0" y="87" width="344.0" height="1" fill="#30f656" opacity="0.5"/>
<rect x="82.5" y="51.0" width="51.4" height="126.0" fill="#a8f820" opacity="0.85"/><rect x="82.5" y="141.7" width="51.4" height="16.4" fill="#ffb010" opacity="1"/><rect x="130.5" y="51.0" width="6.9" height="126.0" fill="#e8ff20" opacity="1"/><rect x="254.0" y="82.5" width="137.2" height="88.2" fill="#20ec40" opacity="0.6"/><rect x="281.4" y="101.4" width="82.3" height="63.0" fill="#18e838" opacity="0.6"/><path d="M137.4 59.0L140.4 58.4L143.4 61.5L146.4 63.0L149.4 64.5L152.4 66.7L155.4 68.7L158.4 71.0L161.4 73.4L164.4 75.8L167.4 77.1L170.4 79.8L173.4 81.2L176.4 82.9L179.4 84.6L182.4 86.0L185.4 87.5L188.4 92.8L191.4 96.9L194.4 101.4L197.4 105.5L200.4 108.4L203.4 113.0L206.4 116.8L209.4 122.6L212.4 125.8L215.4 130.1L218.4 133.5L221.4 137.3L224.4 142.0" fill="none" stroke="#50f838" stroke-width="4" opacity="0.7" stroke-linejoin="round"/><rect x="206.0" y="141.7" width="20.6" height="22.7" fill="#ffe000" opacity="0.9"/><rect x="151.1" y="164.4" width="102.9" height="6.3" fill="#a0fb18" opacity="0.7"/>
<path d="M82.0 46.5 H426.5 V177.5 H82.0 Z" fill="none" stroke="#111" stroke-width="2.6"/>
<path d="M73.5 176.5 H81.5M73.5 102.5 H81.5M77.5 154.2 H81.5M77.5 141.2 H81.5M77.5 131.9 H81.5M77.5 124.8 H81.5M77.5 118.9 H81.5M77.5 114.0 H81.5M77.5 109.7 H81.5M77.5 105.9 H81.5M77.5 80.2 H81.5M77.5 67.2 H81.5M77.5 57.9 H81.5M77.5 50.8 H81.5M82.0 177.5 V186.5M110.7 177.5 V182.5M139.4 177.5 V182.5M168.1 177.5 V182.5M196.8 177.5 V182.5M225.5 177.5 V182.5M254.2 177.5 V186.5M283.0 177.5 V182.5M311.7 177.5 V182.5M340.4 177.5 V182.5M369.1 177.5 V182.5M397.8 177.5 V182.5M426.5 177.5 V186.5" stroke="#222" stroke-width="2.6" fill="none"/>
<rect x="437" y="46.599999999999994" width="12.5" height="131.70000000000002" fill="url(#jet)"/>
<path d="M450.0 46.599999999999994 V178.8M449.5 61.0 H457.5M449.5 80.7 H457.5M449.5 100.4 H457.5M449.5 119.8 H457.5M449.5 139.0 H457.5M449.5 158.7 H457.5M449.5 178.1 H457.5M449.5 51.3 H453.5M449.5 71.0 H453.5M449.5 90.6 H453.5M449.5 110.1 H453.5M449.5 129.4 H453.5M449.5 148.9 H453.5M449.5 168.4 H453.5" stroke="#222" stroke-width="2.6" fill="none"/>
<text x="461.5" y="67.0" text-anchor="start" font-size="12" textLength="13.5" lengthAdjust="spacingAndGlyphs">10</text>
<text x="475.5" y="62.0" text-anchor="start" font-size="12" textLength="18" lengthAdjust="spacingAndGlyphs">-10</text>
<text x="461.5" y="86.7" text-anchor="start" font-size="12" textLength="13.5" lengthAdjust="spacingAndGlyphs">10</text>
<text x="475.5" y="81.7" text-anchor="start" font-size="12" textLength="18" lengthAdjust="spacingAndGlyphs">-12</text>
<text x="461.5" y="106.4" text-anchor="start" font-size="12" textLength="13.5" lengthAdjust="spacingAndGlyphs">10</text>
<text x="475.5" y="101.4" text-anchor="start" font-size="12" textLength="18" lengthAdjust="spacingAndGlyphs">-14</text>
<text x="461.5" y="125.8" text-anchor="start" font-size="12" textLength="13.5" lengthAdjust="spacingAndGlyphs">10</text>
<text x="475.5" y="120.8" text-anchor="start" font-size="12" textLength="18" lengthAdjust="spacingAndGlyphs">-16</text>
<text x="461.5" y="145.0" text-anchor="start" font-size="12" textLength="13.5" lengthAdjust="spacingAndGlyphs">10</text>
<text x="475.5" y="140.0" text-anchor="start" font-size="12" textLength="18" lengthAdjust="spacingAndGlyphs">-18</text>
<text x="461.5" y="164.7" text-anchor="start" font-size="12" textLength="13.5" lengthAdjust="spacingAndGlyphs">10</text>
<text x="475.5" y="159.7" text-anchor="start" font-size="12" textLength="18" lengthAdjust="spacingAndGlyphs">-20</text>
<text x="461.5" y="184.1" text-anchor="start" font-size="12" textLength="13.5" lengthAdjust="spacingAndGlyphs">10</text>
<text x="475.5" y="179.1" text-anchor="start" font-size="12" textLength="18" lengthAdjust="spacingAndGlyphs">-22</text>
<text transform="translate(511.5 113) rotate(-90)" text-anchor="middle" textLength="76" lengthAdjust="spacingAndGlyphs">V^2/m^2/Hz</text>
<text x="153.8" y="38.5" text-anchor="start" font-size="12" textLength="200.5" lengthAdjust="spacingAndGlyphs">RBSP-A/EMFISIS&#160; HFR Spectra Data</text>
<text x="48.599999999999994" y="110" text-anchor="start" font-size="12" textLength="14" lengthAdjust="spacingAndGlyphs">10</text>
<text x="63.30000000000001" y="105" text-anchor="start" font-size="12" textLength="6.5" lengthAdjust="spacingAndGlyphs">5</text>
<text x="48.599999999999994" y="184.60000000000002" text-anchor="start" font-size="12" textLength="14" lengthAdjust="spacingAndGlyphs">10</text>
<text x="63.30000000000001" y="179.60000000000002" text-anchor="start" font-size="12" textLength="6.5" lengthAdjust="spacingAndGlyphs">4</text>
<text transform="translate(38.5 112.80000000000001) rotate(-90)" text-anchor="middle" textLength="15">Hz</text>
<text x="66.30000000000001" y="202.3" text-anchor="start" font-size="12" textLength="32.5" lengthAdjust="spacingAndGlyphs">12:00</text>
<text x="238" y="202.3" text-anchor="start" font-size="12" textLength="32.5" lengthAdjust="spacingAndGlyphs">18:00</text>
<text x="410" y="202.3" text-anchor="start" font-size="12" textLength="32.5" lengthAdjust="spacingAndGlyphs">00:00</text>
<text x="66.80000000000001" y="213.8" text-anchor="start" font-size="12" textLength="66" lengthAdjust="spacingAndGlyphs">2012-12-02</text>
<text x="137.7" y="205.5" text-anchor="start" font-size="12" textLength="231.3" lengthAdjust="spacingAndGlyphs">RBSP-A/ect-hope-L3&#160; HOPE e Tperp/Tpar</text>
<path d="M82.0 225.0 H425.5 V357.5" fill="none" stroke="#333" stroke-width="1"/>
<path d="M82.0 225.0 V357.5 H425.5" fill="none" stroke="#333" stroke-width="2.6"/>
<path d="M73.5 232.7 H81.5M73.5 249.8 H81.5M73.5 268.7 H81.5M73.5 289.9 H81.5M73.5 313.8 H81.5M73.5 341.5 H81.5M77.5 241.1 H81.5M77.5 259.0 H81.5M77.5 279.0 H81.5M77.5 301.5 H81.5M77.5 327.2 H81.5M77.5 357.1 H81.5M82.0 357.5 V365.5M110.7 357.5 V361.5M139.4 357.5 V361.5M168.1 357.5 V361.5M196.8 357.5 V361.5M225.5 357.5 V361.5M254.2 357.5 V365.5M283.0 357.5 V361.5M311.7 357.5 V361.5M340.4 357.5 V361.5M369.1 357.5 V361.5M397.8 357.5 V361.5M426.5 357.5 V365.5" stroke="#222" stroke-width="2.6" fill="none"/>
<text x="51.80000000000001" y="237.0" text-anchor="start" font-size="12" textLength="16.5" lengthAdjust="spacingAndGlyphs">2.2</text>
<text x="51.80000000000001" y="254.1" text-anchor="start" font-size="12" textLength="16.5" lengthAdjust="spacingAndGlyphs">2.0</text>
<text x="51.80000000000001" y="273.0" text-anchor="start" font-size="12" textLength="16.5" lengthAdjust="spacingAndGlyphs">1.8</text>
<text x="51.80000000000001" y="294.2" text-anchor="start" font-size="12" textLength="16.5" lengthAdjust="spacingAndGlyphs">1.6</text>
<text x="51.80000000000001" y="318.1" text-anchor="start" font-size="12" textLength="16.5" lengthAdjust="spacingAndGlyphs">1.4</text>
<text x="51.80000000000001" y="345.8" text-anchor="start" font-size="12" textLength="16.5" lengthAdjust="spacingAndGlyphs">1.2</text>
<text transform="translate(42.5 291.6) rotate(-90)" text-anchor="middle" textLength="71.5">e Tperp/Tpar</text>
<text x="98.69999999999999" y="380.8" text-anchor="end" font-size="12" textLength="32.3" lengthAdjust="spacingAndGlyphs">12:00</text>
<text x="184.5" y="380.8" text-anchor="end" font-size="12" textLength="32.3" lengthAdjust="spacingAndGlyphs">15:00</text>
<text x="270" y="380.8" text-anchor="end" font-size="12" textLength="32.3" lengthAdjust="spacingAndGlyphs">18:00</text>
<text x="356" y="380.8" text-anchor="end" font-size="12" textLength="32.3" lengthAdjust="spacingAndGlyphs">21:00</text>
<text x="442" y="380.8" text-anchor="end" font-size="12" textLength="32.3" lengthAdjust="spacingAndGlyphs">00:00</text>
<text x="98.69999999999999" y="395.8" text-anchor="end" font-size="12" textLength="32.3" lengthAdjust="spacingAndGlyphs">1.986</text>
<text x="184.5" y="395.8" text-anchor="end" font-size="12" textLength="32.3" lengthAdjust="spacingAndGlyphs">2.828</text>
<text x="270" y="395.8" text-anchor="end" font-size="12" textLength="32.3" lengthAdjust="spacingAndGlyphs">2.084</text>
<text x="356" y="395.8" text-anchor="end" font-size="12" textLength="32.3" lengthAdjust="spacingAndGlyphs">2.630</text>
<text x="442" y="395.8" text-anchor="end" font-size="12" textLength="32.3" lengthAdjust="spacingAndGlyphs">5.314</text>
<text x="98.69999999999999" y="410.3" text-anchor="end" font-size="12" textLength="43.3" lengthAdjust="spacingAndGlyphs">-17.435</text>
<text x="184.5" y="410.3" text-anchor="end" font-size="12" textLength="32.3" lengthAdjust="spacingAndGlyphs">5.643</text>
<text x="270" y="410.3" text-anchor="end" font-size="12" textLength="32.3" lengthAdjust="spacingAndGlyphs">2.991</text>
<text x="356" y="410.3" text-anchor="end" font-size="12" textLength="43.3" lengthAdjust="spacingAndGlyphs">-17.130</text>
<text x="442" y="410.3" text-anchor="end" font-size="12" textLength="43.3" lengthAdjust="spacingAndGlyphs">-16.967</text>
<text x="98.69999999999999" y="425.2" text-anchor="end" font-size="12" textLength="32.3" lengthAdjust="spacingAndGlyphs">12.863</text>
<text x="184.5" y="425.2" text-anchor="end" font-size="12" textLength="32.3" lengthAdjust="spacingAndGlyphs">20.659</text>
<text x="270" y="425.2" text-anchor="end" font-size="12" textLength="32.3" lengthAdjust="spacingAndGlyphs">9.722</text>
<text x="356" y="425.2" text-anchor="end" font-size="12" textLength="32.3" lengthAdjust="spacingAndGlyphs">16.771</text>
<text x="442" y="425.2" text-anchor="end" font-size="12" textLength="32.3" lengthAdjust="spacingAndGlyphs">19.167</text>
<text x="98.69999999999999" y="440.0" text-anchor="end" font-size="12" textLength="32.3" lengthAdjust="spacingAndGlyphs">6.347</text>
<text x="184.5" y="440.0" text-anchor="end" font-size="12" textLength="32.3" lengthAdjust="spacingAndGlyphs">4.543</text>
<text x="270" y="440.0" text-anchor="end" font-size="12" textLength="32.3" lengthAdjust="spacingAndGlyphs">3.141</text>
<text x="356" y="440.0" text-anchor="end" font-size="12" textLength="32.3" lengthAdjust="spacingAndGlyphs">5.115</text>
<text x="442" y="440.0" text-anchor="end" font-size="12" textLength="32.3" lengthAdjust="spacingAndGlyphs">4.305</text>
<text x="36" y="395.79999999999995" textLength="8.5">R</text><text x="44.5" y="399" font-size="6.5" font-weight="bold">E</text>
<text x="49.30000000000001" y="410.29999999999995" text-anchor="end" font-size="12" textLength="27" lengthAdjust="spacingAndGlyphs">MLat</text>
<text x="49.30000000000001" y="425.20000000000005" text-anchor="end" font-size="12" textLength="23" lengthAdjust="spacingAndGlyphs">MLT</text>
<text x="49.30000000000001" y="440" text-anchor="end" font-size="12">L</text>
<text x="162.60000000000002" y="457.1" text-anchor="start" font-size="12" textLength="182.5" lengthAdjust="spacingAndGlyphs">2012-12-02 (337) 12:00 to 24:00</text>
</g>
<path d="M82.0 261.1L83.5 264.9L85.0 240.5L86.5 247.8L88.0 261.0L89.5 267.2L91.0 259.5L92.5 255.4L94.0 263.9L95.5 263.7L97.0 266.8L98.5 253.8L100.0 265.1L101.5 271.4L103.0 258.5L104.5 284.5L106.0 273.7L107.5 271.9L109.0 282.1L110.5 269.6L112.0 272.8L113.5 284.9L115.0 287.3L116.5 270.3L118.0 285.8L119.5 277.3L121.0 294.2L122.5 276.7L124.0 279.0L125.5 283.5L127.0 269.8L128.5 272.8L130.0 293.1L131.5 278.3L133.0 295.8L134.5 282.2L136.0 264.7L137.5 294.6L139.0 287.8L140.5 298.4L142.0 278.1L143.5 275.8L145.0 271.3L146.5 273.2L148.0 269.0L149.5 264.0L151.0 269.8L152.5 256.3L154.0 267.6L155.5 281.3L157.0 256.8L158.5 263.7L160.0 258.6L161.5 253.6L163.0 253.8L164.5 248.8L166.0 278.9L167.5 262.9L169.0 263.5L170.5 267.9L172.0 235.9L173.5 263.4L175.0 262.1L176.5 252.6L178.0 276.3L179.5 255.6L181.0 284.2L182.5 282.3L184.0 285.2L185.5 302.9L187.0 305.0M210.8 283.7L212.3 279.6L213.8 279.4L215.3 276.4L216.8 277.0L218.3 276.6L219.8 280.2L221.3 279.2L222.8 250.1L224.3 251.7L225.8 263.6L227.3 264.5L228.8 250.5L230.3 241.5L231.8 260.5L233.3 271.9L234.8 263.4L236.3 265.7L237.8 266.2L239.3 257.9L240.8 290.5L242.3 274.5L243.8 296.1L245.3 290.3L246.8 286.2L248.3 308.3L249.8 288.4L251.3 302.0L252.8 281.3L254.3 312.5L255.8 313.9L257.3 297.1L258.8 304.5L260.3 295.6L261.8 303.8L263.3 319.6L264.8 312.3L266.3 313.9L267.8 310.5L269.3 294.4L270.8 327.8L272.3 320.0L273.8 305.3L275.3 328.3L276.8 318.2L278.3 314.6L279.8 313.2L281.3 319.5L282.8 337.8L284.3 339.9L285.8 323.1L287.3 334.2L288.8 325.1L290.3 329.1L291.8 327.2L293.3 341.2L294.8 326.7L296.3 344.5L297.8 324.3L299.3 316.1L300.8 328.6L302.3 333.5L303.8 335.2L305.3 337.7L306.8 328.9L308.3 320.0L309.8 340.9L311.3 348.4L312.8 323.5L314.3 330.9L315.8 338.4L317.3 333.7L318.8 338.5L320.3 334.3L321.8 321.9L323.3 346.2L324.8 331.3L326.3 323.4L327.8 324.3L329.3 328.6L330.8 317.6L332.3 329.6L333.8 316.8L335.3 335.2L336.8 316.8L338.3 313.9L339.8 324.9L341.3 336.6L342.8 305.9L344.3 314.2L345.8 309.2L347.3 322.3L348.8 337.3L350.3 329.1L351.8 324.9L353.3 335.9L354.8 295.3L356.3 317.6L357.8 316.0L359.3 306.9L360.8 311.4L362.3 305.0L363.8 317.5L365.3 312.3L366.8 328.2L368.3 286.7L369.8 272.4L371.3 296.8L372.8 299.1L374.3 312.6L375.8 301.3L377.3 273.4L378.8 293.1L380.3 306.3L381.8 292.9L383.3 315.6L384.8 305.1L386.3 308.6L387.8 314.8L389.3 306.7L390.8 301.8L392.3 297.3L393.8 294.2L395.3 308.1L396.8 291.8L398.3 302.5L399.8 310.8L401.3 319.7L402.8 335.1L404.3 306.6L405.8 298.5L407.3 298.6L408.8 309.0L410.3 296.7L411.8 308.5L413.3 291.4L414.8 287.9L416.3 294.5L417.8 289.6L419.3 310.4L420.8 280.6L422.3 256.0L423.8 273.6L425.3 263.7" fill="none" stroke="#777" stroke-width="2.4" stroke-linejoin="round" opacity="0.7"/>
<path d="M82.0 258.0L83.5 252.4L85.0 254.9L86.5 257.8L88.0 248.3L89.5 265.8L91.0 262.6L92.5 246.7L94.0 258.9L95.5 255.8L97.0 268.6L98.5 259.6L100.0 261.2L101.5 259.7L103.0 269.9L104.5 273.7L106.0 275.1L107.5 264.7L109.0 263.8L110.5 273.0L112.0 274.4L113.5 276.6L115.0 265.0L116.5 276.7L118.0 282.4L119.5 271.7L121.0 277.5L122.5 276.8L124.0 296.3L125.5 283.2L127.0 283.0L128.5 275.5L130.0 279.8L131.5 282.3L133.0 275.3L134.5 280.6L136.0 277.5L137.5 287.2L139.0 275.6L140.5 279.2L142.0 272.6L143.5 281.9L145.0 277.2L146.5 270.0L148.0 274.5L149.5 274.3L151.0 261.4L152.5 258.5L154.0 262.8L155.5 251.4L157.0 260.5L158.5 254.5L160.0 261.9L161.5 251.3L163.0 264.3L164.5 258.5L166.0 256.2L167.5 251.5L169.0 260.5L170.5 251.6L172.0 251.0L173.5 254.6L175.0 263.3L176.5 267.9L178.0 270.8L179.5 273.1L181.0 267.7L182.5 269.3L184.0 285.9L185.5 302.8L187.0 297.1M210.8 296.9L212.3 286.8L213.8 274.7L215.3 273.4L216.8 265.9L218.3 281.4L219.8 262.8L221.3 256.3L222.8 255.4L224.3 261.0L225.8 259.5L227.3 259.6L228.8 264.5L230.3 256.6L231.8 269.1L233.3 277.1L234.8 272.4L236.3 271.8L237.8 270.2L239.3 273.3L240.8 272.3L242.3 273.4L243.8 297.9L245.3 278.8L246.8 293.5L248.3 283.8L249.8 288.9L251.3 293.0L252.8 295.6L254.3 299.3L255.8 286.3L257.3 302.5L258.8 300.9L260.3 300.6L261.8 298.3L263.3 316.4L264.8 291.6L266.3 308.2L267.8 322.4L269.3 310.9L270.8 311.1L272.3 316.9L273.8 321.9L275.3 316.2L276.8 313.8L278.3 330.5L279.8 318.8L281.3 318.2L282.8 323.0L284.3 324.4L285.8 317.7L287.3 333.3L288.8 325.0L290.3 330.8L291.8 330.8L293.3 320.3L294.8 322.0L296.3 322.5L297.8 327.1L299.3 339.6L300.8 328.3L302.3 326.7L303.8 330.8L305.3 329.5L306.8 325.3L308.3 329.5L309.8 325.9L311.3 336.7L312.8 324.8L314.3 338.1L315.8 335.3L317.3 325.3L318.8 339.5L320.3 336.4L321.8 332.6L323.3 330.6L324.8 334.6L326.3 344.3L327.8 338.5L329.3 323.7L330.8 328.0L332.3 321.2L333.8 333.0L335.3 325.8L336.8 312.1L338.3 323.8L339.8 320.5L341.3 324.8L342.8 325.8L344.3 329.8L345.8 332.5L347.3 318.7L348.8 321.9L350.3 316.0L351.8 310.1L353.3 314.2L354.8 309.0L356.3 326.7L357.8 318.1L359.3 303.2L360.8 306.5L362.3 307.5L363.8 316.5L365.3 300.4L366.8 315.2L368.3 313.1L369.8 310.2L371.3 310.1L372.8 296.8L374.3 292.1L375.8 309.5L377.3 293.1L378.8 291.7L380.3 297.4L381.8 298.5L383.3 301.6L384.8 309.8L386.3 297.6L387.8 311.5L389.3 297.2L390.8 309.4L392.3 305.3L393.8 309.8L395.3 308.1L396.8 312.0L398.3 315.8L399.8 312.9L401.3 312.5L402.8 314.2L404.3 315.6L405.8 312.6L407.3 299.3L408.8 302.6L410.3 290.4L411.8 299.5L413.3 299.2L414.8 283.6L416.3 283.0L417.8 287.8L419.3 280.1L420.8 273.7L422.3 276.5L423.8 258.2L425.3 267.0" fill="none" stroke="#000" stroke-width="4" stroke-linejoin="round"/></svg></div>
<div class="abs" style="left:304.30px;top:91.90px;font:normal 6.2px 'DejaVu Sans',sans-serif;letter-spacing:0.000px;color:#000;white-space:nowrap;line-height:normal;">2012-12-02 12:00 to 24:00</div>
<div class="abs" style="left:404px;top:2px;width:92px;height:81px;background:#fff;overflow:hidden"><svg class="th" width="92" height="81" viewBox="0 0 531 462" preserveAspectRatio="none" style="position:absolute;left:0;top:0"><g font-family="'Liberation Sans',sans-serif" font-size="12" fill="#484848">
<rect x="82.0" y="51" width="344.0" height="126" fill="url(#specg)"/>
<rect x="82.0" y="155" width="344.0" height="2" fill="#12f77c"/>
<rect x="82.0" y="159" width="344.0" height="2" fill="#12f67a"/>
<rect x="82.0" y="163" width="344.0" height="3" fill="#1af470"/>
<rect x="82.0" y="168" width="344.0" height="2" fill="#08f98e"/>
<rect x="82.0" y="171" width="344.0" height="4" fill="#22f364"/>
<rect x="82.0" y="175" width="344.0" height="2" fill="#10f780"/>
<rect x="82.0" y="56" width="344.0" height="2" fill="#a4fb1c"/>
<rect x="82.0" y="51" width="344.0" height="5" fill="#22f25e" opacity="0.6"/>
<rect x="82.0" y="78" width="344.0" height="1.5" fill="#3cf64c" opacity="0.8"/>
<rect x="82.0" y="87" width="344.0" height="1" fill="#30f656" opacity="0.5"/>
<path d="M144.2 82.1L147.2 82.8L150.2 87.3L153.2 90.6L156.2 90.3L159.2 92.8L162.2 94.6L165.2 96.1L168.2 97.9L171.2 100.1L174.2 100.6L177.2 101.4L180.2 103.0L183.2 107.0L186.2 108.5L189.2 109.6L192.2 109.0L195.2 112.3L198.2 113.9L201.2 114.6L204.2 116.3L207.2 120.3L210.2 121.0L213.2 122.0L216.2 123.1L219.2 123.9L222.2 125.4L225.2 127.8L228.2 127.9L231.2 130.0L234.2 133.0L237.2 131.5L240.2 130.1L243.2 130.5L246.2 127.5L249.2 125.5L252.2 122.7L255.2 120.4L258.2 120.9L261.2 115.7L264.2 116.5L267.2 113.8L270.2 112.4L273.2 108.8L276.2 109.6L279.2 107.5L282.2 105.4L285.2 103.6L288.2 100.3L291.2 99.4L294.2 97.5L297.2 94.8L300.2 89.9L303.2 90.3L306.2 88.3L309.2 85.0L312.2 83.9L315.2 82.7L318.2 79.3L321.2 78.3L324.2 74.5L327.2 72.2L330.2 70.8L333.2 67.6L336.2 64.7L339.2 64.3" fill="none" stroke="#70fb20" stroke-width="5" opacity="0.9" stroke-linejoin="round"/><path d="M130.5 114.0 L147.7 177.0 L113.4 177.0 Z" fill="#90fb20" opacity="0.8"/><rect x="120.2" y="145.5" width="13.7" height="6.3" fill="#ffe000" opacity="1"/><path d="M380.9 82.5 L396.3 177.0 L365.5 177.0 Z" fill="#90fb20" opacity="0.8"/><rect x="350.0" y="149.3" width="17.1" height="12.6" fill="#ffe000" opacity="1"/><rect x="185.4" y="88.8" width="68.6" height="5.0" fill="#c0fb18" opacity="0.7"/>
<path d="M82.0 46.5 H426.5 V177.5 H82.0 Z" fill="none" stroke="#111" stroke-width="2.6"/>
<path d="M73.5 176.5 H81.5M73.5 102.5 H81.5M77.5 154.2 H81.5M77.5 141.2 H81.5M77.5 131.9 H81.5M77.5 124.8 H81.5M77.5 118.9 H81.5M77.5 114.0 H81.5M77.5 109.7 H81.5M77.5 105.9 H81.5M77.5 80.2 H81.5M77.5 67.2 H81.5M77.5 57.9 H81.5M77.5 50.8 H81.5M82.0 177.5 V186.5M110.7 177.5 V182.5M139.4 177.5 V182.5M168.1 177.5 V182.5M196.8 177.5 V182.5M225.5 177.5 V182.5M254.2 177.5 V186.5M283.0 177.5 V182.5M311.7 177.5 V182.5M340.4 177.5 V182.5M369.1 177.5 V182.5M397.8 177.5 V182.5M426.5 177.5 V186.5" stroke="#222" stroke-width="2.6" fill="none"/>
<rect x="437" y="46.599999999999994" width="12.5" height="131.70000000000002" fill="url(#jet)"/>
<path d="M450.0 46.599999999999994 V178.8M449.5 61.0 H457.5M449.5 80.7 H457.5M449.5 100.4 H457.5M449.5 119.8 H457.5M449.5 139.0 H457.5M449.5 158.7 H457.5M449.5 178.1 H457.5M449.5 51.3 H453.5M449.5 71.0 H453.5M449.5 90.6 H453.5M449.5 110.1 H453.5M449.5 129.4 H453.5M449.5 148.9 H453.5M449.5 168.4 H453.5" stroke="#222" stroke-width="2.6" fill="none"/>
<text x="461.5" y="67.0" text-anchor="start" font-size="12" textLength="13.5" lengthAdjust="spacingAndGlyphs">10</text>
<text x="475.5" y="62.0" text-anchor="start" font-size="12" textLength="18" lengthAdjust="spacingAndGlyphs">-10</text>
<text x="461.5" y="86.7" text-anchor="start" font-size="12" textLength="13.5" lengthAdjust="spacingAndGlyphs">10</text>
<text x="475.5" y="81.7" text-anchor="start" font-size="12" textLength="18" lengthAdjust="spacingAndGlyphs">-12</text>
<text x="461.5" y="106.4" text-anchor="start" font-size="12" textLength="13.5" lengthAdjust="spacingAndGlyphs">10</text>
<text x="475.5" y="101.4" text-anchor="start" font-size="12" textLength="18" lengthAdjust="spacingAndGlyphs">-14</text>
<text x="461.5" y="125.8" text-anchor="start" font-size="12" textLength="13.5" lengthAdjust="spacingAndGlyphs">10</text>
<text x="475.5" y="120.8" text-anchor="start" font-size="12" textLength="18" lengthAdjust="spacingAndGlyphs">-16</text>
<text x="461.5" y="145.0" text-anchor="start" font-size="12" textLength="13.5" lengthAdjust="spacingAndGlyphs">10</text>
<text x="475.5" y="140.0" text-anchor="start" font-size="12" textLength="18" lengthAdjust="spacingAndGlyphs">-18</text>
<text x="461.5" y="164.7" text-anchor="start" font-size="12" textLength="13.5" lengthAdjust="spacingAndGlyphs">10</text>
<text x="475.5" y="159.7" text-anchor="start" font-size="12" textLength="18" lengthAdjust="spacingAndGlyphs">-20</text>
<text x="461.5" y="184.1" text-anchor="start" font-size="12" textLength="13.5" lengthAdjust="spacingAndGlyphs">10</text>
<text x="475.5" y="179.1" text-anchor="start" font-size="12" textLength="18" lengthAdjust="spacingAndGlyphs">-22</text>
<text transform="translate(511.5 113) rotate(-90)" text-anchor="middle" textLength="76" lengthAdjust="spacingAndGlyphs">V^2/m^2/Hz</text>
<text x="153.8" y="38.5" text-anchor="start" font-size="12" textLength="200.5" lengthAdjust="spacingAndGlyphs">RBSP-A/EMFISIS&#160; HFR Spectra Data</text>
<text x="48.599999999999994" y="110" text-anchor="start" font-size="12" textLength="14" lengthAdjust="spacingAndGlyphs">10</text>
<text x="63.30000000000001" y="105" text-anchor="start" font-size="12" textLength="6.5" lengthAdjust="spacingAndGlyphs">5</text>
<text x="48.599999999999994" y="184.60000000000002" text-anchor="start" font-size="12" textLength="14" lengthAdjust="spacingAndGlyphs">10</text>
<text x="63.30000000000001" y="179.60000000000002" text-anchor="start" font-size="12" textLength="6.5" lengthAdjust="spacingAndGlyphs">4</text>
<text transform="translate(38.5 112.80000000000001) rotate(-90)" text-anchor="middle" textLength="15">Hz</text>
<text x="66.30000000000001" y="202.3" text-anchor="start" font-size="12" textLength="32.5" lengthAdjust="spacingAndGlyphs">00:00</text>
<text x="238" y="202.3" text-anchor="start" font-size="12" textLength="32.5" lengthAdjust="spacingAndGlyphs">06:00</text>
<text x="410" y="202.3" text-anchor="start" font-size="12" textLength="32.5" lengthAdjust="spacingAndGlyphs">12:00</text>
<text x="66.80000000000001" y="213.8" text-anchor="start" font-size="12" textLength="66" lengthAdjust="spacingAndGlyphs">2012-12-03</text>
<text x="137.7" y="205.5" text-anchor="start" font-size="12" textLength="231.3" lengthAdjust="spacingAndGlyphs">RBSP-A/ect-hope-L3&#160; HOPE e Tperp/Tpar</text>
<path d="M82.0 225.0 H425.5 V357.5" fill="none" stroke="#333" stroke-width="1"/>
<path d="M82.0 225.0 V357.5 H425.5" fill="none" stroke="#333" stroke-width="2.6"/>
<path d="M73.5 232.7 H81.5M73.5 249.8 H81.5M73.5 268.7 H81.5M73.5 289.9 H81.5M73.5 313.8 H81.5M73.5 341.5 H81.5M77.5 241.1 H81.5M77.5 259.0 H81.5M77.5 279.0 H81.5M77.5 301.5 H81.5M77.5 327.2 H81.5M77.5 357.1 H81.5M82.0 357.5 V365.5M110.7 357.5 V361.5M139.4 357.5 V361.5M168.1 357.5 V361.5M196.8 357.5 V361.5M225.5 357.5 V361.5M254.2 357.5 V365.5M283.0 357.5 V361.5M311.7 357.5 V361.5M340.4 357.5 V361.5M369.1 357.5 V361.5M397.8 357.5 V361.5M426.5 357.5 V365.5" stroke="#222" stroke-width="2.6" fill="none"/>
<text x="51.80000000000001" y="237.0" text-anchor="start" font-size="12" textLength="16.5" lengthAdjust="spacingAndGlyphs">2.2</text>
<text x="51.80000000000001" y="254.1" text-anchor="start" font-size="12" textLength="16.5" lengthAdjust="spacingAndGlyphs">2.0</text>
<text x="51.80000000000001" y="273.0" text-anchor="start" font-size="12" textLength="16.5" lengthAdjust="spacingAndGlyphs">1.8</text>
<text x="51.80000000000001" y="294.2" text-anchor="start" font-size="12" textLength="16.5" lengthAdjust="spacingAndGlyphs">1.6</text>
<text x="51.80000000000001" y="318.1" text-anchor="start" font-size="12" textLength="16.5" lengthAdjust="spacingAndGlyphs">1.4</text>
<text x="51.80000000000001" y="345.8" text-anchor="start" font-size="12" textLength="16.5" lengthAdjust="spacingAndGlyphs">1.2</text>
<text transform="translate(42.5 291.6) rotate(-90)" text-anchor="middle" textLength="71.5">e Tperp/Tpar</text>
<text x="98.69999999999999" y="380.8" text-anchor="end" font-size="12" textLength="32.3" lengthAdjust="spacingAndGlyphs">00:00</text>
<text x="184.5" y="380.8" text-anchor="end" font-size="12" textLength="32.3" lengthAdjust="spacingAndGlyphs">03:00</text>
<text x="270" y="380.8" text-anchor="end" font-size="12" textLength="32.3" lengthAdjust="spacingAndGlyphs">06:00</text>
<text x="356" y="380.8" text-anchor="end" font-size="12" textLength="32.3" lengthAdjust="spacingAndGlyphs">09:00</text>
<text x="442" y="380.8" text-anchor="end" font-size="12" textLength="32.3" lengthAdjust="spacingAndGlyphs">12:00</text>
<text x="98.69999999999999" y="395.8" text-anchor="end" font-size="12" textLength="32.3" lengthAdjust="spacingAndGlyphs">3.329</text>
<text x="184.5" y="395.8" text-anchor="end" font-size="12" textLength="32.3" lengthAdjust="spacingAndGlyphs">3.826</text>
<text x="270" y="395.8" text-anchor="end" font-size="12" textLength="32.3" lengthAdjust="spacingAndGlyphs">4.906</text>
<text x="356" y="395.8" text-anchor="end" font-size="12" textLength="32.3" lengthAdjust="spacingAndGlyphs">4.662</text>
<text x="442" y="395.8" text-anchor="end" font-size="12" textLength="32.3" lengthAdjust="spacingAndGlyphs">2.081</text>
<text x="98.69999999999999" y="410.3" text-anchor="end" font-size="12" textLength="43.3" lengthAdjust="spacingAndGlyphs">-13.433</text>
<text x="184.5" y="410.3" text-anchor="end" font-size="12" textLength="32.3" lengthAdjust="spacingAndGlyphs">4.373</text>
<text x="270" y="410.3" text-anchor="end" font-size="12" textLength="32.3" lengthAdjust="spacingAndGlyphs">2.631</text>
<text x="356" y="410.3" text-anchor="end" font-size="12" textLength="32.3" lengthAdjust="spacingAndGlyphs">0.461</text>
<text x="442" y="410.3" text-anchor="end" font-size="12" textLength="32.3" lengthAdjust="spacingAndGlyphs">11.408</text>
<text x="98.69999999999999" y="425.2" text-anchor="end" font-size="12" textLength="32.3" lengthAdjust="spacingAndGlyphs">12.602</text>
<text x="184.5" y="425.2" text-anchor="end" font-size="12" textLength="32.3" lengthAdjust="spacingAndGlyphs">6.972</text>
<text x="270" y="425.2" text-anchor="end" font-size="12" textLength="32.3" lengthAdjust="spacingAndGlyphs">7.669</text>
<text x="356" y="425.2" text-anchor="end" font-size="12" textLength="32.3" lengthAdjust="spacingAndGlyphs">0.851</text>
<text x="442" y="425.2" text-anchor="end" font-size="12" textLength="32.3" lengthAdjust="spacingAndGlyphs">18.558</text>
<text x="98.69999999999999" y="440.0" text-anchor="end" font-size="12" textLength="32.3" lengthAdjust="spacingAndGlyphs">3.316</text>
<text x="184.5" y="440.0" text-anchor="end" font-size="12" textLength="32.3" lengthAdjust="spacingAndGlyphs">3.873</text>
<text x="270" y="440.0" text-anchor="end" font-size="12" textLength="32.3" lengthAdjust="spacingAndGlyphs">1.959</text>
<text x="356" y="440.0" text-anchor="end" font-size="12" textLength="32.3" lengthAdjust="spacingAndGlyphs">5.993</text>
<text x="442" y="440.0" text-anchor="end" font-size="12" textLength="32.3" lengthAdjust="spacingAndGlyphs">3.361</text>
<text x="36" y="395.79999999999995" textLength="8.5">R</text><text x="44.5" y="399" font-size="6.5" font-weight="bold">E</text>
<text x="49.30000000000001" y="410.29999999999995" text-anchor="end" font-size="12" textLength="27" lengthAdjust="spacingAndGlyphs">MLat</text>
<text x="49.30000000000001" y="425.20000000000005" text-anchor="end" font-size="12" textLength="23" lengthAdjust="spacingAndGlyphs">MLT</text>
<text x="49.30000000000001" y="440" text-anchor="end" font-size="12">L</text>
<text x="162.60000000000002" y="457.1" text-anchor="start" font-size="12" textLength="182.5" lengthAdjust="spacingAndGlyphs">2012-12-03 (338) 0:00 to 12:00</text>
</g>
<path d="M82.0 267.4L83.5 267.8L85.0 271.7L86.5 275.2L88.0 265.7L89.5 268.9L91.0 265.2L92.5 295.0L94.0 271.2L95.5 287.8L97.0 278.9L98.5 269.6L100.0 285.3L101.5 281.5L103.0 295.5L104.5 297.1L106.0 328.8L107.5 319.2" fill="none" stroke="#777" stroke-width="2.4" stroke-linejoin="round" opacity="0.7"/>
<path d="M82.0 282.3L83.5 267.3L85.0 264.4L86.5 267.4L88.0 267.1L89.5 268.2L91.0 273.3L92.5 274.6L94.0 279.8L95.5 290.5L97.0 279.8L98.5 282.7L100.0 270.4L101.5 276.1L103.0 280.4L104.5 306.9L106.0 324.0L107.5 329.3" fill="none" stroke="#000" stroke-width="4" stroke-linejoin="round"/></svg></div>
<div class="abs" style="left:404.30px;top:91.90px;font:normal 6.2px 'DejaVu Sans',sans-serif;letter-spacing:-0.007px;color:#000;white-space:nowrap;line-height:normal;">2012-12-03 0:00 to 12:00</div>
<div class="abs" style="left:504px;top:2px;width:92px;height:81px;background:#fff;overflow:hidden"><svg class="th" width="92" height="81" viewBox="0 0 531 462" preserveAspectRatio="none" style="position:absolute;left:0;top:0"><g font-family="'Liberation Sans',sans-serif" font-size="12" fill="#484848">
<rect x="82.0" y="51" width="344.0" height="126" fill="url(#specg)"/>
<rect x="82.0" y="155" width="344.0" height="2" fill="#12f77c"/>
<rect x="82.0" y="159" width="344.0" height="2" fill="#12f67a"/>
<rect x="82.0" y="163" width="344.0" height="3" fill="#1af470"/>
<rect x="82.0" y="168" width="344.0" height="2" fill="#08f98e"/>
<rect x="82.0" y="171" width="344.0" height="4" fill="#22f364"/>
<rect x="82.0" y="175" width="344.0" height="2" fill="#10f780"/>
<rect x="82.0" y="56" width="344.0" height="2" fill="#a4fb1c"/>
<rect x="82.0" y="51" width="344.0" height="5" fill="#22f25e" opacity="0.6"/>
<rect x="82.0" y="78" width="344.0" height="1.5" fill="#3cf64c" opacity="0.8"/>
<rect x="82.0" y="87" width="344.0" height="1" fill="#30f656" opacity="0.5"/>
<path d="M82.5 81.2L85.5 86.0L88.5 87.2L91.5 88.6L94.5 92.1L97.5 92.7L100.5 97.6L103.5 98.4L106.5 100.1L109.5 103.0L112.5 103.6L115.5 107.2L118.5 109.8L121.5 112.0L124.5 113.8L127.5 114.7L130.5 118.1L133.5 118.9L136.5 121.2L139.5 121.2L142.5 121.8L145.5 123.8L148.5 125.6L151.5 125.9L154.5 125.1L157.5 125.8L160.5 126.1L163.5 127.1L166.5 128.4L169.5 129.4L172.5 129.4L175.5 130.6L178.5 130.3L181.5 131.6L184.5 133.8L187.5 132.3L190.5 129.0L193.5 126.1L196.5 123.6L199.5 120.3L202.5 117.3L205.5 116.1L208.5 112.2L211.5 110.9L214.5 107.0L217.5 105.4L220.5 104.2L223.5 100.8L226.5 97.6L229.5 95.3L232.5 91.3L235.5 90.8L238.5 86.7L241.5 83.9L244.5 81.2L247.5 79.1L250.5 75.7L253.5 73.0L256.5 71.1L259.5 68.2L262.5 66.3L265.5 63.2L268.5 60.7" fill="none" stroke="#70fb20" stroke-width="4" opacity="0.9" stroke-linejoin="round"/><path d="M288.3 57.3L291.3 59.3L294.3 62.7L297.3 66.1L300.3 68.9L303.3 70.6L306.3 72.7L309.3 75.1L312.3 77.5L315.3 79.6L318.3 81.7L321.3 84.1L324.3 89.0L327.3 90.7L330.3 94.1L333.3 94.7L336.3 98.6L339.3 101.0L342.3 104.7L345.3 107.3L348.3 111.6L351.3 114.9L354.3 118.5L357.3 119.0L360.3 123.1L363.3 128.5L366.3 132.7L369.3 134.4L372.3 137.0L375.3 141.5L378.3 144.1L381.3 147.4L384.3 151.6L387.3 153.9L390.3 155.7" fill="none" stroke="#70fb20" stroke-width="4" opacity="0.9" stroke-linejoin="round"/><rect x="288.3" y="69.9" width="5.1" height="107.1" fill="#e0ff18" opacity="1"/><path d="M298.6 120.3 L319.2 177.0 L278.0 177.0 Z" fill="#80fb20" opacity="0.8"/><rect x="123.7" y="114.0" width="61.7" height="15.1" fill="#60f830" opacity="0.6"/>
<path d="M82.0 46.5 H426.5 V177.5 H82.0 Z" fill="none" stroke="#111" stroke-width="2.6"/>
<path d="M73.5 176.5 H81.5M73.5 102.5 H81.5M77.5 154.2 H81.5M77.5 141.2 H81.5M77.5 131.9 H81.5M77.5 124.8 H81.5M77.5 118.9 H81.5M77.5 114.0 H81.5M77.5 109.7 H81.5M77.5 105.9 H81.5M77.5 80.2 H81.5M77.5 67.2 H81.5M77.5 57.9 H81.5M77.5 50.8 H81.5M82.0 177.5 V186.5M110.7 177.5 V182.5M139.4 177.5 V182.5M168.1 177.5 V182.5M196.8 177.5 V182.5M225.5 177.5 V182.5M254.2 177.5 V186.5M283.0 177.5 V182.5M311.7 177.5 V182.5M340.4 177.5 V182.5M369.1 177.5 V182.5M397.8 177.5 V182.5M426.5 177.5 V186.5" stroke="#222" stroke-width="2.6" fill="none"/>
<rect x="437" y="46.599999999999994" width="12.5" height="131.70000000000002" fill="url(#jet)"/>
<path d="M450.0 46.599999999999994 V178.8M449.5 61.0 H457.5M449.5 80.7 H457.5M449.5 100.4 H457.5M449.5 119.8 H457.5M449.5 139.0 H457.5M449.5 158.7 H457.5M449.5 178.1 H457.5M449.5 51.3 H453.5M449.5 71.0 H453.5M449.5 90.6 H453.5M449.5 110.1 H453.5M449.5 129.4 H453.5M449.5 148.9 H453.5M449.5 168.4 H453.5" stroke="#222" stroke-width="2.6" fill="none"/>
<text x="461.5" y="67.0" text-anchor="start" font-size="12" textLength="13.5" lengthAdjust="spacingAndGlyphs">10</text>
<text x="475.5" y="62.0" text-anchor="start" font-size="12" textLength="18" lengthAdjust="spacingAndGlyphs">-10</text>
<text x="461.5" y="86.7" text-anchor="start" font-size="12" textLength="13.5" lengthAdjust="spacingAndGlyphs">10</text>
<text x="475.5" y="81.7" text-anchor="start" font-size="12" textLength="18" lengthAdjust="spacingAndGlyphs">-12</text>
<text x="461.5" y="106.4" text-anchor="start" font-size="12" textLength="13.5" lengthAdjust="spacingAndGlyphs">10</text>
<text x="475.5" y="101.4" text-anchor="start" font-size="12" textLength="18" lengthAdjust="spacingAndGlyphs">-14</text>
<text x="461.5" y="125.8" text-anchor="start" font-size="12" textLength="13.5" lengthAdjust="spacingAndGlyphs">10</text>
<text x="475.5" y="120.8" text-anchor="start" font-size="12" textLength="18" lengthAdjust="spacingAndGlyphs">-16</text>
<text x="461.5" y="145.0" text-anchor="start" font-size="12" textLength="13.5" lengthAdjust="spacingAndGlyphs">10</text>
<text x="475.5" y="140.0" text-anchor="start" font-size="12" textLength="18" lengthAdjust="spacingAndGlyphs">-18</text>
<text x="461.5" y="164.7" text-anchor="start" font-size="12" textLength="13.5" lengthAdjust="spacingAndGlyphs">10</text>
<text x="475.5" y="159.7" text-anchor="start" font-size="12" textLength="18" lengthAdjust="spacingAndGlyphs">-20</text>
<text x="461.5" y="184.1" text-anchor="start" font-size="12" textLength="13.5" lengthAdjust="spacingAndGlyphs">10</text>
<text x="475.5" y="179.1" text-anchor="start" font-size="12" textLength="18" lengthAdjust="spacingAndGlyphs">-22</text>
<text transform="translate(511.5 113) rotate(-90)" text-anchor="middle" textLength="76" lengthAdjust="spacingAndGlyphs">V^2/m^2/Hz</text>
<text x="153.8" y="38.5" text-anchor="start" font-size="12" textLength="200.5" lengthAdjust="spacingAndGlyphs">RBSP-A/EMFISIS&#160; HFR Spectra Data</text>
<text x="48.599999999999994" y="110" text-anchor="start" font-size="12" textLength="14" lengthAdjust="spacingAndGlyphs">10</text>
<text x="63.30000000000001" y="105" text-anchor="start" font-size="12" textLength="6.5" lengthAdjust="spacingAndGlyphs">5</text>
<text x="48.599999999999994" y="184.60000000000002" text-anchor="start" font-size="12" textLength="14" lengthAdjust="spacingAndGlyphs">10</text>
<text x="63.30000000000001" y="179.60000000000002" text-anchor="start" font-size="12" textLength="6.5" lengthAdjust="spacingAndGlyphs">4</text>
<text transform="translate(38.5 112.80000000000001) rotate(-90)" text-anchor="middle" textLength="15">Hz</text>
<text x="66.30000000000001" y="202.3" text-anchor="start" font-size="12" textLength="32.5" lengthAdjust="spacingAndGlyphs">12:00</text>
<text x="238" y="202.3" text-anchor="start" font-size="12" textLength="32.5" lengthAdjust="spacingAndGlyphs">18:00</text>
<text x="410" y="202.3" text-anchor="start" font-size="12" textLength="32.5" lengthAdjust="spacingAndGlyphs">00:00</text>
<text x="66.80000000000001" y="213.8" text-anchor="start" font-size="12" textLength="66" lengthAdjust="spacingAndGlyphs">2012-12-03</text>
<text x="137.7" y="205.5" text-anchor="start" font-size="12" textLength="231.3" lengthAdjust="spacingAndGlyphs">RBSP-A/ect-hope-L3&#160; HOPE e Tperp/Tpar</text>
<path d="M82.0 225.0 H425.5 V357.5" fill="none" stroke="#333" stroke-width="1"/>
<path d="M82.0 225.0 V357.5 H425.5" fill="none" stroke="#333" stroke-width="2.6"/>
<path d="M73.5 232.7 H81.5M73.5 249.8 H81.5M73.5 268.7 H81.5M73.5 289.9 H81.5M73.5 313.8 H81.5M73.5 341.5 H81.5M77.5 241.1 H81.5M77.5 259.0 H81.5M77.5 279.0 H81.5M77.5 301.5 H81.5M77.5 327.2 H81.5M77.5 357.1 H81.5M82.0 357.5 V365.5M110.7 357.5 V361.5M139.4 357.5 V361.5M168.1 357.5 V361.5M196.8 357.5 V361.5M225.5 357.5 V361.5M254.2 357.5 V365.5M283.0 357.5 V361.5M311.7 357.5 V361.5M340.4 357.5 V361.5M369.1 357.5 V361.5M397.8 357.5 V361.5M426.5 357.5 V365.5" stroke="#222" stroke-width="2.6" fill="none"/>
<text x="51.80000000000001" y="237.0" text-anchor="start" font-size="12" textLength="16.5" lengthAdjust="spacingAndGlyphs">2.2</text>
<text x="51.80000000000001" y="254.1" text-anchor="start" font-size="12" textLength="16.5" lengthAdjust="spacingAndGlyphs">2.0</text>
<text x="51.80000000000001" y="273.0" text-anchor="start" font-size="12" textLength="16.5" lengthAdjust="spacingAndGlyphs">1.8</text>
<text x="51.80000000000001" y="294.2" text-anchor="start" font-size="12" textLength="16.5" lengthAdjust="spacingAndGlyphs">1.6</text>
<text x="51.80000000000001" y="318.1" text-anchor="start" font-size="12" textLength="16.5" lengthAdjust="spacingAndGlyphs">1.4</text>
<text x="51.80000000000001" y="345.8" text-anchor="start" font-size="12" textLength="16.5" lengthAdjust="spacingAndGlyphs">1.2</text>
<text transform="translate(42.5 291.6) rotate(-90)" text-anchor="middle" textLength="71.5">e Tperp/Tpar</text>
<text x="98.69999999999999" y="380.8" text-anchor="end" font-size="12" textLength="32.3" lengthAdjust="spacingAndGlyphs">12:00</text>
<text x="184.5" y="380.8" text-anchor="end" font-size="12" textLength="32.3" lengthAdjust="spacingAndGlyphs">15:00</text>
<text x="270" y="380.8" text-anchor="end" font-size="12" textLength="32.3" lengthAdjust="spacingAndGlyphs">18:00</text>
<text x="356" y="380.8" text-anchor="end" font-size="12" textLength="32.3" lengthAdjust="spacingAndGlyphs">21:00</text>
<text x="442" y="380.8" text-anchor="end" font-size="12" textLength="32.3" lengthAdjust="spacingAndGlyphs">00:00</text>
<text x="98.69999999999999" y="395.8" text-anchor="end" font-size="12" textLength="32.3" lengthAdjust="spacingAndGlyphs">1.888</text>
<text x="184.5" y="395.8" text-anchor="end" font-size="12" textLength="32.3" lengthAdjust="spacingAndGlyphs">5.084</text>
<text x="270" y="395.8" text-anchor="end" font-size="12" textLength="32.3" lengthAdjust="spacingAndGlyphs">2.490</text>
<text x="356" y="395.8" text-anchor="end" font-size="12" textLength="32.3" lengthAdjust="spacingAndGlyphs">4.428</text>
<text x="442" y="395.8" text-anchor="end" font-size="12" textLength="32.3" lengthAdjust="spacingAndGlyphs">2.552</text>
<text x="98.69999999999999" y="410.3" text-anchor="end" font-size="12" textLength="32.3" lengthAdjust="spacingAndGlyphs">5.850</text>
<text x="184.5" y="410.3" text-anchor="end" font-size="12" textLength="32.3" lengthAdjust="spacingAndGlyphs">1.337</text>
<text x="270" y="410.3" text-anchor="end" font-size="12" textLength="43.3" lengthAdjust="spacingAndGlyphs">-16.185</text>
<text x="356" y="410.3" text-anchor="end" font-size="12" textLength="32.3" lengthAdjust="spacingAndGlyphs">10.774</text>
<text x="442" y="410.3" text-anchor="end" font-size="12" textLength="32.3" lengthAdjust="spacingAndGlyphs">7.289</text>
<text x="98.69999999999999" y="425.2" text-anchor="end" font-size="12" textLength="32.3" lengthAdjust="spacingAndGlyphs">9.361</text>
<text x="184.5" y="425.2" text-anchor="end" font-size="12" textLength="32.3" lengthAdjust="spacingAndGlyphs">12.366</text>
<text x="270" y="425.2" text-anchor="end" font-size="12" textLength="32.3" lengthAdjust="spacingAndGlyphs">16.630</text>
<text x="356" y="425.2" text-anchor="end" font-size="12" textLength="32.3" lengthAdjust="spacingAndGlyphs">17.193</text>
<text x="442" y="425.2" text-anchor="end" font-size="12" textLength="32.3" lengthAdjust="spacingAndGlyphs">19.372</text>
<text x="98.69999999999999" y="440.0" text-anchor="end" font-size="12" textLength="32.3" lengthAdjust="spacingAndGlyphs">6.234</text>
<text x="184.5" y="440.0" text-anchor="end" font-size="12" textLength="32.3" lengthAdjust="spacingAndGlyphs">6.050</text>
<text x="270" y="440.0" text-anchor="end" font-size="12" textLength="32.3" lengthAdjust="spacingAndGlyphs">2.496</text>
<text x="356" y="440.0" text-anchor="end" font-size="12" textLength="32.3" lengthAdjust="spacingAndGlyphs">1.304</text>
<text x="442" y="440.0" text-anchor="end" font-size="12" textLength="32.3" lengthAdjust="spacingAndGlyphs">2.658</text>
<text x="36" y="395.79999999999995" textLength="8.5">R</text><text x="44.5" y="399" font-size="6.5" font-weight="bold">E</text>
<text x="49.30000000000001" y="410.29999999999995" text-anchor="end" font-size="12" textLength="27" lengthAdjust="spacingAndGlyphs">MLat</text>
<text x="49.30000000000001" y="425.20000000000005" text-anchor="end" font-size="12" textLength="23" lengthAdjust="spacingAndGlyphs">MLT</text>
<text x="49.30000000000001" y="440" text-anchor="end" font-size="12">L</text>
<text x="162.60000000000002" y="457.1" text-anchor="start" font-size="12" textLength="182.5" lengthAdjust="spacingAndGlyphs">2012-12-03 (338) 12:00 to 24:00</text>
</g></svg></div>
<div class="abs" style="left:504.30px;top:91.90px;font:normal 6.2px 'DejaVu Sans',sans-serif;letter-spacing:0.000px;color:#000;white-space:nowrap;line-height:normal;">2012-12-03 12:00 to 24:00</div>
<div class="abs" style="left:604px;top:2px;width:92px;height:81px;background:#fff;overflow:hidden"><svg class="th" width="92" height="81" viewBox="0 0 531 462" preserveAspectRatio="none" style="position:absolute;left:0;top:0"><g font-family="'Liberation Sans',sans-serif" font-size="12" fill="#484848">
<rect x="82.0" y="51" width="344.0" height="126" fill="url(#specg)"/>
<rect x="82.0" y="155" width="344.0" height="2" fill="#12f77c"/>
<rect x="82.0" y="159" width="344.0" height="2" fill="#12f67a"/>
<rect x="82.0" y="163" width="344.0" height="3" fill="#1af470"/>
<rect x="82.0" y="168" width="344.0" height="2" fill="#08f98e"/>
<rect x="82.0" y="171" width="344.0" height="4" fill="#22f364"/>
<rect x="82.0" y="175" width="344.0" height="2" fill="#10f780"/>
<rect x="82.0" y="56" width="344.0" height="2" fill="#a4fb1c"/>
<rect x="82.0" y="51" width="344.0" height="5" fill="#22f25e" opacity="0.6"/>
<rect x="82.0" y="78" width="344.0" height="1.5" fill="#3cf64c" opacity="0.8"/>
<rect x="82.0" y="87" width="344.0" height="1" fill="#30f656" opacity="0.5"/>
<rect x="260.9" y="51.0" width="109.8" height="126.0" fill="#38ee38" opacity="0.55"/><rect x="235.1" y="46.0" width="18.9" height="132.3" fill="#ffffff" opacity="1"/><rect x="278.0" y="51.0" width="5.1" height="126.0" fill="#e0ff18" opacity="1"/><rect x="363.8" y="51.0" width="5.1" height="126.0" fill="#e0ff18" opacity="1"/><rect x="264.3" y="154.3" width="99.5" height="16.4" fill="#ffd810" opacity="1"/><rect x="271.1" y="144.2" width="24.0" height="12.6" fill="#ff7010" opacity="1"/><path d="M82.5 138.5L85.5 135.6L88.5 134.6L91.5 131.3L94.5 130.3L97.5 126.9L100.5 123.4L103.5 121.9L106.5 118.8L109.5 115.6L112.5 114.3L115.5 110.4L118.5 110.0L121.5 106.5L124.5 102.9L127.5 100.5L130.5 98.8L133.5 94.3L136.5 93.2L139.5 89.9L142.5 88.9L145.5 86.6L148.5 85.5L151.5 82.0L154.5 80.0L157.5 78.9L160.5 75.0L163.5 74.4L166.5 70.9L169.5 68.0L172.5 67.4L175.5 65.0L178.5 61.9L181.5 61.4L184.5 59.2" fill="none" stroke="#70fb20" stroke-width="4" opacity="0.9" stroke-linejoin="round"/><path d="M377.5 108.0L380.5 104.8L383.5 101.0L386.5 98.0L389.5 95.7L392.5 92.6L395.5 88.3L398.5 85.9L401.5 81.3L404.5 81.1L407.5 78.1L410.5 75.8L413.5 73.6L416.5 70.8L419.5 70.3L422.5 67.3L425.5 62.7" fill="none" stroke="#70fb20" stroke-width="4" opacity="0.9" stroke-linejoin="round"/><rect x="185.4" y="145.5" width="41.2" height="6.3" fill="#c0fb18" opacity="0.8"/>
<path d="M82.0 46.5 H426.5 V177.5 H82.0 Z" fill="none" stroke="#111" stroke-width="2.6"/>
<path d="M73.5 176.5 H81.5M73.5 102.5 H81.5M77.5 154.2 H81.5M77.5 141.2 H81.5M77.5 131.9 H81.5M77.5 124.8 H81.5M77.5 118.9 H81.5M77.5 114.0 H81.5M77.5 109.7 H81.5M77.5 105.9 H81.5M77.5 80.2 H81.5M77.5 67.2 H81.5M77.5 57.9 H81.5M77.5 50.8 H81.5M82.0 177.5 V186.5M110.7 177.5 V182.5M139.4 177.5 V182.5M168.1 177.5 V182.5M196.8 177.5 V182.5M225.5 177.5 V182.5M254.2 177.5 V186.5M283.0 177.5 V182.5M311.7 177.5 V182.5M340.4 177.5 V182.5M369.1 177.5 V182.5M397.8 177.5 V182.5M426.5 177.5 V186.5" stroke="#222" stroke-width="2.6" fill="none"/>
<rect x="437" y="46.599999999999994" width="12.5" height="131.70000000000002" fill="url(#jet)"/>
<path d="M450.0 46.599999999999994 V178.8M449.5 61.0 H457.5M449.5 80.7 H457.5M449.5 100.4 H457.5M449.5 119.8 H457.5M449.5 139.0 H457.5M449.5 158.7 H457.5M449.5 178.1 H457.5M449.5 51.3 H453.5M449.5 71.0 H453.5M449.5 90.6 H453.5M449.5 110.1 H453.5M449.5 129.4 H453.5M449.5 148.9 H453.5M449.5 168.4 H453.5" stroke="#222" stroke-width="2.6" fill="none"/>
<text x="461.5" y="67.0" text-anchor="start" font-size="12" textLength="13.5" lengthAdjust="spacingAndGlyphs">10</text>
<text x="475.5" y="62.0" text-anchor="start" font-size="12" textLength="18" lengthAdjust="spacingAndGlyphs">-10</text>
<text x="461.5" y="86.7" text-anchor="start" font-size="12" textLength="13.5" lengthAdjust="spacingAndGlyphs">10</text>
<text x="475.5" y="81.7" text-anchor="start" font-size="12" textLength="18" lengthAdjust="spacingAndGlyphs">-12</text>
<text x="461.5" y="106.4" text-anchor="start" font-size="12" textLength="13.5" lengthAdjust="spacingAndGlyphs">10</text>
<text x="475.5" y="101.4" text-anchor="start" font-size="12" textLength="18" lengthAdjust="spacingAndGlyphs">-14</text>
<text x="461.5" y="125.8" text-anchor="start" font-size="12" textLength="13.5" lengthAdjust="spacingAndGlyphs">10</text>
<text x="475.5" y="120.8" text-anchor="start" font-size="12" textLength="18" lengthAdjust="spacingAndGlyphs">-16</text>
<text x="461.5" y="145.0" text-anchor="start" font-size="12" textLength="13.5" lengthAdjust="spacingAndGlyphs">10</text>
<text x="475.5" y="140.0" text-anchor="start" font-size="12" textLength="18" lengthAdjust="spacingAndGlyphs">-18</text>
<text x="461.5" y="164.7" text-anchor="start" font-size="12" textLength="13.5" lengthAdjust="spacingAndGlyphs">10</text>
<text x="475.5" y="159.7" text-anchor="start" font-size="12" textLength="18" lengthAdjust="spacingAndGlyphs">-20</text>
<text x="461.5" y="184.1" text-anchor="start" font-size="12" textLength="13.5" lengthAdjust="spacingAndGlyphs">10</text>
<text x="475.5" y="179.1" text-anchor="start" font-size="12" textLength="18" lengthAdjust="spacingAndGlyphs">-22</text>
<text transform="translate(511.5 113) rotate(-90)" text-anchor="middle" textLength="76" lengthAdjust="spacingAndGlyphs">V^2/m^2/Hz</text>
<text x="153.8" y="38.5" text-anchor="start" font-size="12" textLength="200.5" lengthAdjust="spacingAndGlyphs">RBSP-A/EMFISIS&#160; HFR Spectra Data</text>
<text x="48.599999999999994" y="110" text-anchor="start" font-size="12" textLength="14" lengthAdjust="spacingAndGlyphs">10</text>
<text x="63.30000000000001" y="105" text-anchor="start" font-size="12" textLength="6.5" lengthAdjust="spacingAndGlyphs">5</text>
<text x="48.599999999999994" y="184.60000000000002" text-anchor="start" font-size="12" textLength="14" lengthAdjust="spacingAndGlyphs">10</text>
<text x="63.30000000000001" y="179.60000000000002" text-anchor="start" font-size="12" textLength="6.5" lengthAdjust="spacingAndGlyphs">4</text>
<text transform="translate(38.5 112.80000000000001) rotate(-90)" text-anchor="middle" textLength="15">Hz</text>
<text x="66.30000000000001" y="202.3" text-anchor="start" font-size="12" textLength="32.5" lengthAdjust="spacingAndGlyphs">00:00</text>
<text x="238" y="202.3" text-anchor="start" font-size="12" textLength="32.5" lengthAdjust="spacingAndGlyphs">06:00</text>
<text x="410" y="202.3" text-anchor="start" font-size="12" textLength="32.5" lengthAdjust="spacingAndGlyphs">12:00</text>
<text x="66.80000000000001" y="213.8" text-anchor="start" font-size="12" textLength="66" lengthAdjust="spacingAndGlyphs">2012-12-04</text>
<text x="137.7" y="205.5" text-anchor="start" font-size="12" textLength="231.3" lengthAdjust="spacingAndGlyphs">RBSP-A/ect-hope-L3&#160; HOPE e Tperp/Tpar</text>
<path d="M82.0 225.0 H425.5 V357.5" fill="none" stroke="#333" stroke-width="1"/>
<path d="M82.0 225.0 V357.5 H425.5" fill="none" stroke="#333" stroke-width="2.6"/>
<path d="M73.5 232.7 H81.5M73.5 249.8 H81.5M73.5 268.7 H81.5M73.5 289.9 H81.5M73.5 313.8 H81.5M73.5 341.5 H81.5M77.5 241.1 H81.5M77.5 259.0 H81.5M77.5 279.0 H81.5M77.5 301.5 H81.5M77.5 327.2 H81.5M77.5 357.1 H81.5M82.0 357.5 V365.5M110.7 357.5 V361.5M139.4 357.5 V361.5M168.1 357.5 V361.5M196.8 357.5 V361.5M225.5 357.5 V361.5M254.2 357.5 V365.5M283.0 357.5 V361.5M311.7 357.5 V361.5M340.4 357.5 V361.5M369.1 357.5 V361.5M397.8 357.5 V361.5M426.5 357.5 V365.5" stroke="#222" stroke-width="2.6" fill="none"/>
<text x="51.80000000000001" y="237.0" text-anchor="start" font-size="12" textLength="16.5" lengthAdjust="spacingAndGlyphs">2.2</text>
<text x="51.80000000000001" y="254.1" text-anchor="start" font-size="12" textLength="16.5" lengthAdjust="spacingAndGlyphs">2.0</text>
<text x="51.80000000000001" y="273.0" text-anchor="start" font-size="12" textLength="16.5" lengthAdjust="spacingAndGlyphs">1.8</text>
<text x="51.80000000000001" y="294.2" text-anchor="start" font-size="12" textLength="16.5" lengthAdjust="spacingAndGlyphs">1.6</text>
<text x="51.80000000000001" y="318.1" text-anchor="start" font-size="12" textLength="16.5" lengthAdjust="spacingAndGlyphs">1.4</text>
<text x="51.80000000000001" y="345.8" text-anchor="start" font-size="12" textLength="16.5" lengthAdjust="spacingAndGlyphs">1.2</text>
<text transform="translate(42.5 291.6) rotate(-90)" text-anchor="middle" textLength="71.5">e Tperp/Tpar</text>
<text x="98.69999999999999" y="380.8" text-anchor="end" font-size="12" textLength="32.3" lengthAdjust="spacingAndGlyphs">00:00</text>
<text x="184.5" y="380.8" text-anchor="end" font-size="12" textLength="32.3" lengthAdjust="spacingAndGlyphs">03:00</text>
<text x="270" y="380.8" text-anchor="end" font-size="12" textLength="32.3" lengthAdjust="spacingAndGlyphs">06:00</text>
<text x="356" y="380.8" text-anchor="end" font-size="12" textLength="32.3" lengthAdjust="spacingAndGlyphs">09:00</text>
<text x="442" y="380.8" text-anchor="end" font-size="12" textLength="32.3" lengthAdjust="spacingAndGlyphs">12:00</text>
<text x="98.69999999999999" y="395.8" text-anchor="end" font-size="12" textLength="32.3" lengthAdjust="spacingAndGlyphs">4.684</text>
<text x="184.5" y="395.8" text-anchor="end" font-size="12" textLength="32.3" lengthAdjust="spacingAndGlyphs">3.456</text>
<text x="270" y="395.8" text-anchor="end" font-size="12" textLength="32.3" lengthAdjust="spacingAndGlyphs">2.964</text>
<text x="356" y="395.8" text-anchor="end" font-size="12" textLength="32.3" lengthAdjust="spacingAndGlyphs">3.107</text>
<text x="442" y="395.8" text-anchor="end" font-size="12" textLength="32.3" lengthAdjust="spacingAndGlyphs">2.442</text>
<text x="98.69999999999999" y="410.3" text-anchor="end" font-size="12" textLength="43.3" lengthAdjust="spacingAndGlyphs">-10.921</text>
<text x="184.5" y="410.3" text-anchor="end" font-size="12" textLength="36" lengthAdjust="spacingAndGlyphs">-2.252</text>
<text x="270" y="410.3" text-anchor="end" font-size="12" textLength="32.3" lengthAdjust="spacingAndGlyphs">3.042</text>
<text x="356" y="410.3" text-anchor="end" font-size="12" textLength="32.3" lengthAdjust="spacingAndGlyphs">5.842</text>
<text x="442" y="410.3" text-anchor="end" font-size="12" textLength="36" lengthAdjust="spacingAndGlyphs">-5.211</text>
<text x="98.69999999999999" y="425.2" text-anchor="end" font-size="12" textLength="32.3" lengthAdjust="spacingAndGlyphs">22.026</text>
<text x="184.5" y="425.2" text-anchor="end" font-size="12" textLength="32.3" lengthAdjust="spacingAndGlyphs">3.353</text>
<text x="270" y="425.2" text-anchor="end" font-size="12" textLength="32.3" lengthAdjust="spacingAndGlyphs">22.901</text>
<text x="356" y="425.2" text-anchor="end" font-size="12" textLength="32.3" lengthAdjust="spacingAndGlyphs">18.349</text>
<text x="442" y="425.2" text-anchor="end" font-size="12" textLength="32.3" lengthAdjust="spacingAndGlyphs">19.721</text>
<text x="98.69999999999999" y="440.0" text-anchor="end" font-size="12" textLength="32.3" lengthAdjust="spacingAndGlyphs">1.863</text>
<text x="184.5" y="440.0" text-anchor="end" font-size="12" textLength="32.3" lengthAdjust="spacingAndGlyphs">4.435</text>
<text x="270" y="440.0" text-anchor="end" font-size="12" textLength="32.3" lengthAdjust="spacingAndGlyphs">4.945</text>
<text x="356" y="440.0" text-anchor="end" font-size="12" textLength="32.3" lengthAdjust="spacingAndGlyphs">5.649</text>
<text x="442" y="440.0" text-anchor="end" font-size="12" textLength="32.3" lengthAdjust="spacingAndGlyphs">5.116</text>
<text x="36" y="395.79999999999995" textLength="8.5">R</text><text x="44.5" y="399" font-size="6.5" font-weight="bold">E</text>
<text x="49.30000000000001" y="410.29999999999995" text-anchor="end" font-size="12" textLength="27" lengthAdjust="spacingAndGlyphs">MLat</text>
<text x="49.30000000000001" y="425.20000000000005" text-anchor="end" font-size="12" textLength="23" lengthAdjust="spacingAndGlyphs">MLT</text>
<text x="49.30000000000001" y="440" text-anchor="end" font-size="12">L</text>
<text x="162.60000000000002" y="457.1" text-anchor="start" font-size="12" textLength="182.5" lengthAdjust="spacingAndGlyphs">2012-12-04 (339) 0:00 to 12:00</text>
</g>
<path d="M82.0 355.5L83.5 343.1L85.0 341.4L86.5 341.0L88.0 321.6L89.5 304.2L91.0 330.5L92.5 326.7L94.0 322.1L95.5 302.9L97.0 328.5L98.5 309.7L100.0 306.2L101.5 330.2L103.0 294.8L104.5 310.7L106.0 313.5L107.5 317.6L109.0 302.1L110.5 329.2L112.0 311.2L113.5 307.6L115.0 309.0L116.5 291.1L118.0 310.1L119.5 312.3L121.0 292.4L122.5 296.5L124.0 299.5L125.5 278.7L127.0 304.3L128.5 304.4L130.0 289.7L131.5 282.2L133.0 292.8L134.5 291.3L136.0 285.0L137.5 282.2L139.0 290.0L140.5 285.3L142.0 264.0L143.5 261.8L145.0 278.3L146.5 274.1L148.0 274.3L149.5 278.2L151.0 252.3L152.5 279.4L154.0 290.0L155.5 272.8L157.0 252.8L158.5 277.7L160.0 237.7L161.5 241.1L163.0 258.6L164.5 269.4L166.0 251.9L167.5 245.3L169.0 243.4L170.5 244.7L172.0 242.8L173.5 233.2L175.0 259.4L176.5 268.0L178.0 281.7L179.5 282.8L181.0 273.8L182.5 278.0L184.0 300.4L185.5 291.5L187.0 300.4L188.5 314.9L190.0 321.6L191.5 320.7L193.0 325.3L194.5 335.2L196.0 347.5L197.5 326.9L199.0 328.8L200.5 314.3L202.0 308.9L203.5 310.5L205.0 310.0L206.5 312.7L208.0 292.0L209.5 294.4L211.0 279.1L212.5 272.2L214.0 272.3L215.5 263.3L217.0 268.2L218.5 251.2L220.0 262.8L221.5 249.2L223.0 226.5L224.5 259.9L226.0 237.7M257.2 286.2L258.7 281.7L260.2 263.1L261.7 266.6L263.2 267.9L264.7 282.7L266.2 267.7L267.7 278.2L269.2 251.9L270.7 267.9L272.2 267.6L273.7 276.3L275.2 266.1L276.7 275.6L278.2 268.8L279.7 260.2L281.2 297.1L282.7 271.8L284.2 277.9L285.7 275.7L287.2 274.7L288.7 276.0L290.2 287.3L291.7 288.6L293.2 282.8L294.7 276.8L296.2 286.3L297.7 278.5L299.2 293.0L300.7 301.1L302.2 277.5L303.7 280.7L305.2 259.9L306.7 298.1L308.2 273.0L309.7 278.0L311.2 282.2L312.7 291.8L314.2 287.1L315.7 294.8L317.2 292.3L318.7 282.8L320.2 284.4L321.7 281.0L323.2 282.9L324.7 305.0L326.2 281.6L327.7 279.3L329.2 283.7L330.7 282.7L332.2 292.3L333.7 274.3L335.2 258.1L336.7 264.7L338.2 258.9L339.7 278.7L341.2 268.6L342.7 273.4L344.2 276.0L345.7 287.6L347.2 267.5L348.7 286.6L350.2 274.9L351.7 272.2L353.2 288.1L354.7 293.2L356.2 272.5L357.7 274.4L359.2 283.2L360.7 272.0L362.2 279.3L363.7 277.0L365.2 286.9L366.7 293.4L368.2 292.2L369.7 306.6L371.2 324.1L372.7 298.8L374.2 298.6L375.7 318.6L377.2 312.7L378.7 294.0L380.2 300.6L381.7 299.5L383.2 288.1L384.7 287.1L386.2 282.2L387.7 279.8L389.2 273.5L390.7 267.0L392.2 278.1L393.7 274.3L395.2 291.1L396.7 282.5L398.2 270.4L399.7 286.6L401.2 265.6L402.7 283.6L404.2 263.4L405.7 283.3L407.2 266.1L408.7 264.2L410.2 248.6L411.7 247.8L413.2 264.4L414.7 268.7L416.2 250.6L417.7 251.1L419.2 260.4L420.7 259.9L422.2 253.5L423.7 257.2L425.2 278.8" fill="none" stroke="#777" stroke-width="2.4" stroke-linejoin="round" opacity="0.7"/>
<path d="M82.0 345.3L83.5 335.5L85.0 337.3L86.5 344.2L88.0 324.8L89.5 321.6L91.0 324.5L92.5 326.7L94.0 329.9L95.5 326.5L97.0 321.8L98.5 322.7L100.0 324.8L101.5 328.2L103.0 313.9L104.5 313.7L106.0 319.1L107.5 318.6L109.0 317.6L110.5 311.1L112.0 319.4L113.5 318.7L115.0 316.0L116.5 305.5L118.0 303.4L119.5 300.6L121.0 296.7L122.5 290.7L124.0 291.2L125.5 291.9L127.0 300.7L128.5 297.1L130.0 290.5L131.5 282.8L133.0 292.4L134.5 278.2L136.0 281.7L137.5 292.0L139.0 281.0L140.5 275.4L142.0 282.7L143.5 280.4L145.0 273.5L146.5 263.1L148.0 272.7L149.5 262.6L151.0 272.4L152.5 264.8L154.0 290.4L155.5 277.1L157.0 269.0L158.5 264.9L160.0 274.0L161.5 257.6L163.0 252.6L164.5 260.2L166.0 257.6L167.5 255.2L169.0 259.7L170.5 249.3L172.0 257.6L173.5 255.8L175.0 270.5L176.5 262.8L178.0 272.1L179.5 271.8L181.0 283.8L182.5 285.0L184.0 304.5L185.5 290.7L187.0 309.8L188.5 308.5L190.0 313.9L191.5 323.4L193.0 335.3L194.5 341.7L196.0 352.4L197.5 333.8L199.0 346.0L200.5 328.6L202.0 306.1L203.5 316.1L205.0 295.5L206.5 291.4L208.0 284.7L209.5 281.9L211.0 280.3L212.5 272.0L214.0 257.8L215.5 253.8L217.0 257.0L218.5 251.5L220.0 249.6L221.5 247.3L223.0 245.7L224.5 241.8L226.0 231.0M257.2 291.3L258.7 282.5L260.2 274.1L261.7 269.5L263.2 272.0L264.7 265.4L266.2 265.2L267.7 273.4L269.2 260.3L270.7 281.8L272.2 268.7L273.7 268.6L275.2 270.2L276.7 279.4L278.2 285.1L279.7 277.6L281.2 277.0L282.7 269.8L284.2 274.0L285.7 283.5L287.2 277.5L288.7 275.0L290.2 271.4L291.7 282.5L293.2 281.0L294.7 277.2L296.2 276.8L297.7 283.7L299.2 278.3L300.7 277.8L302.2 280.9L303.7 282.0L305.2 277.6L306.7 286.9L308.2 277.6L309.7 272.1L311.2 280.8L312.7 287.4L314.2 284.0L315.7 291.5L317.2 277.4L318.7 283.5L320.2 290.7L321.7 290.1L323.2 279.4L324.7 273.6L326.2 271.5L327.7 274.6L329.2 275.8L330.7 283.7L332.2 275.6L333.7 267.1L335.2 274.8L336.7 265.9L338.2 277.2L339.7 272.2L341.2 274.6L342.7 280.3L344.2 278.0L345.7 286.4L347.2 281.8L348.7 269.7L350.2 283.9L351.7 277.0L353.2 270.2L354.7 273.6L356.2 288.3L357.7 284.5L359.2 289.4L360.7 278.8L362.2 280.9L363.7 281.5L365.2 292.8L366.7 291.8L368.2 293.6L369.7 303.7L371.2 308.3L372.7 310.3L374.2 305.9L375.7 308.4L377.2 309.8L378.7 319.3L380.2 302.5L381.7 288.4L383.2 294.8L384.7 293.5L386.2 274.5L387.7 268.3L389.2 262.7L390.7 276.9L392.2 275.9L393.7 266.7L395.2 272.8L396.7 257.7L398.2 264.5L399.7 273.5L401.2 280.2L402.7 262.2L404.2 256.5L405.7 265.8L407.2 255.9L408.7 251.4L410.2 261.1L411.7 250.9L413.2 268.9L414.7 266.2L416.2 256.5L417.7 262.3L419.2 253.0L420.7 247.8L422.2 256.7L423.7 257.9L425.2 269.9" fill="none" stroke="#000" stroke-width="4" stroke-linejoin="round"/></svg></div>
<div class="abs" style="left:604.30px;top:91.90px;font:normal 6.2px 'DejaVu Sans',sans-serif;letter-spacing:-0.007px;color:#000;white-space:nowrap;line-height:normal;">2012-12-04 0:00 to 12:00</div>
<div class="abs" style="left:704px;top:2px;width:92px;height:81px;background:#fff;overflow:hidden"><svg class="th" width="92" height="81" viewBox="0 0 531 462" preserveAspectRatio="none" style="position:absolute;left:0;top:0"><g font-family="'Liberation Sans',sans-serif" font-size="12" fill="#484848">
<rect x="82.0" y="51" width="344.0" height="126" fill="url(#specg)"/>
<rect x="82.0" y="155" width="344.0" height="2" fill="#12f77c"/>
<rect x="82.0" y="159" width="344.0" height="2" fill="#12f67a"/>
<rect x="82.0" y="163" width="344.0" height="3" fill="#1af470"/>
<rect x="82.0" y="168" width="344.0" height="2" fill="#08f98e"/>
<rect x="82.0" y="171" width="344.0" height="4" fill="#22f364"/>
<rect x="82.0" y="175" width="344.0" height="2" fill="#10f780"/>
<rect x="82.0" y="56" width="344.0" height="2" fill="#a4fb1c"/>
<rect x="82.0" y="51" width="344.0" height="5" fill="#22f25e" opacity="0.6"/>
<rect x="82.0" y="78" width="344.0" height="1.5" fill="#3cf64c" opacity="0.8"/>
<rect x="82.0" y="87" width="344.0" height="1" fill="#30f656" opacity="0.5"/>
<path d="M116.8 50.3L119.8 53.0L122.8 55.8L125.8 57.1L128.8 59.1L131.8 62.0L134.8 62.4L137.8 67.5L140.8 69.3L143.8 71.4L146.8 73.2L149.8 76.0L152.8 78.2L155.8 79.6L158.8 81.2L161.8 83.5L164.8 86.2L167.8 87.6L170.8 91.1L173.8 93.6L176.8 93.9L179.8 98.1L182.8 99.0L185.8 101.5L188.8 103.4L191.8 105.1L194.8 107.2L197.8 109.7L200.8 110.6L203.8 114.5L206.8 114.5L209.8 117.7L212.8 119.9L215.8 120.8L218.8 123.4L221.8 125.3L224.8 126.9L227.8 127.4L230.8 128.0L233.8 125.7L236.8 122.5L239.8 121.2L242.8 119.5L245.8 117.7L248.8 116.0L251.8 113.8L254.8 110.6L257.8 110.3L260.8 106.0L263.8 106.4L266.8 103.7L269.8 101.6L272.8 101.5L275.8 98.2L278.8 98.9L281.8 95.9L284.8 95.2L287.8 93.1L290.8 91.4L293.8 92.4L296.8 90.6L299.8 87.6L302.8 86.3L305.8 84.2L308.8 84.0L311.8 82.9L314.8 81.6L317.8 78.1L320.8 76.9L323.8 74.1L326.8 73.5L329.8 71.8L332.8 68.7L335.8 66.8L338.8 67.0L341.8 63.9L344.8 62.8L347.8 60.5L350.8 58.0L353.8 56.9L356.8 55.4" fill="none" stroke="#70fb20" stroke-width="5" opacity="0.9" stroke-linejoin="round"/><path d="M123.7 82.5 L142.5 177.0 L104.8 177.0 Z" fill="#90fb20" opacity="0.85"/><rect x="118.5" y="145.5" width="13.7" height="25.2" fill="#ffe000" opacity="1"/><path d="M384.3 101.4 L403.2 177.0 L365.5 177.0 Z" fill="#90fb20" opacity="0.85"/><rect x="379.2" y="141.7" width="12.0" height="16.4" fill="#ffe000" opacity="1"/>
<path d="M82.0 46.5 H426.5 V177.5 H82.0 Z" fill="none" stroke="#111" stroke-width="2.6"/>
<path d="M73.5 176.5 H81.5M73.5 102.5 H81.5M77.5 154.2 H81.5M77.5 141.2 H81.5M77.5 131.9 H81.5M77.5 124.8 H81.5M77.5 118.9 H81.5M77.5 114.0 H81.5M77.5 109.7 H81.5M77.5 105.9 H81.5M77.5 80.2 H81.5M77.5 67.2 H81.5M77.5 57.9 H81.5M77.5 50.8 H81.5M82.0 177.5 V186.5M110.7 177.5 V182.5M139.4 177.5 V182.5M168.1 177.5 V182.5M196.8 177.5 V182.5M225.5 177.5 V182.5M254.2 177.5 V186.5M283.0 177.5 V182.5M311.7 177.5 V182.5M340.4 177.5 V182.5M369.1 177.5 V182.5M397.8 177.5 V182.5M426.5 177.5 V186.5" stroke="#222" stroke-width="2.6" fill="none"/>
<rect x="437" y="46.599999999999994" width="12.5" height="131.70000000000002" fill="url(#jet)"/>
<path d="M450.0 46.599999999999994 V178.8M449.5 61.0 H457.5M449.5 80.7 H457.5M449.5 100.4 H457.5M449.5 119.8 H457.5M449.5 139.0 H457.5M449.5 158.7 H457.5M449.5 178.1 H457.5M449.5 51.3 H453.5M449.5 71.0 H453.5M449.5 90.6 H453.5M449.5 110.1 H453.5M449.5 129.4 H453.5M449.5 148.9 H453.5M449.5 168.4 H453.5" stroke="#222" stroke-width="2.6" fill="none"/>
<text x="461.5" y="67.0" text-anchor="start" font-size="12" textLength="13.5" lengthAdjust="spacingAndGlyphs">10</text>
<text x="475.5" y="62.0" text-anchor="start" font-size="12" textLength="18" lengthAdjust="spacingAndGlyphs">-10</text>
<text x="461.5" y="86.7" text-anchor="start" font-size="12" textLength="13.5" lengthAdjust="spacingAndGlyphs">10</text>
<text x="475.5" y="81.7" text-anchor="start" font-size="12" textLength="18" lengthAdjust="spacingAndGlyphs">-12</text>
<text x="461.5" y="106.4" text-anchor="start" font-size="12" textLength="13.5" lengthAdjust="spacingAndGlyphs">10</text>
<text x="475.5" y="101.4" text-anchor="start" font-size="12" textLength="18" lengthAdjust="spacingAndGlyphs">-14</text>
<text x="461.5" y="125.8" text-anchor="start" font-size="12" textLength="13.5" lengthAdjust="spacingAndGlyphs">10</text>
<text x="475.5" y="120.8" text-anchor="start" font-size="12" textLength="18" lengthAdjust="spacingAndGlyphs">-16</text>
<text x="461.5" y="145.0" text-anchor="start" font-size="12" textLength="13.5" lengthAdjust="spacingAndGlyphs">10</text>
<text x="475.5" y="140.0" text-anchor="start" font-size="12" textLength="18" lengthAdjust="spacingAndGlyphs">-18</text>
<text x="461.5" y="164.7" text-anchor="start" font-size="12" textLength="13.5" lengthAdjust="spacingAndGlyphs">10</text>
<text x="475.5" y="159.7" text-anchor="start" font-size="12" textLength="18" lengthAdjust="spacingAndGlyphs">-20</text>
<text x="461.5" y="184.1" text-anchor="start" font-size="12" textLength="13.5" lengthAdjust="spacingAndGlyphs">10</text>
<text x="475.5" y="179.1" text-anchor="start" font-size="12" textLength="18" lengthAdjust="spacingAndGlyphs">-22</text>
<text transform="translate(511.5 113) rotate(-90)" text-anchor="middle" textLength="76" lengthAdjust="spacingAndGlyphs">V^2/m^2/Hz</text>
<text x="153.8" y="38.5" text-anchor="start" font-size="12" textLength="200.5" lengthAdjust="spacingAndGlyphs">RBSP-A/EMFISIS&#160; HFR Spectra Data</text>
<text x="48.599999999999994" y="110" text-anchor="start" font-size="12" textLength="14" lengthAdjust="spacingAndGlyphs">10</text>
<text x="63.30000000000001" y="105" text-anchor="start" font-size="12" textLength="6.5" lengthAdjust="spacingAndGlyphs">5</text>
<text x="48.599999999999994" y="184.60000000000002" text-anchor="start" font-size="12" textLength="14" lengthAdjust="spacingAndGlyphs">10</text>
<text x="63.30000000000001" y="179.60000000000002" text-anchor="start" font-size="12" textLength="6.5" lengthAdjust="spacingAndGlyphs">4</text>
<text transform="translate(38.5 112.80000000000001) rotate(-90)" text-anchor="middle" textLength="15">Hz</text>
<text x="66.30000000000001" y="202.3" text-anchor="start" font-size="12" textLength="32.5" lengthAdjust="spacingAndGlyphs">12:00</text>
<text x="238" y="202.3" text-anchor="start" font-size="12" textLength="32.5" lengthAdjust="spacingAndGlyphs">18:00</text>
<text x="410" y="202.3" text-anchor="start" font-size="12" textLength="32.5" lengthAdjust="spacingAndGlyphs">00:00</text>
<text x="66.80000000000001" y="213.8" text-anchor="start" font-size="12" textLength="66" lengthAdjust="spacingAndGlyphs">2012-12-04</text>
<text x="137.7" y="205.5" text-anchor="start" font-size="12" textLength="231.3" lengthAdjust="spacingAndGlyphs">RBSP-A/ect-hope-L3&#160; HOPE e Tperp/Tpar</text>
<path d="M82.0 225.0 H425.5 V357.5" fill="none" stroke="#333" stroke-width="1"/>
<path d="M82.0 225.0 V357.5 H425.5" fill="none" stroke="#333" stroke-width="2.6"/>
<path d="M73.5 232.7 H81.5M73.5 249.8 H81.5M73.5 268.7 H81.5M73.5 289.9 H81.5M73.5 313.8 H81.5M73.5 341.5 H81.5M77.5 241.1 H81.5M77.5 259.0 H81.5M77.5 279.0 H81.5M77.5 301.5 H81.5M77.5 327.2 H81.5M77.5 357.1 H81.5M82.0 357.5 V365.5M110.7 357.5 V361.5M139.4 357.5 V361.5M168.1 357.5 V361.5M196.8 357.5 V361.5M225.5 357.5 V361.5M254.2 357.5 V365.5M283.0 357.5 V361.5M311.7 357.5 V361.5M340.4 357.5 V361.5M369.1 357.5 V361.5M397.8 357.5 V361.5M426.5 357.5 V365.5" stroke="#222" stroke-width="2.6" fill="none"/>
<text x="51.80000000000001" y="237.0" text-anchor="start" font-size="12" textLength="16.5" lengthAdjust="spacingAndGlyphs">2.2</text>
<text x="51.80000000000001" y="254.1" text-anchor="start" font-size="12" textLength="16.5" lengthAdjust="spacingAndGlyphs">2.0</text>
<text x="51.80000000000001" y="273.0" text-anchor="start" font-size="12" textLength="16.5" lengthAdjust="spacingAndGlyphs">1.8</text>
<text x="51.80000000000001" y="294.2" text-anchor="start" font-size="12" textLength="16.5" lengthAdjust="spacingAndGlyphs">1.6</text>
<text x="51.80000000000001" y="318.1" text-anchor="start" font-size="12" textLength="16.5" lengthAdjust="spacingAndGlyphs">1.4</text>
<text x="51.80000000000001" y="345.8" text-anchor="start" font-size="12" textLength="16.5" lengthAdjust="spacingAndGlyphs">1.2</text>
<text transform="translate(42.5 291.6) rotate(-90)" text-anchor="middle" textLength="71.5">e Tperp/Tpar</text>
<text x="98.69999999999999" y="380.8" text-anchor="end" font-size="12" textLength="32.3" lengthAdjust="spacingAndGlyphs">12:00</text>
<text x="184.5" y="380.8" text-anchor="end" font-size="12" textLength="32.3" lengthAdjust="spacingAndGlyphs">15:00</text>
<text x="270" y="380.8" text-anchor="end" font-size="12" textLength="32.3" lengthAdjust="spacingAndGlyphs">18:00</text>
<text x="356" y="380.8" text-anchor="end" font-size="12" textLength="32.3" lengthAdjust="spacingAndGlyphs">21:00</text>
<text x="442" y="380.8" text-anchor="end" font-size="12" textLength="32.3" lengthAdjust="spacingAndGlyphs">00:00</text>
<text x="98.69999999999999" y="395.8" text-anchor="end" font-size="12" textLength="32.3" lengthAdjust="spacingAndGlyphs">3.418</text>
<text x="184.5" y="395.8" text-anchor="end" font-size="12" textLength="32.3" lengthAdjust="spacingAndGlyphs">4.041</text>
<text x="270" y="395.8" text-anchor="end" font-size="12" textLength="32.3" lengthAdjust="spacingAndGlyphs">5.552</text>
<text x="356" y="395.8" text-anchor="end" font-size="12" textLength="32.3" lengthAdjust="spacingAndGlyphs">3.433</text>
<text x="442" y="395.8" text-anchor="end" font-size="12" textLength="32.3" lengthAdjust="spacingAndGlyphs">2.314</text>
<text x="98.69999999999999" y="410.3" text-anchor="end" font-size="12" textLength="36" lengthAdjust="spacingAndGlyphs">-7.196</text>
<text x="184.5" y="410.3" text-anchor="end" font-size="12" textLength="32.3" lengthAdjust="spacingAndGlyphs">10.103</text>
<text x="270" y="410.3" text-anchor="end" font-size="12" textLength="32.3" lengthAdjust="spacingAndGlyphs">1.528</text>
<text x="356" y="410.3" text-anchor="end" font-size="12" textLength="32.3" lengthAdjust="spacingAndGlyphs">8.666</text>
<text x="442" y="410.3" text-anchor="end" font-size="12" textLength="36" lengthAdjust="spacingAndGlyphs">-6.898</text>
<text x="98.69999999999999" y="425.2" text-anchor="end" font-size="12" textLength="32.3" lengthAdjust="spacingAndGlyphs">16.094</text>
<text x="184.5" y="425.2" text-anchor="end" font-size="12" textLength="32.3" lengthAdjust="spacingAndGlyphs">21.367</text>
<text x="270" y="425.2" text-anchor="end" font-size="12" textLength="32.3" lengthAdjust="spacingAndGlyphs">2.904</text>
<text x="356" y="425.2" text-anchor="end" font-size="12" textLength="32.3" lengthAdjust="spacingAndGlyphs">18.666</text>
<text x="442" y="425.2" text-anchor="end" font-size="12" textLength="32.3" lengthAdjust="spacingAndGlyphs">20.843</text>
<text x="98.69999999999999" y="440.0" text-anchor="end" font-size="12" textLength="32.3" lengthAdjust="spacingAndGlyphs">6.216</text>
<text x="184.5" y="440.0" text-anchor="end" font-size="12" textLength="32.3" lengthAdjust="spacingAndGlyphs">1.920</text>
<text x="270" y="440.0" text-anchor="end" font-size="12" textLength="32.3" lengthAdjust="spacingAndGlyphs">2.194</text>
<text x="356" y="440.0" text-anchor="end" font-size="12" textLength="32.3" lengthAdjust="spacingAndGlyphs">5.963</text>
<text x="442" y="440.0" text-anchor="end" font-size="12" textLength="32.3" lengthAdjust="spacingAndGlyphs">3.325</text>
<text x="36" y="395.79999999999995" textLength="8.5">R</text><text x="44.5" y="399" font-size="6.5" font-weight="bold">E</text>
<text x="49.30000000000001" y="410.29999999999995" text-anchor="end" font-size="12" textLength="27" lengthAdjust="spacingAndGlyphs">MLat</text>
<text x="49.30000000000001" y="425.20000000000005" text-anchor="end" font-size="12" textLength="23" lengthAdjust="spacingAndGlyphs">MLT</text>
<text x="49.30000000000001" y="440" text-anchor="end" font-size="12">L</text>
<text x="162.60000000000002" y="457.1" text-anchor="start" font-size="12" textLength="182.5" lengthAdjust="spacingAndGlyphs">2012-12-04 (339) 12:00 to 24:00</text>
</g>
<path d="M82.0 259.2L83.5 275.7L85.0 251.7L86.5 294.8L88.0 244.6L89.5 249.4L91.0 296.6L92.5 280.9L94.0 303.4L95.5 294.8L97.0 320.9L98.5 315.7L100.0 275.0L101.5 335.5L103.0 324.6L104.5 307.2L106.0 292.4L107.5 333.7L109.0 323.3L110.5 333.1L112.0 344.6L113.5 325.7L115.0 328.0L116.5 333.0L118.0 275.7L119.5 286.2L121.0 291.7L122.5 283.5L124.0 269.0L125.5 294.8L127.0 276.0L128.5 279.2L130.0 265.2L131.5 290.8L133.0 282.0L134.5 271.9L136.0 292.4L137.5 292.1L139.0 260.7L140.5 276.8L142.0 290.3L143.5 249.9L145.0 300.9L146.5 297.6L148.0 292.5L149.5 308.1L151.0 266.2L152.5 334.1L154.0 328.5L155.5 279.6L157.0 305.7L158.5 289.1L160.0 272.5L161.5 316.7L163.0 314.0L164.5 336.1L166.0 317.5L167.5 316.0L169.0 315.5L170.5 302.7L172.0 305.1L173.5 309.5L175.0 323.4L176.5 317.0L178.0 318.8L179.5 319.5L181.0 295.5L182.5 316.9L184.0 323.1L185.5 315.9L187.0 335.2L188.5 348.3L190.0 342.9L191.5 321.1L193.0 313.0L194.5 317.5L196.0 304.1L197.5 330.7L199.0 321.4L200.5 337.7L202.0 335.9L203.5 328.8L205.0 326.3L206.5 327.1L208.0 334.5L209.5 344.0L211.0 330.8L212.5 355.5L214.0 328.5L215.5 314.6L217.0 321.6L218.5 342.7L220.0 335.7L221.5 330.7L223.0 308.7L224.5 331.7L226.0 322.0L227.5 296.1L229.0 316.2L230.5 326.3L232.0 330.1L233.5 324.7L235.0 320.4L236.5 318.4L238.0 309.7L239.5 296.7L241.0 317.0L242.5 293.3L244.0 309.0L245.5 324.1L247.0 289.5L248.5 326.0L250.0 304.9L251.5 310.3L253.0 297.3L254.5 319.6L256.0 304.6L257.5 315.8L259.0 313.9L260.5 265.6L262.0 316.6L263.5 328.6L265.0 298.4L266.5 297.1L268.0 298.2L269.5 309.8L271.0 320.9L272.5 317.1L274.0 336.2L275.5 303.0L277.0 313.1L278.5 321.1L280.0 300.7L281.5 313.3L283.0 336.9L284.5 325.0L286.0 314.8L287.5 328.2L289.0 327.3L290.5 303.6L292.0 317.2L293.5 295.9L295.0 295.3L296.5 339.0L298.0 312.3L299.5 301.4L301.0 330.9L302.5 318.9L304.0 321.1L305.5 309.0L307.0 278.8L308.5 308.0L310.0 303.5L311.5 333.5L313.0 312.4L314.5 293.3L316.0 300.8L317.5 328.6L319.0 279.3L320.5 306.3L322.0 294.7L323.5 290.5L325.0 291.1L326.5 284.0L328.0 278.4L329.5 271.5L331.0 292.7L332.5 273.0L334.0 269.3L335.5 252.6L337.0 269.4L338.5 310.0L340.0 272.1L341.5 284.2L343.0 264.1L344.5 284.6L346.0 279.2L347.5 272.6L349.0 287.0L350.5 283.3L352.0 282.7L353.5 267.9L355.0 263.4L356.5 300.3L358.0 326.4L359.5 317.3L361.0 310.1L362.5 338.0L364.0 325.1L365.5 319.6L367.0 355.5L368.5 342.8L370.0 322.1L371.5 341.6L373.0 297.6L374.5 311.7L376.0 285.3L377.5 283.6L379.0 276.4L380.5 299.5L382.0 287.4L383.5 283.1L385.0 288.7L386.5 255.9L388.0 256.0L389.5 284.6L391.0 280.0L392.5 272.1L394.0 270.6L395.5 272.6L397.0 280.1L398.5 281.0L400.0 256.0L401.5 252.6L403.0 259.6L404.5 235.6L406.0 260.1L407.5 262.1L409.0 249.9L410.5 281.3L412.0 256.6L413.5 283.3L415.0 277.6L416.5 276.2L418.0 286.1L419.5 262.4L421.0 253.5L422.5 237.8L424.0 254.7L425.5 292.9" fill="none" stroke="#777" stroke-width="2.4" stroke-linejoin="round" opacity="0.7"/>
<path d="M82.0 261.4L83.5 275.7L85.0 258.8L86.5 270.0L88.0 272.1L89.5 267.8L91.0 283.4L92.5 275.9L94.0 265.5L95.5 274.5L97.0 285.5L98.5 293.3L100.0 297.4L101.5 301.8L103.0 302.7L104.5 296.1L106.0 302.0L107.5 324.9L109.0 329.5L110.5 326.8L112.0 346.8L113.5 345.1L115.0 334.8L116.5 301.1L118.0 298.7L119.5 285.9L121.0 303.5L122.5 283.5L124.0 277.5L125.5 274.1L127.0 276.6L128.5 262.3L130.0 283.3L131.5 273.3L133.0 265.7L134.5 264.4L136.0 258.5L137.5 250.9L139.0 282.5L140.5 256.4L142.0 265.7L143.5 280.5L145.0 291.2L146.5 278.2L148.0 284.4L149.5 295.6L151.0 277.1L152.5 322.1L154.0 279.6L155.5 291.9L157.0 293.9L158.5 300.8L160.0 302.0L161.5 296.8L163.0 301.9L164.5 301.3L166.0 326.3L167.5 305.9L169.0 311.6L170.5 307.0L172.0 314.1L173.5 345.2L175.0 320.9L176.5 324.8L178.0 313.9L179.5 314.7L181.0 335.0L182.5 329.0L184.0 317.7L185.5 328.1L187.0 327.0L188.5 344.0L190.0 328.3L191.5 325.1L193.0 332.6L194.5 313.1L196.0 322.5L197.5 321.2L199.0 326.5L200.5 331.4L202.0 331.4L203.5 342.4L205.0 332.1L206.5 334.3L208.0 321.1L209.5 334.8L211.0 319.2L212.5 329.7L214.0 323.6L215.5 324.2L217.0 322.1L218.5 331.7L220.0 323.0L221.5 327.8L223.0 319.6L224.5 323.6L226.0 321.7L227.5 333.0L229.0 325.2L230.5 316.9L232.0 333.8L233.5 315.8L235.0 313.0L236.5 296.5L238.0 317.4L239.5 311.9L241.0 308.6L242.5 327.9L244.0 311.8L245.5 303.3L247.0 302.4L248.5 311.0L250.0 304.5L251.5 300.7L253.0 283.1L254.5 304.8L256.0 321.6L257.5 302.6L259.0 306.3L260.5 300.2L262.0 298.9L263.5 300.4L265.0 309.2L266.5 299.5L268.0 295.0L269.5 312.8L271.0 324.2L272.5 315.8L274.0 320.1L275.5 323.5L277.0 298.2L278.5 319.2L280.0 310.2L281.5 316.3L283.0 327.6L284.5 312.1L286.0 318.7L287.5 297.8L289.0 304.6L290.5 323.3L292.0 320.9L293.5 313.8L295.0 326.6L296.5 294.1L298.0 316.9L299.5 329.0L301.0 308.5L302.5 314.2L304.0 320.4L305.5 305.3L307.0 313.2L308.5 299.3L310.0 314.1L311.5 299.5L313.0 303.8L314.5 291.0L316.0 299.8L317.5 294.0L319.0 310.4L320.5 293.8L322.0 297.9L323.5 297.4L325.0 290.5L326.5 277.0L328.0 268.6L329.5 273.5L331.0 278.9L332.5 275.9L334.0 286.6L335.5 274.3L337.0 265.0L338.5 263.8L340.0 279.5L341.5 272.0L343.0 275.9L344.5 271.5L346.0 277.8L347.5 285.0L349.0 282.8L350.5 288.2L352.0 281.9L353.5 289.2L355.0 292.6L356.5 303.7L358.0 288.1L359.5 333.7L361.0 318.6L362.5 329.8L364.0 329.4L365.5 355.5L367.0 355.5L368.5 343.8L370.0 344.9L371.5 333.5L373.0 318.4L374.5 323.2L376.0 306.3L377.5 298.4L379.0 286.8L380.5 291.4L382.0 290.0L383.5 303.6L385.0 290.0L386.5 295.6L388.0 275.9L389.5 267.6L391.0 288.4L392.5 281.4L394.0 267.9L395.5 273.7L397.0 266.8L398.5 258.1L400.0 260.9L401.5 252.1L403.0 238.0L404.5 257.4L406.0 270.9L407.5 250.8L409.0 243.7L410.5 259.5L412.0 250.1L413.5 260.1L415.0 260.9L416.5 246.2L418.0 266.0L419.5 264.8L421.0 230.7L422.5 264.5L424.0 255.6L425.5 268.9" fill="none" stroke="#000" stroke-width="4" stroke-linejoin="round"/><path d="M111.2 227 V356" stroke="#222" stroke-width="2.5"/><path d="M367.1 227 V356" stroke="#222" stroke-width="2.5"/></svg></div>
<div class="abs" style="left:704.30px;top:91.90px;font:normal 6.2px 'DejaVu Sans',sans-serif;letter-spacing:0.000px;color:#000;white-space:nowrap;line-height:normal;">2012-12-04 12:00 to 24:00</div>
<div class="abs" style="left:804px;top:2px;width:92px;height:81px;background:#fff;overflow:hidden"><svg class="th" width="92" height="81" viewBox="0 0 531 462" preserveAspectRatio="none" style="position:absolute;left:0;top:0"><g font-family="'Liberation Sans',sans-serif" font-size="12" fill="#484848">
<rect x="82.0" y="51" width="344.0" height="126" fill="url(#specg)"/>
<rect x="82.0" y="155" width="344.0" height="2" fill="#12f77c"/>
<rect x="82.0" y="159" width="344.0" height="2" fill="#12f67a"/>
<rect x="82.0" y="163" width="344.0" height="3" fill="#1af470"/>
<rect x="82.0" y="168" width="344.0" height="2" fill="#08f98e"/>
<rect x="82.0" y="171" width="344.0" height="4" fill="#22f364"/>
<rect x="82.0" y="175" width="344.0" height="2" fill="#10f780"/>
<rect x="82.0" y="56" width="344.0" height="2" fill="#a4fb1c"/>
<rect x="82.0" y="51" width="344.0" height="5" fill="#22f25e" opacity="0.6"/>
<rect x="82.0" y="78" width="344.0" height="1.5" fill="#3cf64c" opacity="0.8"/>
<rect x="82.0" y="87" width="344.0" height="1" fill="#30f656" opacity="0.5"/>
<path d="M82.5 94.5L85.5 97.1L88.5 100.7L91.5 101.9L94.5 104.1L97.5 106.7L100.5 107.4L103.5 111.2L106.5 113.6L109.5 114.9L112.5 119.6L115.5 119.2L118.5 121.4L121.5 123.5L124.5 125.9L127.5 128.3L130.5 127.4L133.5 129.7L136.5 133.8L139.5 134.3L142.5 136.1L145.5 138.2L148.5 141.5L151.5 141.7L154.5 139.0L157.5 136.5L160.5 134.8L163.5 133.5L166.5 131.0L169.5 128.9L172.5 129.1L175.5 127.1L178.5 124.1L181.5 124.1L184.5 121.3L187.5 117.9L190.5 116.1L193.5 113.2L196.5 109.6L199.5 108.6L202.5 103.5L205.5 102.6L208.5 98.8L211.5 97.3L214.5 94.0L217.5 91.9L220.5 86.5L223.5 85.2L226.5 83.5L229.5 79.5L232.5 78.8L235.5 75.1L238.5 72.4L241.5 68.5L244.5 64.2L247.5 63.4L250.5 60.5L253.5 58.4" fill="none" stroke="#70fb20" stroke-width="4" opacity="0.9" stroke-linejoin="round"/><path d="M295.2 64.0L298.2 64.9L301.2 65.2L304.2 68.2L307.2 68.9L310.2 70.3L313.2 71.4L316.2 73.8L319.2 74.6L322.2 76.1L325.2 76.1L328.2 77.2L331.2 78.0L334.2 79.9L337.2 79.1L340.2 84.1L343.2 84.1L346.2 85.3L349.2 87.2L352.2 87.5L355.2 89.3L358.2 91.0L361.2 90.3L364.2 94.3L367.2 94.3L370.2 95.9L373.2 95.8L376.2 97.4L379.2 100.7L382.2 100.0L385.2 100.8L388.2 100.7L391.2 100.6L394.2 96.3L397.2 98.8L400.2 96.8L403.2 96.4L406.2 93.9L409.2 94.1L412.2 94.3L415.2 91.9L418.2 90.5L421.2 89.8L424.2 88.8" fill="none" stroke="#70fb20" stroke-width="4" opacity="0.9" stroke-linejoin="round"/><path d="M302.0 101.4 L320.9 177.0 L283.2 177.0 Z" fill="#70fb20" opacity="0.85"/><rect x="291.7" y="144.2" width="24.0" height="7.6" fill="#e8ff18" opacity="1"/><rect x="82.5" y="51.0" width="171.5" height="37.8" fill="#30f050" opacity="0.4"/>
<path d="M82.0 46.5 H426.5 V177.5 H82.0 Z" fill="none" stroke="#111" stroke-width="2.6"/>
<path d="M73.5 176.5 H81.5M73.5 102.5 H81.5M77.5 154.2 H81.5M77.5 141.2 H81.5M77.5 131.9 H81.5M77.5 124.8 H81.5M77.5 118.9 H81.5M77.5 114.0 H81.5M77.5 109.7 H81.5M77.5 105.9 H81.5M77.5 80.2 H81.5M77.5 67.2 H81.5M77.5 57.9 H81.5M77.5 50.8 H81.5M82.0 177.5 V186.5M110.7 177.5 V182.5M139.4 177.5 V182.5M168.1 177.5 V182.5M196.8 177.5 V182.5M225.5 177.5 V182.5M254.2 177.5 V186.5M283.0 177.5 V182.5M311.7 177.5 V182.5M340.4 177.5 V182.5M369.1 177.5 V182.5M397.8 177.5 V182.5M426.5 177.5 V186.5" stroke="#222" stroke-width="2.6" fill="none"/>
<rect x="437" y="46.599999999999994" width="12.5" height="131.70000000000002" fill="url(#jet)"/>
<path d="M450.0 46.599999999999994 V178.8M449.5 61.0 H457.5M449.5 80.7 H457.5M449.5 100.4 H457.5M449.5 119.8 H457.5M449.5 139.0 H457.5M449.5 158.7 H457.5M449.5 178.1 H457.5M449.5 51.3 H453.5M449.5 71.0 H453.5M449.5 90.6 H453.5M449.5 110.1 H453.5M449.5 129.4 H453.5M449.5 148.9 H453.5M449.5 168.4 H453.5" stroke="#222" stroke-width="2.6" fill="none"/>
<text x="461.5" y="67.0" text-anchor="start" font-size="12" textLength="13.5" lengthAdjust="spacingAndGlyphs">10</text>
<text x="475.5" y="62.0" text-anchor="start" font-size="12" textLength="18" lengthAdjust="spacingAndGlyphs">-10</text>
<text x="461.5" y="86.7" text-anchor="start" font-size="12" textLength="13.5" lengthAdjust="spacingAndGlyphs">10</text>
<text x="475.5" y="81.7" text-anchor="start" font-size="12" textLength="18" lengthAdjust="spacingAndGlyphs">-12</text>
<text x="461.5" y="106.4" text-anchor="start" font-size="12" textLength="13.5" lengthAdjust="spacingAndGlyphs">10</text>
<text x="475.5" y="101.4" text-anchor="start" font-size="12" textLength="18" lengthAdjust="spacingAndGlyphs">-14</text>
<text x="461.5" y="125.8" text-anchor="start" font-size="12" textLength="13.5" lengthAdjust="spacingAndGlyphs">10</text>
<text x="475.5" y="120.8" text-anchor="start" font-size="12" textLength="18" lengthAdjust="spacingAndGlyphs">-16</text>
<text x="461.5" y="145.0" text-anchor="start" font-size="12" textLength="13.5" lengthAdjust="spacingAndGlyphs">10</text>
<text x="475.5" y="140.0" text-anchor="start" font-size="12" textLength="18" lengthAdjust="spacingAndGlyphs">-18</text>
<text x="461.5" y="164.7" text-anchor="start" font-size="12" textLength="13.5" lengthAdjust="spacingAndGlyphs">10</text>
<text x="475.5" y="159.7" text-anchor="start" font-size="12" textLength="18" lengthAdjust="spacingAndGlyphs">-20</text>
<text x="461.5" y="184.1" text-anchor="start" font-size="12" textLength="13.5" lengthAdjust="spacingAndGlyphs">10</text>
<text x="475.5" y="179.1" text-anchor="start" font-size="12" textLength="18" lengthAdjust="spacingAndGlyphs">-22</text>
<text transform="translate(511.5 113) rotate(-90)" text-anchor="middle" textLength="76" lengthAdjust="spacingAndGlyphs">V^2/m^2/Hz</text>
<text x="153.8" y="38.5" text-anchor="start" font-size="12" textLength="200.5" lengthAdjust="spacingAndGlyphs">RBSP-A/EMFISIS&#160; HFR Spectra Data</text>
<text x="48.599999999999994" y="110" text-anchor="start" font-size="12" textLength="14" lengthAdjust="spacingAndGlyphs">10</text>
<text x="63.30000000000001" y="105" text-anchor="start" font-size="12" textLength="6.5" lengthAdjust="spacingAndGlyphs">5</text>
<text x="48.599999999999994" y="184.60000000000002" text-anchor="start" font-size="12" textLength="14" lengthAdjust="spacingAndGlyphs">10</text>
<text x="63.30000000000001" y="179.60000000000002" text-anchor="start" font-size="12" textLength="6.5" lengthAdjust="spacingAndGlyphs">4</text>
<text transform="translate(38.5 112.80000000000001) rotate(-90)" text-anchor="middle" textLength="15">Hz</text>
<text x="66.30000000000001" y="202.3" text-anchor="start" font-size="12" textLength="32.5" lengthAdjust="spacingAndGlyphs">00:00</text>
<text x="238" y="202.3" text-anchor="start" font-size="12" textLength="32.5" lengthAdjust="spacingAndGlyphs">06:00</text>
<text x="410" y="202.3" text-anchor="start" font-size="12" textLength="32.5" lengthAdjust="spacingAndGlyphs">12:00</text>
<text x="66.80000000000001" y="213.8" text-anchor="start" font-size="12" textLength="66" lengthAdjust="spacingAndGlyphs">2012-12-05</text>
<text x="137.7" y="205.5" text-anchor="start" font-size="12" textLength="231.3" lengthAdjust="spacingAndGlyphs">RBSP-A/ect-hope-L3&#160; HOPE e Tperp/Tpar</text>
<path d="M82.0 225.0 H425.5 V357.5" fill="none" stroke="#333" stroke-width="1"/>
<path d="M82.0 225.0 V357.5 H425.5" fill="none" stroke="#333" stroke-width="2.6"/>
<path d="M73.5 232.7 H81.5M73.5 249.8 H81.5M73.5 268.7 H81.5M73.5 289.9 H81.5M73.5 313.8 H81.5M73.5 341.5 H81.5M77.5 241.1 H81.5M77.5 259.0 H81.5M77.5 279.0 H81.5M77.5 301.5 H81.5M77.5 327.2 H81.5M77.5 357.1 H81.5M82.0 357.5 V365.5M110.7 357.5 V361.5M139.4 357.5 V361.5M168.1 357.5 V361.5M196.8 357.5 V361.5M225.5 357.5 V361.5M254.2 357.5 V365.5M283.0 357.5 V361.5M311.7 357.5 V361.5M340.4 357.5 V361.5M369.1 357.5 V361.5M397.8 357.5 V361.5M426.5 357.5 V365.5" stroke="#222" stroke-width="2.6" fill="none"/>
<text x="51.80000000000001" y="237.0" text-anchor="start" font-size="12" textLength="16.5" lengthAdjust="spacingAndGlyphs">2.2</text>
<text x="51.80000000000001" y="254.1" text-anchor="start" font-size="12" textLength="16.5" lengthAdjust="spacingAndGlyphs">2.0</text>
<text x="51.80000000000001" y="273.0" text-anchor="start" font-size="12" textLength="16.5" lengthAdjust="spacingAndGlyphs">1.8</text>
<text x="51.80000000000001" y="294.2" text-anchor="start" font-size="12" textLength="16.5" lengthAdjust="spacingAndGlyphs">1.6</text>
<text x="51.80000000000001" y="318.1" text-anchor="start" font-size="12" textLength="16.5" lengthAdjust="spacingAndGlyphs">1.4</text>
<text x="51.80000000000001" y="345.8" text-anchor="start" font-size="12" textLength="16.5" lengthAdjust="spacingAndGlyphs">1.2</text>
<text transform="translate(42.5 291.6) rotate(-90)" text-anchor="middle" textLength="71.5">e Tperp/Tpar</text>
<text x="98.69999999999999" y="380.8" text-anchor="end" font-size="12" textLength="32.3" lengthAdjust="spacingAndGlyphs">00:00</text>
<text x="184.5" y="380.8" text-anchor="end" font-size="12" textLength="32.3" lengthAdjust="spacingAndGlyphs">03:00</text>
<text x="270" y="380.8" text-anchor="end" font-size="12" textLength="32.3" lengthAdjust="spacingAndGlyphs">06:00</text>
<text x="356" y="380.8" text-anchor="end" font-size="12" textLength="32.3" lengthAdjust="spacingAndGlyphs">09:00</text>
<text x="442" y="380.8" text-anchor="end" font-size="12" textLength="32.3" lengthAdjust="spacingAndGlyphs">12:00</text>
<text x="98.69999999999999" y="395.8" text-anchor="end" font-size="12" textLength="32.3" lengthAdjust="spacingAndGlyphs">3.692</text>
<text x="184.5" y="395.8" text-anchor="end" font-size="12" textLength="32.3" lengthAdjust="spacingAndGlyphs">4.253</text>
<text x="270" y="395.8" text-anchor="end" font-size="12" textLength="32.3" lengthAdjust="spacingAndGlyphs">3.476</text>
<text x="356" y="395.8" text-anchor="end" font-size="12" textLength="32.3" lengthAdjust="spacingAndGlyphs">1.664</text>
<text x="442" y="395.8" text-anchor="end" font-size="12" textLength="32.3" lengthAdjust="spacingAndGlyphs">2.885</text>
<text x="98.69999999999999" y="410.3" text-anchor="end" font-size="12" textLength="43.3" lengthAdjust="spacingAndGlyphs">-15.577</text>
<text x="184.5" y="410.3" text-anchor="end" font-size="12" textLength="32.3" lengthAdjust="spacingAndGlyphs">1.096</text>
<text x="270" y="410.3" text-anchor="end" font-size="12" textLength="36" lengthAdjust="spacingAndGlyphs">-6.921</text>
<text x="356" y="410.3" text-anchor="end" font-size="12" textLength="32.3" lengthAdjust="spacingAndGlyphs">9.496</text>
<text x="442" y="410.3" text-anchor="end" font-size="12" textLength="36" lengthAdjust="spacingAndGlyphs">-1.076</text>
<text x="98.69999999999999" y="425.2" text-anchor="end" font-size="12" textLength="32.3" lengthAdjust="spacingAndGlyphs">16.902</text>
<text x="184.5" y="425.2" text-anchor="end" font-size="12" textLength="32.3" lengthAdjust="spacingAndGlyphs">8.067</text>
<text x="270" y="425.2" text-anchor="end" font-size="12" textLength="32.3" lengthAdjust="spacingAndGlyphs">13.120</text>
<text x="356" y="425.2" text-anchor="end" font-size="12" textLength="32.3" lengthAdjust="spacingAndGlyphs">20.230</text>
<text x="442" y="425.2" text-anchor="end" font-size="12" textLength="32.3" lengthAdjust="spacingAndGlyphs">8.615</text>
<text x="98.69999999999999" y="440.0" text-anchor="end" font-size="12" textLength="32.3" lengthAdjust="spacingAndGlyphs">5.720</text>
<text x="184.5" y="440.0" text-anchor="end" font-size="12" textLength="32.3" lengthAdjust="spacingAndGlyphs">6.161</text>
<text x="270" y="440.0" text-anchor="end" font-size="12" textLength="32.3" lengthAdjust="spacingAndGlyphs">2.893</text>
<text x="356" y="440.0" text-anchor="end" font-size="12" textLength="32.3" lengthAdjust="spacingAndGlyphs">4.936</text>
<text x="442" y="440.0" text-anchor="end" font-size="12" textLength="32.3" lengthAdjust="spacingAndGlyphs">2.067</text>
<text x="36" y="395.79999999999995" textLength="8.5">R</text><text x="44.5" y="399" font-size="6.5" font-weight="bold">E</text>
<text x="49.30000000000001" y="410.29999999999995" text-anchor="end" font-size="12" textLength="27" lengthAdjust="spacingAndGlyphs">MLat</text>
<text x="49.30000000000001" y="425.20000000000005" text-anchor="end" font-size="12" textLength="23" lengthAdjust="spacingAndGlyphs">MLT</text>
<text x="49.30000000000001" y="440" text-anchor="end" font-size="12">L</text>
<text x="162.60000000000002" y="457.1" text-anchor="start" font-size="12" textLength="182.5" lengthAdjust="spacingAndGlyphs">2012-12-05 (340) 0:00 to 12:00</text>
</g></svg></div>
<div class="abs" style="left:804.30px;top:91.90px;font:normal 6.2px 'DejaVu Sans',sans-serif;letter-spacing:-0.007px;color:#000;white-space:nowrap;line-height:normal;">2012-12-05 0:00 to 12:00</div>
<div class="abs" style="left:904px;top:2px;width:92px;height:81px;background:#fff;overflow:hidden"><svg class="th" width="92" height="81" viewBox="0 0 531 462" preserveAspectRatio="none" style="position:absolute;left:0;top:0"><g font-family="'Liberation Sans',sans-serif" font-size="12" fill="#484848">
<rect x="82.0" y="51" width="344.0" height="126" fill="url(#specg)"/>
<rect x="82.0" y="155" width="344.0" height="2" fill="#12f77c"/>
<rect x="82.0" y="159" width="344.0" height="2" fill="#12f67a"/>
<rect x="82.0" y="163" width="344.0" height="3" fill="#1af470"/>
<rect x="82.0" y="168" width="344.0" height="2" fill="#08f98e"/>
<rect x="82.0" y="171" width="344.0" height="4" fill="#22f364"/>
<rect x="82.0" y="175" width="344.0" height="2" fill="#10f780"/>
<rect x="82.0" y="56" width="344.0" height="2" fill="#a4fb1c"/>
<rect x="82.0" y="51" width="344.0" height="5" fill="#22f25e" opacity="0.6"/>
<rect x="82.0" y="78" width="344.0" height="1.5" fill="#3cf64c" opacity="0.8"/>
<rect x="82.0" y="87" width="344.0" height="1" fill="#30f656" opacity="0.5"/>
<rect x="82.5" y="51.0" width="68.6" height="126.0" fill="#30f050" opacity="0.5"/>
<path d="M82.0 46.5 H426.5 V177.5 H82.0 Z" fill="none" stroke="#111" stroke-width="2.6"/>
<path d="M73.5 176.5 H81.5M73.5 102.5 H81.5M77.5 154.2 H81.5M77.5 141.2 H81.5M77.5 131.9 H81.5M77.5 124.8 H81.5M77.5 118.9 H81.5M77.5 114.0 H81.5M77.5 109.7 H81.5M77.5 105.9 H81.5M77.5 80.2 H81.5M77.5 67.2 H81.5M77.5 57.9 H81.5M77.5 50.8 H81.5M82.0 177.5 V186.5M110.7 177.5 V182.5M139.4 177.5 V182.5M168.1 177.5 V182.5M196.8 177.5 V182.5M225.5 177.5 V182.5M254.2 177.5 V186.5M283.0 177.5 V182.5M311.7 177.5 V182.5M340.4 177.5 V182.5M369.1 177.5 V182.5M397.8 177.5 V182.5M426.5 177.5 V186.5" stroke="#222" stroke-width="2.6" fill="none"/>
<rect x="437" y="46.599999999999994" width="12.5" height="131.70000000000002" fill="url(#jet)"/>
<path d="M450.0 46.599999999999994 V178.8M449.5 61.0 H457.5M449.5 80.7 H457.5M449.5 100.4 H457.5M449.5 119.8 H457.5M449.5 139.0 H457.5M449.5 158.7 H457.5M449.5 178.1 H457.5M449.5 51.3 H453.5M449.5 71.0 H453.5M449.5 90.6 H453.5M449.5 110.1 H453.5M449.5 129.4 H453.5M449.5 148.9 H453.5M449.5 168.4 H453.5" stroke="#222" stroke-width="2.6" fill="none"/>
<text x="461.5" y="67.0" text-anchor="start" font-size="12" textLength="13.5" lengthAdjust="spacingAndGlyphs">10</text>
<text x="475.5" y="62.0" text-anchor="start" font-size="12" textLength="18" lengthAdjust="spacingAndGlyphs">-10</text>
<text x="461.5" y="86.7" text-anchor="start" font-size="12" textLength="13.5" lengthAdjust="spacingAndGlyphs">10</text>
<text x="475.5" y="81.7" text-anchor="start" font-size="12" textLength="18" lengthAdjust="spacingAndGlyphs">-12</text>
<text x="461.5" y="106.4" text-anchor="start" font-size="12" textLength="13.5" lengthAdjust="spacingAndGlyphs">10</text>
<text x="475.5" y="101.4" text-anchor="start" font-size="12" textLength="18" lengthAdjust="spacingAndGlyphs">-14</text>
<text x="461.5" y="125.8" text-anchor="start" font-size="12" textLength="13.5" lengthAdjust="spacingAndGlyphs">10</text>
<text x="475.5" y="120.8" text-anchor="start" font-size="12" textLength="18" lengthAdjust="spacingAndGlyphs">-16</text>
<text x="461.5" y="145.0" text-anchor="start" font-size="12" textLength="13.5" lengthAdjust="spacingAndGlyphs">10</text>
<text x="475.5" y="140.0" text-anchor="start" font-size="12" textLength="18" lengthAdjust="spacingAndGlyphs">-18</text>
<text x="461.5" y="164.7" text-anchor="start" font-size="12" textLength="13.5" lengthAdjust="spacingAndGlyphs">10</text>
<text x="475.5" y="159.7" text-anchor="start" font-size="12" textLength="18" lengthAdjust="spacingAndGlyphs">-20</text>
<text x="461.5" y="184.1" text-anchor="start" font-size="12" textLength="13.5" lengthAdjust="spacingAndGlyphs">10</text>
<text x="475.5" y="179.1" text-anchor="start" font-size="12" textLength="18" lengthAdjust="spacingAndGlyphs">-22</text>
<text transform="translate(511.5 113) rotate(-90)" text-anchor="middle" textLength="76" lengthAdjust="spacingAndGlyphs">V^2/m^2/Hz</text>
<text x="153.8" y="38.5" text-anchor="start" font-size="12" textLength="200.5" lengthAdjust="spacingAndGlyphs">RBSP-A/EMFISIS&#160; HFR Spectra Data</text>
<text x="48.599999999999994" y="110" text-anchor="start" font-size="12" textLength="14" lengthAdjust="spacingAndGlyphs">10</text>
<text x="63.30000000000001" y="105" text-anchor="start" font-size="12" textLength="6.5" lengthAdjust="spacingAndGlyphs">5</text>
<text x="48.599999999999994" y="184.60000000000002" text-anchor="start" font-size="12" textLength="14" lengthAdjust="spacingAndGlyphs">10</text>
<text x="63.30000000000001" y="179.60000000000002" text-anchor="start" font-size="12" textLength="6.5" lengthAdjust="spacingAndGlyphs">4</text>
<text transform="translate(38.5 112.80000000000001) rotate(-90)" text-anchor="middle" textLength="15">Hz</text>
<text x="66.30000000000001" y="202.3" text-anchor="start" font-size="12" textLength="32.5" lengthAdjust="spacingAndGlyphs">12:00</text>
<text x="238" y="202.3" text-anchor="start" font-size="12" textLength="32.5" lengthAdjust="spacingAndGlyphs">18:00</text>
<text x="410" y="202.3" text-anchor="start" font-size="12" textLength="32.5" lengthAdjust="spacingAndGlyphs">00:00</text>
<text x="66.80000000000001" y="213.8" text-anchor="start" font-size="12" textLength="66" lengthAdjust="spacingAndGlyphs">2012-12-05</text>
<text x="137.7" y="205.5" text-anchor="start" font-size="12" textLength="231.3" lengthAdjust="spacingAndGlyphs">RBSP-A/ect-hope-L3&#160; HOPE e Tperp/Tpar</text>
<path d="M82.0 225.0 H425.5 V357.5" fill="none" stroke="#333" stroke-width="1"/>
<path d="M82.0 225.0 V357.5 H425.5" fill="none" stroke="#333" stroke-width="2.6"/>
<path d="M73.5 232.7 H81.5M73.5 249.8 H81.5M73.5 268.7 H81.5M73.5 289.9 H81.5M73.5 313.8 H81.5M73.5 341.5 H81.5M77.5 241.1 H81.5M77.5 259.0 H81.5M77.5 279.0 H81.5M77.5 301.5 H81.5M77.5 327.2 H81.5M77.5 357.1 H81.5M82.0 357.5 V365.5M110.7 357.5 V361.5M139.4 357.5 V361.5M168.1 357.5 V361.5M196.8 357.5 V361.5M225.5 357.5 V361.5M254.2 357.5 V365.5M283.0 357.5 V361.5M311.7 357.5 V361.5M340.4 357.5 V361.5M369.1 357.5 V361.5M397.8 357.5 V361.5M426.5 357.5 V365.5" stroke="#222" stroke-width="2.6" fill="none"/>
<text x="51.80000000000001" y="237.0" text-anchor="start" font-size="12" textLength="16.5" lengthAdjust="spacingAndGlyphs">2.2</text>
<text x="51.80000000000001" y="254.1" text-anchor="start" font-size="12" textLength="16.5" lengthAdjust="spacingAndGlyphs">2.0</text>
<text x="51.80000000000001" y="273.0" text-anchor="start" font-size="12" textLength="16.5" lengthAdjust="spacingAndGlyphs">1.8</text>
<text x="51.80000000000001" y="294.2" text-anchor="start" font-size="12" textLength="16.5" lengthAdjust="spacingAndGlyphs">1.6</text>
<text x="51.80000000000001" y="318.1" text-anchor="start" font-size="12" textLength="16.5" lengthAdjust="spacingAndGlyphs">1.4</text>
<text x="51.80000000000001" y="345.8" text-anchor="start" font-size="12" textLength="16.5" lengthAdjust="spacingAndGlyphs">1.2</text>
<text transform="translate(42.5 291.6) rotate(-90)" text-anchor="middle" textLength="71.5">e Tperp/Tpar</text>
<text x="98.69999999999999" y="380.8" text-anchor="end" font-size="12" textLength="32.3" lengthAdjust="spacingAndGlyphs">12:00</text>
<text x="184.5" y="380.8" text-anchor="end" font-size="12" textLength="32.3" lengthAdjust="spacingAndGlyphs">15:00</text>
<text x="270" y="380.8" text-anchor="end" font-size="12" textLength="32.3" lengthAdjust="spacingAndGlyphs">18:00</text>
<text x="356" y="380.8" text-anchor="end" font-size="12" textLength="32.3" lengthAdjust="spacingAndGlyphs">21:00</text>
<text x="442" y="380.8" text-anchor="end" font-size="12" textLength="32.3" lengthAdjust="spacingAndGlyphs">00:00</text>
<text x="98.69999999999999" y="395.8" text-anchor="end" font-size="12" textLength="32.3" lengthAdjust="spacingAndGlyphs">4.442</text>
<text x="184.5" y="395.8" text-anchor="end" font-size="12" textLength="32.3" lengthAdjust="spacingAndGlyphs">5.415</text>
<text x="270" y="395.8" text-anchor="end" font-size="12" textLength="32.3" lengthAdjust="spacingAndGlyphs">2.167</text>
<text x="356" y="395.8" text-anchor="end" font-size="12" textLength="32.3" lengthAdjust="spacingAndGlyphs">1.957</text>
<text x="442" y="395.8" text-anchor="end" font-size="12" textLength="32.3" lengthAdjust="spacingAndGlyphs">1.817</text>
<text x="98.69999999999999" y="410.3" text-anchor="end" font-size="12" textLength="36" lengthAdjust="spacingAndGlyphs">-0.539</text>
<text x="184.5" y="410.3" text-anchor="end" font-size="12" textLength="36" lengthAdjust="spacingAndGlyphs">-1.198</text>
<text x="270" y="410.3" text-anchor="end" font-size="12" textLength="32.3" lengthAdjust="spacingAndGlyphs">2.780</text>
<text x="356" y="410.3" text-anchor="end" font-size="12" textLength="32.3" lengthAdjust="spacingAndGlyphs">1.803</text>
<text x="442" y="410.3" text-anchor="end" font-size="12" textLength="36" lengthAdjust="spacingAndGlyphs">-8.723</text>
<text x="98.69999999999999" y="425.2" text-anchor="end" font-size="12" textLength="32.3" lengthAdjust="spacingAndGlyphs">7.163</text>
<text x="184.5" y="425.2" text-anchor="end" font-size="12" textLength="32.3" lengthAdjust="spacingAndGlyphs">20.607</text>
<text x="270" y="425.2" text-anchor="end" font-size="12" textLength="32.3" lengthAdjust="spacingAndGlyphs">13.686</text>
<text x="356" y="425.2" text-anchor="end" font-size="12" textLength="32.3" lengthAdjust="spacingAndGlyphs">0.572</text>
<text x="442" y="425.2" text-anchor="end" font-size="12" textLength="32.3" lengthAdjust="spacingAndGlyphs">7.306</text>
<text x="98.69999999999999" y="440.0" text-anchor="end" font-size="12" textLength="32.3" lengthAdjust="spacingAndGlyphs">2.355</text>
<text x="184.5" y="440.0" text-anchor="end" font-size="12" textLength="32.3" lengthAdjust="spacingAndGlyphs">3.406</text>
<text x="270" y="440.0" text-anchor="end" font-size="12" textLength="32.3" lengthAdjust="spacingAndGlyphs">2.622</text>
<text x="356" y="440.0" text-anchor="end" font-size="12" textLength="32.3" lengthAdjust="spacingAndGlyphs">1.357</text>
<text x="442" y="440.0" text-anchor="end" font-size="12" textLength="32.3" lengthAdjust="spacingAndGlyphs">2.045</text>
<text x="36" y="395.79999999999995" textLength="8.5">R</text><text x="44.5" y="399" font-size="6.5" font-weight="bold">E</text>
<text x="49.30000000000001" y="410.29999999999995" text-anchor="end" font-size="12" textLength="27" lengthAdjust="spacingAndGlyphs">MLat</text>
<text x="49.30000000000001" y="425.20000000000005" text-anchor="end" font-size="12" textLength="23" lengthAdjust="spacingAndGlyphs">MLT</text>
<text x="49.30000000000001" y="440" text-anchor="end" font-size="12">L</text>
<text x="162.60000000000002" y="457.1" text-anchor="start" font-size="12" textLength="182.5" lengthAdjust="spacingAndGlyphs">2012-12-05 (340) 12:00 to 24:00</text>
</g></svg></div>
<div class="abs" style="left:904.30px;top:91.90px;font:normal 6.2px 'DejaVu Sans',sans-serif;letter-spacing:0.000px;color:#000;white-space:nowrap;line-height:normal;">2012-12-05 12:00 to 24:00</div>
</div>
<div class="abs" style="left:8px;top:173px;width:920px;height:15px;background:#eee;border-top:1px solid #8a9cb8"></div>
<div class="abs" style="left:8px;top:174px;width:15px;height:14px;background:#eee;border-left:1px solid #fff;border-top:1px solid #fff"></div>
<svg class="abs" style="left:8px;top:174px" width="15" height="14" viewBox="0 0 15 14"><path d="M5 6.5 L9.5 2 L9.5 11 Z" fill="#222"/></svg>
<div class="abs" style="left:23px;top:173px;width:132px;height:15px;border:1px solid #6382bf;border-bottom:none;background:linear-gradient(#e6eef7,#ffffff 25%,#d6e3f0 60%,#b8cfe5)"></div>
<div class="abs" style="left:24px;top:174px;width:1px;height:14px;background:#fff"></div>
<div class="abs" style="left:87px;top:177px;width:1px;height:9px;background:#6382bf"></div>
<div class="abs" style="left:88px;top:178px;width:1px;height:9px;background:#fff"></div>
<div class="abs" style="left:89px;top:177px;width:1px;height:9px;background:#6382bf"></div>
<div class="abs" style="left:90px;top:178px;width:1px;height:9px;background:#fff"></div>
<div class="abs" style="left:91px;top:177px;width:1px;height:9px;background:#6382bf"></div>
<div class="abs" style="left:92px;top:178px;width:1px;height:9px;background:#fff"></div>
<div class="abs" style="left:912px;top:174px;width:16px;height:14px;background:#eee;border-left:1px solid #7a8a99"></div>
<div class="abs" style="left:913px;top:174px;width:15px;height:14px;border-left:1px solid #fff;border-top:1px solid #fff"></div>
<svg class="abs" style="left:913px;top:174px" width="15" height="14" viewBox="0 0 15 14"><path d="M10.5 6.5 L6 2 L6 11 Z" fill="#222"/></svg>
<div class="abs" style="left:8px;top:188px;width:921px;height:1px;background:#7a8a99"></div>
<div class="abs" style="left:5px;top:189px;width:928px;height:2px;background:#fff"></div>
<div class="abs" style="left:5px;top:191px;width:926px;height:8px;background:#eee"></div>
<svg class="abs" style="left:9px;top:193px" width="918" height="5" viewBox="0 0 918 5"><defs><pattern id="bump" width="4" height="4" patternUnits="userSpaceOnUse"><rect x="1" y="1" width="1" height="1" fill="#7f96b6"/><rect x="2" y="2" width="1" height="1" fill="#fff"/><rect x="3" y="3" width="1" height="1" fill="#7f96b6"/><rect x="0" y="0" width="1" height="1" fill="#fff"/></pattern></defs><rect x="0" y="0" width="918" height="4" fill="url(#bump)"/></svg>
<div class="abs" style="left:6px;top:199px;width:925px;height:482px;background:#7a8a99"></div>
<div class="abs" style="left:7px;top:200px;width:924px;height:482px;background:#eee;overflow:hidden">
<div class="abs" style="left:195px;top:0;width:531px;height:462px;background:#fff"><svg width="531" height="462" viewBox="0 0 531 462" style="position:absolute;left:0;top:0"><g font-family="'Liberation Sans',sans-serif" font-size="12" fill="#484848">
<rect x="82.0" y="51" width="344.0" height="126" fill="url(#specg)"/>
<rect x="82.0" y="155" width="344.0" height="2" fill="#12f77c"/>
<rect x="82.0" y="159" width="344.0" height="2" fill="#12f67a"/>
<rect x="82.0" y="163" width="344.0" height="3" fill="#1af470"/>
<rect x="82.0" y="168" width="344.0" height="2" fill="#08f98e"/>
<rect x="82.0" y="171" width="344.0" height="4" fill="#22f364"/>
<rect x="82.0" y="175" width="344.0" height="2" fill="#10f780"/>
<rect x="82.0" y="56" width="344.0" height="2" fill="#a4fb1c"/>
<rect x="82.0" y="51" width="344.0" height="5" fill="#22f25e" opacity="0.6"/>
<rect x="82.0" y="78" width="344.0" height="1.5" fill="#3cf64c" opacity="0.8"/>
<rect x="82.0" y="87" width="344.0" height="1" fill="#30f656" opacity="0.5"/>
<rect x="347" y="51" width="5" height="40" fill="#30f050" opacity="0.35"/>
<rect x="83.0" y="134.0" width="1.2" height="16.1" fill="#44f83c" opacity="0.42"/><rect x="85.5" y="129.0" width="1.2" height="16.4" fill="#44f83c" opacity="0.40"/><rect x="87.5" y="133.9" width="1.2" height="11.3" fill="#44f83c" opacity="0.40"/><rect x="89.6" y="127.4" width="1.2" height="22.3" fill="#44f83c" opacity="0.28"/><rect x="91.2" y="137.5" width="1.2" height="9.6" fill="#44f83c" opacity="0.49"/><rect x="93.4" y="120.8" width="1.2" height="8.8" fill="#44f83c" opacity="0.54"/><rect x="95.9" y="123.5" width="1.2" height="19.8" fill="#44f83c" opacity="0.43"/><rect x="97.4" y="114.7" width="1.2" height="8.3" fill="#44f83c" opacity="0.41"/><rect x="98.6" y="117.3" width="1.2" height="11.4" fill="#44f83c" opacity="0.32"/><rect x="99.9" y="115.3" width="1.2" height="16.4" fill="#44f83c" opacity="0.38"/><rect x="102.3" y="119.6" width="1.2" height="17.3" fill="#44f83c" opacity="0.44"/><rect x="104.2" y="128.5" width="1.2" height="19.9" fill="#44f83c" opacity="0.39"/><rect x="105.8" y="114.2" width="1.2" height="26.0" fill="#44f83c" opacity="0.55"/><rect x="108.1" y="109.9" width="1.2" height="20.7" fill="#44f83c" opacity="0.34"/><rect x="109.7" y="108.3" width="1.2" height="13.2" fill="#44f83c" opacity="0.27"/><rect x="111.9" y="106.7" width="1.2" height="15.2" fill="#44f83c" opacity="0.50"/><rect x="113.7" y="112.7" width="1.2" height="25.2" fill="#44f83c" opacity="0.50"/><rect x="114.9" y="124.7" width="1.2" height="11.8" fill="#44f83c" opacity="0.52"/><rect x="116.7" y="110.5" width="1.2" height="25.6" fill="#44f83c" opacity="0.37"/>
<path d="M83.0 133.6L84.0 130.1L85.0 126.5L86.0 132.6L87.0 138.5L88.0 130.0L89.0 122.1L90.0 130.9L91.0 139.5L92.0 128.8L93.0 118.4L94.0 125.1L95.0 131.9L96.0 122.6L97.0 114.0L98.0 115.8L99.0 118.0L100.0 115.2L101.0 111.1L102.0 118.0L103.0 123.4L104.0 129.6L105.0 120.5L106.0 112.4L107.0 111.3L108.0 110.2L109.0 108.7L110.0 107.4L111.0 107.2L112.0 106.7L113.0 106.0L114.0 116.3L115.0 125.9L116.0 123.4L117.0 106.3" fill="none" stroke="#50f834" stroke-width="1.6" opacity="0.5" stroke-linejoin="round"/>
<path d="M117.0 106.5L118.0 105.6L119.0 104.0L120.0 102.7L121.0 101.6L122.0 101.0L123.0 99.6L124.0 98.4L125.0 98.1L126.0 97.1L127.0 96.2L128.0 94.6L129.0 94.0L130.0 93.0L131.0 91.4L132.0 91.2L133.0 90.1L134.0 90.0L135.0 88.1L136.0 86.9L137.0 86.5L138.0 85.1L139.0 84.8L140.0 83.7L141.0 83.3L142.0 83.0L143.0 82.3L144.0 81.5L145.0 80.4L146.0 80.4L147.0 79.6L148.0 79.3L149.0 78.6L150.0 78.5L151.0 77.6L152.0 77.3L153.0 77.0L154.0 75.9L155.0 75.7L156.0 75.2L157.0 75.7L158.0 74.5L159.0 74.4L160.0 74.0L161.0 73.3L162.0 72.5L163.0 73.1L164.0 72.2L165.0 72.3L166.0 71.2L167.0 71.2L168.0 71.5L169.0 70.1L170.0 67.5L171.0 65.0L172.0 63.0L173.0 65.8L174.0 68.1L175.0 69.1L176.0 69.6L177.0 68.9L178.0 67.8L179.0 65.8L180.0 64.1L181.0 63.0L182.0 62.3L183.0 59.8L184.0 59.0L185.0 57.1L186.0 55.9L187.0 54.7L188.0 53.5L189.0 52.9L190.0 51.2" fill="none" stroke="#34f848" stroke-width="5" opacity="0.4" stroke-linejoin="round"/>
<path d="M226.0 51.9L227.0 51.7L228.0 53.2L229.0 54.1L230.0 55.3L231.0 55.4L232.0 56.8L233.0 57.7L234.0 58.5L235.0 59.5L236.0 60.5L237.0 61.5L238.0 62.1L239.0 63.6L240.0 64.1L241.0 63.9L242.0 66.6L243.0 66.8L244.0 67.5L245.0 68.7L246.0 69.5L247.0 70.2L248.0 70.7L249.0 71.9L250.0 72.0L251.0 74.0L252.0 73.7L253.0 74.9L254.0 75.9L255.0 76.8L256.0 77.5L257.0 78.6L258.0 77.8L259.0 80.0L260.0 80.9L261.0 80.9L262.0 81.8L263.0 80.9L264.0 81.4L265.0 80.8L266.0 81.8L267.0 81.2L268.0 81.3L269.0 83.3L270.0 83.0L271.0 83.1L272.0 83.6L273.0 83.4L274.0 83.9L275.0 84.9L276.0 84.3L277.0 85.7L278.0 85.2L279.0 86.4L280.0 86.3L281.0 87.9L282.0 88.0L283.0 87.8L284.0 87.7L285.0 88.5L286.0 89.2L287.0 89.3L288.0 90.2L289.0 90.9L290.0 90.9L291.0 91.1L292.0 92.0L293.0 92.0L294.0 92.9L295.0 92.8L296.0 93.9L297.0 93.4L298.0 93.4L299.0 94.2L300.0 94.2L301.0 94.4L302.0 95.1L303.0 95.7L304.0 94.8L305.0 96.0L306.0 96.3L307.0 96.6L308.0 97.3L309.0 96.9L310.0 98.2L311.0 98.4L312.0 99.0L313.0 99.4L314.0 99.8L315.0 100.2L316.0 101.1L317.0 102.3L318.0 102.4L319.0 103.3L320.0 104.2L321.0 104.8L322.0 106.2L323.0 109.8L324.0 111.4L325.0 118.3L326.0 110.4L327.0 107.7L328.0 105.6L329.0 103.5L330.0 103.3L331.0 102.4L332.0 102.0L333.0 100.9L334.0 100.5L335.0 99.7L336.0 99.2L337.0 98.3L338.0 98.2L339.0 98.3L340.0 97.3L341.0 97.2L342.0 97.0L343.0 96.5L344.0 96.6L345.0 96.0L346.0 95.1L347.0 94.9L348.0 95.3L349.0 94.9L350.0 94.8L351.0 94.2L352.0 93.9L353.0 92.8L354.0 93.7L355.0 92.5L356.0 93.0L357.0 91.8L358.0 91.7L359.0 91.9L360.0 91.6L361.0 91.4L362.0 91.9L363.0 91.8L364.0 91.5L365.0 91.2L366.0 90.9L367.0 90.9L368.0 90.8L369.0 93.5L370.0 96.3L371.0 99.3L372.0 98.3L373.0 93.7L374.0 92.7L375.0 90.5L376.0 88.7L377.0 86.9L378.0 85.2L379.0 84.5L380.0 84.5L381.0 83.8L382.0 81.9L383.0 82.4L384.0 83.2L385.0 81.0L386.0 81.0L387.0 80.9L388.0 80.0L389.0 80.0L390.0 78.5L391.0 78.0L392.0 77.9L393.0 77.2L394.0 76.6L395.0 76.7L396.0 76.1L397.0 75.5L398.0 74.8L399.0 74.6L400.0 74.0L401.0 73.2L402.0 73.2L403.0 72.6L404.0 72.0L405.0 71.8L406.0 70.6L407.0 70.4L408.0 69.8L409.0 70.0L410.0 69.2L411.0 69.3L412.0 68.6L413.0 67.4L414.0 66.6L415.0 66.7L416.0 65.9L417.0 65.4L418.0 64.6L419.0 64.7L420.0 63.9L421.0 63.4L422.0 62.8L423.0 61.8L424.0 60.7L425.0 60.9" fill="none" stroke="#34f848" stroke-width="5" opacity="0.4" stroke-linejoin="round"/>
<path d="M226.0 55.6L227.0 56.7L228.0 58.2L229.0 58.3L230.0 60.0L231.0 60.3L232.0 62.3L233.0 63.1L234.0 64.3L235.0 64.6L236.0 65.8L237.0 66.5L238.0 67.3L239.0 68.4L240.0 68.9L241.0 70.1L242.0 71.3L243.0 72.0L244.0 72.7L245.0 74.3L246.0 74.4L247.0 75.0L248.0 76.0L249.0 76.6L250.0 77.5L251.0 78.3L252.0 79.8L253.0 80.0L254.0 80.9L255.0 81.9L256.0 83.2L257.0 83.4L258.0 84.1L259.0 85.9L260.0 85.6L261.0 86.0L262.0 86.5L263.0 87.1L264.0 86.2L265.0 85.9L266.0 86.9L267.0 86.7L268.0 86.9L269.0 87.5L270.0 87.9L271.0 88.3L272.0 88.5L273.0 89.4L274.0 89.9L275.0 89.8L276.0 90.1L277.0 90.8L278.0 91.1L279.0 91.1L280.0 91.7L281.0 92.6L282.0 92.6L283.0 93.0L284.0 93.5L285.0 93.9L286.0 94.3L287.0 94.1L288.0 95.6L289.0 95.6L290.0 95.7L291.0 96.6L292.0 96.9L293.0 97.2L294.0 97.9L295.0 98.7L296.0 98.5L297.0 99.1L298.0 99.6L299.0 98.9L300.0 99.4L301.0 100.1L302.0 99.6L303.0 100.4L304.0 101.2L305.0 101.4L306.0 101.6L307.0 101.1L308.0 102.7L309.0 102.7L310.0 103.2L311.0 103.6L312.0 103.5L313.0 104.1L314.0 104.6L315.0 106.1L316.0 105.8L317.0 106.4L318.0 106.9L319.0 108.2L320.0 109.2L321.0 110.1L322.0 110.6L323.0 113.1L324.0 117.0L325.0 123.1L326.0 115.4L327.0 112.6L328.0 110.1L329.0 108.1L330.0 107.0L331.0 106.6L332.0 106.0L333.0 105.9L334.0 105.8L335.0 104.9L336.0 104.5L337.0 103.6L338.0 103.1L339.0 102.6L340.0 102.3L341.0 101.4L342.0 101.4L343.0 101.1L344.0 101.5L345.0 101.1L346.0 100.9L347.0 100.8L348.0 99.9L349.0 100.0L350.0 100.0L351.0 99.1L352.0 99.1L353.0 98.5L354.0 97.7L355.0 97.9L356.0 97.4L357.0 97.3L358.0 96.9L359.0 97.0L360.0 96.2L361.0 97.3L362.0 97.0L363.0 96.4L364.0 96.1L365.0 96.3L366.0 96.4L367.0 96.2L368.0 96.1L369.0 97.9L370.0 100.7L371.0 104.7L372.0 103.7L373.0 98.5L374.0 96.9L375.0 95.0L376.0 93.3L377.0 92.2L378.0 89.9L379.0 89.8L380.0 89.1L381.0 88.0L382.0 87.8L383.0 88.2L384.0 86.8L385.0 86.2L386.0 86.4L387.0 85.5L388.0 85.0L389.0 84.9L390.0 83.5L391.0 83.6L392.0 82.7L393.0 82.1L394.0 81.8L395.0 81.9L396.0 81.0L397.0 79.9L398.0 79.7L399.0 80.0L400.0 79.3L401.0 78.2L402.0 78.7L403.0 77.4L404.0 76.6L405.0 76.5L406.0 76.3L407.0 76.0L408.0 75.3L409.0 74.4L410.0 73.8L411.0 73.1L412.0 73.0L413.0 72.3L414.0 72.1L415.0 71.1L416.0 70.8L417.0 70.2L418.0 69.6L419.0 69.1L420.0 68.5L421.0 67.9L422.0 67.9L423.0 67.2L424.0 66.2L425.0 66.2" fill="none" stroke="#48f838" stroke-width="1.5" opacity="0.55"/>
<path d="M117.0 112.1L118.0 110.5L119.0 109.8L120.0 109.0L121.0 108.4L122.0 107.0L123.0 105.5L124.0 105.1L125.0 103.6L126.0 103.4L127.0 101.9L128.0 101.5L129.0 100.0L130.0 98.7L131.0 97.6L132.0 96.9L133.0 96.1L134.0 95.4L135.0 94.1L136.0 92.8L137.0 92.2L138.0 90.6L139.0 90.6L140.0 89.6L141.0 89.6L142.0 88.9L143.0 88.1L144.0 87.1L145.0 87.0L146.0 86.3L147.0 85.4L148.0 84.8L149.0 84.9L150.0 84.0L151.0 83.8L152.0 83.6L153.0 82.3L154.0 82.8L155.0 82.2L156.0 81.2L157.0 80.7L158.0 80.1L159.0 80.4L160.0 79.0L161.0 79.7L162.0 79.2L163.0 78.5L164.0 78.2L165.0 77.9L166.0 77.6L167.0 77.6L168.0 76.7L169.0 75.8L170.0 74.3L171.0 71.4L172.0 69.2L173.0 71.3L174.0 74.0L175.0 75.1L176.0 76.6L177.0 74.7L178.0 73.3L179.0 72.0L180.0 70.6L181.0 69.0L182.0 68.6L183.0 66.3L184.0 64.8L185.0 63.3L186.0 62.2L187.0 61.6L188.0 60.4L189.0 58.5L190.0 57.1" fill="none" stroke="#48f838" stroke-width="1.5" opacity="0.55"/>
<path d="M117.0 106.1L118.0 105.8L119.0 103.4L120.0 103.6L121.0 101.8L122.0 100.8L123.0 101.1L124.0 99.1L125.0 98.0L126.0 97.4L127.0 96.7L128.0 95.0L129.0 94.4L130.0 92.4L131.0 91.8L132.0 90.7L133.0 89.2L134.0 88.1L135.0 87.0L136.0 86.9L137.0 85.9L138.0 84.8L139.0 84.4L140.0 83.0L141.0 83.2L142.0 82.7L143.0 82.5L144.0 80.9L145.0 80.6L146.0 79.0L147.0 79.3L148.0 77.7L149.0 77.7L150.0 78.8L151.0 76.3L152.0 77.7L153.0 76.9L154.0 76.1L155.0 76.1L156.0 75.7L157.0 75.6L158.0 74.4L159.0 73.8L160.0 73.4L161.0 72.9L162.0 73.1L163.0 72.3L164.0 73.0L165.0 70.9L166.0 71.0L167.0 70.8L168.0 69.7L169.0 70.6L170.0 66.6L171.0 65.3L172.0 62.7L173.0 66.5L174.0 66.8L175.0 69.6L176.0 69.6L177.0 68.6L178.0 66.9L179.0 66.4L180.0 64.0L181.0 63.3L182.0 62.2L183.0 61.6L184.0 57.6L185.0 58.4L186.0 56.6L187.0 54.5L188.0 53.7L189.0 52.0L190.0 52.0" fill="none" stroke="#66fa28" stroke-width="1.5" opacity="0.85" stroke-linejoin="round"/>
<path d="M226.0 51.0L227.0 52.3L228.0 52.7L229.0 54.2L230.0 55.6L231.0 56.2L232.0 57.9L233.0 57.5L234.0 58.9L235.0 59.4L236.0 60.2L237.0 61.5L238.0 62.6L239.0 63.7L240.0 64.6L241.0 66.5L242.0 66.6L243.0 66.0L244.0 67.9L245.0 68.2L246.0 69.1L247.0 71.0L248.0 70.9L249.0 70.6L250.0 72.8L251.0 73.2L252.0 73.5L253.0 74.4L254.0 75.5L255.0 76.7L256.0 77.3L257.0 78.5L258.0 80.4L259.0 79.7L260.0 80.5L261.0 81.0L262.0 81.9L263.0 81.0L264.0 82.4L265.0 80.8L266.0 81.1L267.0 81.8L268.0 81.5L269.0 82.0L270.0 83.1L271.0 83.6L272.0 83.7L273.0 83.8L274.0 85.2L275.0 85.0L276.0 85.1L277.0 86.3L278.0 85.5L279.0 86.5L280.0 87.2L281.0 87.2L282.0 87.3L283.0 88.3L284.0 88.1L285.0 88.5L286.0 88.7L287.0 90.5L288.0 89.8L289.0 91.2L290.0 91.2L291.0 91.2L292.0 92.2L293.0 92.3L294.0 92.7L295.0 92.2L296.0 93.4L297.0 94.2L298.0 94.2L299.0 94.8L300.0 95.4L301.0 95.1L302.0 96.3L303.0 94.6L304.0 95.6L305.0 94.6L306.0 96.9L307.0 96.7L308.0 98.0L309.0 97.3L310.0 96.8L311.0 99.3L312.0 98.2L313.0 98.7L314.0 99.9L315.0 100.9L316.0 100.7L317.0 101.6L318.0 100.9L319.0 104.0L320.0 104.0L321.0 105.1L322.0 106.4L323.0 109.1L324.0 112.1L325.0 117.4L326.0 109.9L327.0 107.9L328.0 106.0L329.0 102.9L330.0 102.5L331.0 102.1L332.0 101.7L333.0 100.9L334.0 100.1L335.0 99.4L336.0 99.8L337.0 98.7L338.0 98.0L339.0 99.8L340.0 97.9L341.0 97.6L342.0 96.9L343.0 95.9L344.0 96.9L345.0 95.8L346.0 95.6L347.0 95.9L348.0 95.6L349.0 94.8L350.0 94.4L351.0 95.4L352.0 94.1L353.0 92.9L354.0 93.7L355.0 93.0L356.0 92.6L357.0 92.7L358.0 92.1L359.0 93.1L360.0 91.9L361.0 91.9L362.0 92.3L363.0 91.2L364.0 92.0L365.0 91.3L366.0 91.9L367.0 90.6L368.0 91.3L369.0 92.5L370.0 95.7L371.0 99.3L372.0 99.0L373.0 95.2L374.0 93.3L375.0 89.6L376.0 88.1L377.0 87.6L378.0 85.3L379.0 83.7L380.0 84.3L381.0 82.8L382.0 82.5L383.0 81.7L384.0 81.8L385.0 82.8L386.0 81.2L387.0 80.4L388.0 81.5L389.0 79.2L390.0 78.9L391.0 78.3L392.0 78.3L393.0 77.3L394.0 77.9L395.0 76.3L396.0 76.3L397.0 75.6L398.0 74.5L399.0 73.9L400.0 74.0L401.0 72.1L402.0 73.0L403.0 72.5L404.0 72.1L405.0 71.5L406.0 71.2L407.0 70.3L408.0 70.4L409.0 68.5L410.0 69.5L411.0 68.0L412.0 68.3L413.0 67.2L414.0 66.7L415.0 66.0L416.0 66.8L417.0 64.8L418.0 64.3L419.0 64.6L420.0 64.0L421.0 63.3L422.0 62.1L423.0 61.8L424.0 62.1L425.0 60.4" fill="none" stroke="#66fa28" stroke-width="1.5" opacity="0.85" stroke-linejoin="round"/>
<rect x="141.4" y="81.9" width="2" height="1.8" fill="#d8ff10"/><rect x="147.2" y="78.5" width="3" height="1.8" fill="#fff000"/><rect x="148.9" y="77.6" width="1.5" height="1.8" fill="#c0ff18"/><rect x="152.1" y="76.1" width="3" height="1.8" fill="#fff000"/><rect x="162.0" y="72.1" width="1.5" height="1.8" fill="#ffd000"/><rect x="238.0" y="61.5" width="2" height="1.8" fill="#ffd000"/><rect x="240.5" y="63.7" width="3" height="1.8" fill="#fff000"/><rect x="243.6" y="66.4" width="2" height="1.8" fill="#ffd000"/><rect x="246.6" y="68.9" width="3" height="1.8" fill="#c0ff18"/><rect x="251.5" y="72.8" width="3" height="1.8" fill="#fff000"/><rect x="253.6" y="74.6" width="3" height="1.8" fill="#fff000"/><rect x="262.3" y="80.3" width="1.5" height="1.8" fill="#ffd000"/><rect x="281.4" y="86.4" width="3" height="1.8" fill="#fff000"/><rect x="282.9" y="87.0" width="1.5" height="1.8" fill="#c0ff18"/><rect x="284.6" y="87.7" width="3" height="1.8" fill="#ffd000"/><rect x="287.5" y="88.9" width="1.5" height="1.8" fill="#ffd000"/><rect x="297.3" y="92.7" width="1.5" height="1.8" fill="#d8ff10"/><rect x="322.3" y="105.8" width="2" height="1.8" fill="#d8ff10"/><rect x="323.9" y="110.8" width="1.5" height="1.8" fill="#fff000"/><rect x="404.9" y="70.5" width="2" height="1.8" fill="#d8ff10"/><rect x="413.5" y="66.2" width="3" height="1.8" fill="#fff000"/><rect x="422.3" y="61.5" width="1.5" height="1.8" fill="#ffd000"/>
<rect x="324" y="121" width="1.8" height="3" fill="#ffc800"/>
<path d="M167 177 L188 130 L194 100 L198 130 L203 177 Z" fill="#38f83c" opacity="0.45"/>
<path d="M202 177 L207 116 L221 112 L231 150 L237 177 Z" fill="#3cf838" opacity="0.55"/>
<rect x="172.1" y="170.0" width="1" height="7.0" fill="#70fb20" opacity="0.52"/><rect x="173.9" y="168.3" width="1" height="8.7" fill="#70fb20" opacity="0.41"/><rect x="176.4" y="158.4" width="1" height="18.6" fill="#48f830" opacity="0.72"/><rect x="177.6" y="163.3" width="1" height="13.7" fill="#70fb20" opacity="0.72"/><rect x="179.1" y="160.9" width="1" height="16.1" fill="#48f830" opacity="0.67"/><rect x="181.3" y="158.2" width="1" height="18.8" fill="#48f830" opacity="0.38"/><rect x="182.3" y="160.5" width="1" height="16.5" fill="#58fb28" opacity="0.66"/><rect x="183.7" y="148.2" width="1" height="28.8" fill="#58fb28" opacity="0.64"/><rect x="185.3" y="142.0" width="1" height="35.0" fill="#48f830" opacity="0.46"/><rect x="186.5" y="136.9" width="1" height="40.1" fill="#58fb28" opacity="0.55"/><rect x="188.4" y="143.9" width="1" height="33.1" fill="#48f830" opacity="0.78"/><rect x="190.3" y="131.6" width="1" height="45.4" fill="#90fb18" opacity="0.47"/><rect x="192.3" y="137.4" width="1" height="39.6" fill="#58fb28" opacity="0.43"/><rect x="193.7" y="127.1" width="1" height="49.9" fill="#70fb20" opacity="0.53"/><rect x="195.8" y="147.3" width="1" height="29.7" fill="#58fb28" opacity="0.53"/><rect x="198.1" y="151.4" width="1" height="25.6" fill="#90fb18" opacity="0.55"/><rect x="200.0" y="172.1" width="1" height="4.9" fill="#90fb18" opacity="0.60"/><rect x="204.0" y="124.2" width="1" height="52.8" fill="#48f830" opacity="0.64"/><rect x="205.3" y="131.0" width="1" height="46.0" fill="#58fb28" opacity="0.45"/><rect x="207.6" y="135.6" width="1" height="41.4" fill="#48f830" opacity="0.59"/><rect x="209.7" y="123.8" width="1" height="53.2" fill="#58fb28" opacity="0.51"/><rect x="210.8" y="125.9" width="1" height="51.1" fill="#90fb18" opacity="0.70"/><rect x="212.5" y="118.5" width="1" height="58.5" fill="#58fb28" opacity="0.54"/><rect x="213.5" y="127.6" width="1" height="49.4" fill="#70fb20" opacity="0.56"/><rect x="215.9" y="134.2" width="1" height="42.8" fill="#90fb18" opacity="0.78"/><rect x="217.6" y="135.1" width="1" height="41.9" fill="#58fb28" opacity="0.69"/><rect x="219.2" y="128.1" width="1" height="48.9" fill="#70fb20" opacity="0.59"/><rect x="221.4" y="128.1" width="1" height="48.9" fill="#48f830" opacity="0.65"/><rect x="223.7" y="139.9" width="1" height="37.1" fill="#70fb20" opacity="0.49"/><rect x="224.9" y="138.4" width="1" height="38.6" fill="#48f830" opacity="0.61"/><rect x="226.2" y="142.8" width="1" height="34.2" fill="#58fb28" opacity="0.62"/><rect x="227.3" y="154.4" width="1" height="22.6" fill="#90fb18" opacity="0.59"/><rect x="229.6" y="147.7" width="1" height="29.3" fill="#58fb28" opacity="0.66"/><rect x="230.7" y="159.1" width="1" height="17.9" fill="#90fb18" opacity="0.76"/><rect x="232.9" y="164.3" width="1" height="12.7" fill="#70fb20" opacity="0.56"/><rect x="234.0" y="169.1" width="1" height="7.9" fill="#90fb18" opacity="0.59"/><rect x="235.2" y="173.0" width="1" height="4.0" fill="#58fb28" opacity="0.77"/>
<rect x="204.5" y="146" width="25.5" height="3.6" fill="#fff200"/>
<rect x="208" y="146.5" width="18" height="2" fill="#ffd800"/>
<rect x="204.5" y="151" width="3" height="2.2" fill="#ffa000"/>
<rect x="207" y="151" width="14" height="1.5" fill="#c8ff10"/>
<rect x="177.5" y="162" width="7" height="3.2" fill="#fff200"/>
<rect x="175" y="169" width="10" height="2.2" fill="#d8fb10"/>
<rect x="170" y="153" width="32" height="1.4" fill="#60f82c"/>
<rect x="194.5" y="146.5" width="2" height="3.5" fill="#ffe000"/>
<rect x="207" y="117" width="14" height="2.2" fill="#58f830"/>
<rect x="210" y="131" width="12" height="1.4" fill="#58f830"/>
<rect x="203" y="142" width="1.6" height="35" fill="#e8ff10"/>
<rect x="188.5" y="123" width="2" height="2" fill="#d0ff10"/>
<rect x="195.5" y="116" width="1.5" height="2" fill="#90fb20"/>
<rect x="196.5" y="130" width="1.5" height="2" fill="#90fb20"/>
<rect x="181" y="146" width="4" height="2" fill="#90fb20"/>
<rect x="226" y="156" width="10" height="1.6" fill="#60f82c"/>
<rect x="174" y="174" width="8" height="2" fill="#c0fb18"/>
<path d="M82.0 46.5 H426.5 V177.5 H82.0 Z" fill="none" stroke="#111" stroke-width="1"/>
<path d="M73.5 176.5 H81.5M73.5 102.5 H81.5M77.5 154.2 H81.5M77.5 141.2 H81.5M77.5 131.9 H81.5M77.5 124.8 H81.5M77.5 118.9 H81.5M77.5 114.0 H81.5M77.5 109.7 H81.5M77.5 105.9 H81.5M77.5 80.2 H81.5M77.5 67.2 H81.5M77.5 57.9 H81.5M77.5 50.8 H81.5M82.0 177.5 V186.5M110.7 177.5 V182.5M139.4 177.5 V182.5M168.1 177.5 V182.5M196.8 177.5 V182.5M225.5 177.5 V182.5M254.2 177.5 V186.5M283.0 177.5 V182.5M311.7 177.5 V182.5M340.4 177.5 V182.5M369.1 177.5 V182.5M397.8 177.5 V182.5M426.5 177.5 V186.5" stroke="#222" stroke-width="1" fill="none"/>
<rect x="437" y="46.599999999999994" width="12.5" height="131.70000000000002" fill="url(#jet)"/>
<path d="M450.0 46.599999999999994 V178.8M449.5 61.0 H457.5M449.5 80.7 H457.5M449.5 100.4 H457.5M449.5 119.8 H457.5M449.5 139.0 H457.5M449.5 158.7 H457.5M449.5 178.1 H457.5M449.5 51.3 H453.5M449.5 71.0 H453.5M449.5 90.6 H453.5M449.5 110.1 H453.5M449.5 129.4 H453.5M449.5 148.9 H453.5M449.5 168.4 H453.5" stroke="#222" stroke-width="1" fill="none"/>
<text x="461.5" y="67.0" text-anchor="start" font-size="12" textLength="13.5" lengthAdjust="spacingAndGlyphs">10</text>
<text x="475.5" y="62.0" text-anchor="start" font-size="12" textLength="18" lengthAdjust="spacingAndGlyphs">-10</text>
<text x="461.5" y="86.7" text-anchor="start" font-size="12" textLength="13.5" lengthAdjust="spacingAndGlyphs">10</text>
<text x="475.5" y="81.7" text-anchor="start" font-size="12" textLength="18" lengthAdjust="spacingAndGlyphs">-12</text>
<text x="461.5" y="106.4" text-anchor="start" font-size="12" textLength="13.5" lengthAdjust="spacingAndGlyphs">10</text>
<text x="475.5" y="101.4" text-anchor="start" font-size="12" textLength="18" lengthAdjust="spacingAndGlyphs">-14</text>
<text x="461.5" y="125.8" text-anchor="start" font-size="12" textLength="13.5" lengthAdjust="spacingAndGlyphs">10</text>
<text x="475.5" y="120.8" text-anchor="start" font-size="12" textLength="18" lengthAdjust="spacingAndGlyphs">-16</text>
<text x="461.5" y="145.0" text-anchor="start" font-size="12" textLength="13.5" lengthAdjust="spacingAndGlyphs">10</text>
<text x="475.5" y="140.0" text-anchor="start" font-size="12" textLength="18" lengthAdjust="spacingAndGlyphs">-18</text>
<text x="461.5" y="164.7" text-anchor="start" font-size="12" textLength="13.5" lengthAdjust="spacingAndGlyphs">10</text>
<text x="475.5" y="159.7" text-anchor="start" font-size="12" textLength="18" lengthAdjust="spacingAndGlyphs">-20</text>
<text x="461.5" y="184.1" text-anchor="start" font-size="12" textLength="13.5" lengthAdjust="spacingAndGlyphs">10</text>
<text x="475.5" y="179.1" text-anchor="start" font-size="12" textLength="18" lengthAdjust="spacingAndGlyphs">-22</text>
<text transform="translate(511.5 113) rotate(-90)" text-anchor="middle" textLength="76" lengthAdjust="spacingAndGlyphs">V^2/m^2/Hz</text>
<text x="153.8" y="38.5" text-anchor="start" font-size="12" textLength="200.5" lengthAdjust="spacingAndGlyphs">RBSP-A/EMFISIS&#160; HFR Spectra Data</text>
<text x="48.599999999999994" y="110" text-anchor="start" font-size="12" textLength="14" lengthAdjust="spacingAndGlyphs">10</text>
<text x="63.30000000000001" y="105" text-anchor="start" font-size="12" textLength="6.5" lengthAdjust="spacingAndGlyphs">5</text>
<text x="48.599999999999994" y="184.60000000000002" text-anchor="start" font-size="12" textLength="14" lengthAdjust="spacingAndGlyphs">10</text>
<text x="63.30000000000001" y="179.60000000000002" text-anchor="start" font-size="12" textLength="6.5" lengthAdjust="spacingAndGlyphs">4</text>
<text transform="translate(38.5 112.80000000000001) rotate(-90)" text-anchor="middle" textLength="15">Hz</text>
<text x="66.30000000000001" y="202.3" text-anchor="start" font-size="12" textLength="32.5" lengthAdjust="spacingAndGlyphs">00:00</text>
<text x="238" y="202.3" text-anchor="start" font-size="12" textLength="32.5" lengthAdjust="spacingAndGlyphs">06:00</text>
<text x="410" y="202.3" text-anchor="start" font-size="12" textLength="32.5" lengthAdjust="spacingAndGlyphs">12:00</text>
<text x="66.80000000000001" y="213.8" text-anchor="start" font-size="12" textLength="66" lengthAdjust="spacingAndGlyphs">2012-12-01</text>
<text x="137.7" y="205.5" text-anchor="start" font-size="12" textLength="231.3" lengthAdjust="spacingAndGlyphs">RBSP-A/ect-hope-L3&#160; HOPE e Tperp/Tpar</text>
<path d="M82.0 225.0 H425.5 V357.5" fill="none" stroke="#333" stroke-width="1"/>
<path d="M82.0 225.0 V357.5 H425.5" fill="none" stroke="#333" stroke-width="1"/>
<path d="M73.5 232.7 H81.5M73.5 249.8 H81.5M73.5 268.7 H81.5M73.5 289.9 H81.5M73.5 313.8 H81.5M73.5 341.5 H81.5M77.5 241.1 H81.5M77.5 259.0 H81.5M77.5 279.0 H81.5M77.5 301.5 H81.5M77.5 327.2 H81.5M77.5 357.1 H81.5M82.0 357.5 V365.5M110.7 357.5 V361.5M139.4 357.5 V361.5M168.1 357.5 V361.5M196.8 357.5 V361.5M225.5 357.5 V361.5M254.2 357.5 V365.5M283.0 357.5 V361.5M311.7 357.5 V361.5M340.4 357.5 V361.5M369.1 357.5 V361.5M397.8 357.5 V361.5M426.5 357.5 V365.5" stroke="#222" stroke-width="1" fill="none"/>
<text x="51.80000000000001" y="237.0" text-anchor="start" font-size="12" textLength="16.5" lengthAdjust="spacingAndGlyphs">2.2</text>
<text x="51.80000000000001" y="254.1" text-anchor="start" font-size="12" textLength="16.5" lengthAdjust="spacingAndGlyphs">2.0</text>
<text x="51.80000000000001" y="273.0" text-anchor="start" font-size="12" textLength="16.5" lengthAdjust="spacingAndGlyphs">1.8</text>
<text x="51.80000000000001" y="294.2" text-anchor="start" font-size="12" textLength="16.5" lengthAdjust="spacingAndGlyphs">1.6</text>
<text x="51.80000000000001" y="318.1" text-anchor="start" font-size="12" textLength="16.5" lengthAdjust="spacingAndGlyphs">1.4</text>
<text x="51.80000000000001" y="345.8" text-anchor="start" font-size="12" textLength="16.5" lengthAdjust="spacingAndGlyphs">1.2</text>
<text transform="translate(42.5 291.6) rotate(-90)" text-anchor="middle" textLength="71.5">e Tperp/Tpar</text>
<text x="98.69999999999999" y="380.8" text-anchor="end" font-size="12" textLength="32.3" lengthAdjust="spacingAndGlyphs">00:00</text>
<text x="270" y="380.8" text-anchor="end" font-size="12" textLength="32.3" lengthAdjust="spacingAndGlyphs">06:00</text>
<text x="442" y="380.8" text-anchor="end" font-size="12" textLength="32.3" lengthAdjust="spacingAndGlyphs">12:00</text>
<text x="98.69999999999999" y="395.8" text-anchor="end" font-size="12" textLength="32.3" lengthAdjust="spacingAndGlyphs">5.766</text>
<text x="270" y="395.8" text-anchor="end" font-size="12" textLength="32.3" lengthAdjust="spacingAndGlyphs">4.172</text>
<text x="442" y="395.8" text-anchor="end" font-size="12" textLength="32.3" lengthAdjust="spacingAndGlyphs">3.325</text>
<text x="98.69999999999999" y="410.3" text-anchor="end" font-size="12" textLength="43.3" lengthAdjust="spacingAndGlyphs">-17.960</text>
<text x="270" y="410.3" text-anchor="end" font-size="12" textLength="32.3" lengthAdjust="spacingAndGlyphs">2.002</text>
<text x="442" y="410.3" text-anchor="end" font-size="12" textLength="32.3" lengthAdjust="spacingAndGlyphs">2.321</text>
<text x="98.69999999999999" y="425.2" text-anchor="end" font-size="12" textLength="32.3" lengthAdjust="spacingAndGlyphs">4.783</text>
<text x="270" y="425.2" text-anchor="end" font-size="12" textLength="32.3" lengthAdjust="spacingAndGlyphs">2.702</text>
<text x="442" y="425.2" text-anchor="end" font-size="12" textLength="32.3" lengthAdjust="spacingAndGlyphs">8.460</text>
<text x="98.69999999999999" y="440.0" text-anchor="end" font-size="12" textLength="32.3" lengthAdjust="spacingAndGlyphs">6.372</text>
<text x="270" y="440.0" text-anchor="end" font-size="12" textLength="32.3" lengthAdjust="spacingAndGlyphs">4.177</text>
<text x="442" y="440.0" text-anchor="end" font-size="12" textLength="32.3" lengthAdjust="spacingAndGlyphs">3.330</text>
<text x="36" y="395.79999999999995" textLength="8.5">R</text><text x="44.5" y="399" font-size="6.5" font-weight="bold">E</text>
<text x="49.30000000000001" y="410.29999999999995" text-anchor="end" font-size="12" textLength="27" lengthAdjust="spacingAndGlyphs">MLat</text>
<text x="49.30000000000001" y="425.20000000000005" text-anchor="end" font-size="12" textLength="23" lengthAdjust="spacingAndGlyphs">MLT</text>
<text x="49.30000000000001" y="440" text-anchor="end" font-size="12">L</text>
<text x="162.60000000000002" y="457.1" text-anchor="start" font-size="12" textLength="182.5" lengthAdjust="spacingAndGlyphs">2012-12-01 (336) 0:00 to 12:00</text>
</g>
<path d="M82.0 327.4L82.2 330.6L82.4 329.7L82.6 327.5L82.8 325.6L83.0 334.6L83.2 329.3L83.4 334.1L83.6 313.3L83.8 335.1L84.0 330.8L84.2 330.5L84.4 322.8L84.6 325.1L84.8 329.3L85.0 328.5L85.2 324.6L85.4 329.5L85.6 325.5L85.8 334.9L86.0 323.2L86.2 325.4L86.4 324.9L86.6 339.1L86.8 327.7L87.0 329.6L87.2 320.6L87.4 324.8L87.6 324.5L87.8 331.4L88.0 330.2L88.2 329.2L88.4 326.9L88.6 323.7L88.8 320.9L89.0 329.4L89.2 330.8L89.4 325.7L89.6 327.8L89.8 330.4L90.0 331.3L90.2 324.5L90.4 326.5L90.6 329.0L90.8 323.4L91.0 314.7L91.2 326.8L91.4 328.2L91.6 334.3L91.8 326.9L92.0 329.4L92.2 330.3L92.4 332.0L92.6 331.9L92.8 325.7L93.0 321.2L93.2 323.5L93.4 320.8L93.6 321.4L93.8 326.1L94.0 323.6L94.2 326.2L94.4 320.6L94.6 323.1L94.8 327.8L95.0 326.4L95.2 330.6L95.4 323.4L95.6 313.3L95.8 325.7L96.0 329.1L96.2 330.2L96.4 322.8L96.6 319.8L96.8 320.3L97.0 329.3L97.2 322.5L97.4 330.0L97.6 315.0L97.8 323.0L98.0 319.2L98.2 322.2L98.4 324.6L98.6 315.5L98.8 315.7L99.0 325.8L99.2 319.3L99.4 307.6L99.6 321.7L99.8 324.6L100.0 318.0L100.2 314.3L100.4 321.4L100.6 319.9L100.8 328.3L101.0 315.5L101.2 317.7L101.4 315.4L101.6 320.6L101.8 326.8L102.0 327.7L102.2 324.9L102.4 320.1L102.6 319.0L102.8 327.0L103.0 323.0L103.2 318.3L103.4 319.5L103.6 334.6L103.8 328.8L104.0 329.1L104.2 323.8L104.4 327.0L104.6 329.9L104.8 324.6L105.0 326.3L105.2 331.9L105.4 327.1L105.6 333.4L105.8 327.9L106.0 334.6L106.2 330.6L106.4 332.6L106.6 330.4L106.8 334.5L107.0 335.0L107.2 327.3L107.4 330.4L107.6 336.5L107.8 331.4L108.0 340.9L108.2 335.2L108.4 331.7L108.6 338.3L108.8 329.4L109.0 341.4L109.2 342.8L109.4 338.3L109.6 340.4L109.8 337.0L110.0 341.5L110.2 339.8L110.4 340.0L110.6 329.1L110.8 336.3L111.0 335.4L111.2 339.0L111.4 347.0L111.6 344.5L111.8 335.8L112.0 332.2L112.2 335.0L112.4 334.7L112.6 333.4L112.8 337.4L113.0 333.4L113.2 343.6L113.4 336.6L113.6 328.2L113.8 332.6L114.0 321.8L114.2 333.8L114.4 334.4L114.6 335.8L114.8 328.8L115.0 327.8L115.2 335.3L115.4 330.2L115.6 332.4L115.8 328.8L116.0 320.3L116.2 324.5L116.4 322.6L116.6 324.4L116.8 314.0L117.0 322.6L117.2 317.6L117.4 319.2L117.6 318.2L117.8 317.8L118.0 315.4L118.2 316.6L118.4 323.1L118.6 321.2L118.8 318.0L119.0 311.7L119.2 318.6L119.4 313.8L119.6 310.9L119.8 305.9L120.0 306.5L120.2 315.0L120.4 315.9L120.6 306.5L120.8 309.3L121.0 314.5L121.2 308.6L121.4 319.7L121.6 308.8L121.8 318.8L122.0 311.5L122.2 306.8L122.4 316.6L122.6 310.5L122.8 301.6L123.0 302.5L123.2 313.3L123.4 309.0L123.6 308.8L123.8 297.9L124.0 301.1L124.2 296.9L124.4 306.3L124.6 307.4L124.8 294.9L125.0 303.4L125.2 300.4L125.4 302.0L125.6 304.7L125.8 295.4L126.0 301.4L126.2 299.3L126.4 301.3L126.6 293.7L126.8 287.5L127.0 293.3L127.2 291.4L127.4 295.8L127.6 296.8L127.8 298.2L128.0 298.2L128.2 302.6L128.4 292.2L128.6 298.7L128.8 290.7L129.0 290.8L129.2 294.4L129.4 301.2L129.6 295.5L129.8 293.8L130.0 291.2L130.2 287.2L130.4 288.2L130.6 293.6L130.8 295.9L131.0 307.5L131.2 278.1L131.4 290.8L131.6 299.5L131.8 285.8L132.0 290.3L132.2 286.8L132.4 287.4L132.6 286.9L132.8 280.5L133.0 288.9L133.2 294.5L133.4 286.2L133.6 284.3L133.8 289.6L134.0 285.5L134.2 290.3L134.4 286.8L134.6 286.9L134.8 289.8L135.0 287.3L135.2 291.6L135.4 281.8L135.6 290.5L135.8 286.3L136.0 291.2L136.2 281.9L136.4 294.2L136.6 274.6L136.8 276.5L137.0 278.5L137.2 271.2L137.4 283.4L137.6 262.7L137.8 278.2L138.0 271.2L138.2 278.0L138.4 270.4L138.6 267.9L138.8 271.1L139.0 269.0L139.2 259.5L139.4 271.8L139.6 266.1L139.8 281.6L140.0 271.8L140.2 275.7L140.4 263.1L140.6 290.5L140.8 271.2L141.0 266.5L141.2 262.2L141.4 271.1L141.6 259.1L141.8 268.7L142.0 276.1L142.2 266.7L142.4 265.9L142.6 282.1L142.8 260.2L143.0 275.6L143.2 267.7L143.4 270.4L143.6 262.6L143.8 268.7L144.0 270.6L144.2 274.0L144.4 275.0L144.6 260.9L144.8 271.9L145.0 276.5L145.2 267.1L145.4 266.1L145.6 263.9L145.8 262.9L146.0 262.1L146.2 269.7L146.4 270.4L146.6 270.7L146.8 280.9L147.0 269.0L147.2 272.1L147.4 276.8L147.6 271.3L147.8 273.2L148.0 267.4L148.2 274.4L148.4 272.0L148.6 273.4L148.8 269.6L149.0 267.3L149.2 266.6L149.4 271.0L149.6 273.1L149.8 266.4L150.0 266.1L150.2 286.7L150.4 271.7L150.6 277.3L150.8 274.4L151.0 275.5L151.2 271.4L151.4 271.6L151.6 281.1L151.8 261.2L152.0 275.0L152.2 266.8L152.4 269.2L152.6 267.4L152.8 264.7L153.0 280.4L153.2 256.3L153.4 275.4L153.6 260.0L153.8 276.3L154.0 277.3L154.2 273.7L154.4 262.3L154.6 269.9L154.8 264.3L155.0 263.8L155.2 262.1L155.4 272.7L155.6 268.1L155.8 269.4L156.0 271.7L156.2 281.4L156.4 266.8L156.6 267.4L156.8 248.4L157.0 254.5L157.2 255.1L157.4 269.0L157.6 267.8L157.8 272.3L158.0 264.9L158.2 262.5L158.4 254.6L158.6 268.9L158.8 262.8L159.0 268.4L159.2 257.3L159.4 266.7L159.6 267.7L159.8 267.2L160.0 247.6L160.2 275.1L160.4 270.4L160.6 270.9L160.8 253.8L161.0 262.3L161.2 263.6L161.4 270.3L161.6 264.4L161.8 272.1L162.0 261.8L162.2 279.2L162.4 264.5L162.6 269.6L162.8 259.6L163.0 268.9L163.2 281.1L163.4 267.3L163.6 250.6L163.8 256.2L164.0 259.0L164.2 265.7L164.4 271.4L164.6 269.9L164.8 261.8L165.0 267.1L165.2 256.4L165.4 269.1L165.6 258.0L165.8 283.2L166.0 267.6L166.2 266.0L166.4 263.0L166.6 262.7L166.8 260.4L167.0 268.1L167.2 261.8L167.4 273.4L167.6 280.4L167.8 248.1L168.0 254.4L168.2 261.0L168.4 253.9L168.6 273.6L168.8 274.4L169.0 266.7L169.2 274.0L169.4 271.1L169.6 269.5L169.8 270.6L170.0 272.4L170.2 271.3L170.4 267.5L170.6 269.8L170.8 264.3L171.0 266.9L171.2 274.5L171.4 261.4L171.6 267.9L171.8 262.2L172.0 269.1L172.2 263.4L172.4 260.7L172.6 266.7L172.8 279.9L173.0 253.5L173.2 265.0L173.4 262.9L173.6 275.2L173.8 258.9L174.0 268.7L174.2 275.6L174.4 269.2L174.6 269.7L174.8 260.4L175.0 272.6L175.2 272.2L175.4 263.4L175.6 261.9L175.8 279.3L176.0 273.8L176.2 271.4L176.4 270.2L176.6 268.1L176.8 248.2L177.0 261.4L177.2 273.1L177.4 267.4L177.6 286.2L177.8 267.8L178.0 274.3L178.2 271.2L178.4 280.4L178.6 285.0L178.8 278.0L179.0 279.6L179.2 272.9L179.4 271.6L179.6 270.5L179.8 270.2L180.0 276.1L180.2 285.5L180.4 267.3L180.6 277.9L180.8 275.6L181.0 284.4L181.2 271.7L181.4 281.3L181.6 275.4L181.8 279.5L182.0 282.8L182.2 276.1L182.4 291.3L182.6 275.2L182.8 277.2L183.0 267.5L183.2 274.0L183.4 282.8L183.6 288.0L183.8 278.5L184.0 273.1L184.2 278.7L184.4 271.9L184.6 276.9L184.8 278.5L185.0 281.7L185.2 279.7L185.4 308.7L185.6 274.2L185.8 276.8L186.0 266.4L186.2 282.4L186.4 282.6L186.6 297.7L186.8 285.1L187.0 289.6L187.2 279.0L187.4 277.8L187.6 292.4L187.8 287.5L188.0 275.6L188.2 284.6L188.4 285.3L188.6 280.9L188.8 287.2L189.0 281.2L189.2 292.8L189.4 270.5M189.5 294.3L189.7 294.5L189.9 294.4L190.1 294.9L190.3 302.9L190.5 298.4L190.7 301.3L190.9 307.9L191.1 306.6L191.3 307.7L191.5 309.1L191.7 312.2L191.9 317.0L192.1 314.5L192.3 318.7L192.5 321.5L192.7 323.5L192.9 324.1L193.1 324.9L193.3 330.3L193.5 328.4L193.7 335.2L193.9 339.2M212.0 299.8L212.2 295.7L212.4 285.7L212.6 289.9L212.8 277.7L213.0 278.2L213.2 278.3L213.4 282.9L213.6 280.5L213.8 292.2L214.0 269.0L214.2 287.5L214.4 283.3L214.6 285.5L214.8 268.3L215.0 292.6L215.2 272.5L215.4 281.2L215.6 281.0L215.8 272.4L216.0 271.5L216.2 282.2L216.4 281.6L216.6 291.1L216.8 299.5L217.0 281.0L217.2 271.8L217.4 292.1L217.6 269.2L217.8 277.9L218.0 272.7L218.2 289.3L218.4 277.4L218.6 279.3L218.8 277.0L219.0 274.9L219.2 267.8L219.4 285.4L219.6 276.1L219.8 283.6L220.0 264.4L220.2 287.0L220.4 273.2L220.6 274.2L220.8 275.6L221.0 288.0L221.2 270.6L221.4 272.3L221.6 271.0L221.8 271.8L222.0 274.2L222.2 278.0L222.4 273.6L222.6 273.2L222.8 273.3L223.0 278.5L223.2 268.7L223.4 264.3L223.6 275.2L223.8 268.3L224.0 280.0L224.2 271.0L224.4 282.0L224.6 268.7L224.8 254.8L225.0 268.2L225.2 274.1L225.4 289.3L225.6 264.3L225.8 270.7L226.0 272.5L226.2 267.4L226.4 273.2L226.6 265.8L226.8 292.2L227.0 258.9L227.2 267.3L227.4 262.0L227.6 262.9L227.8 259.1L228.0 269.4L228.2 266.5L228.4 274.1L228.6 259.9L228.8 251.4L229.0 256.9L229.2 262.7L229.4 251.0L229.6 264.8L229.8 258.8L230.0 264.4L230.2 249.5L230.4 261.4L230.6 249.6L230.8 246.0L231.0 255.7L231.2 252.9L231.4 255.3L231.6 237.3L231.8 244.0L232.0 246.6L232.2 241.7L232.4 239.3L232.6 251.1L232.8 244.8L233.0 245.4L233.2 241.1L233.4 247.9L233.6 257.7L233.8 235.0L234.0 233.8L234.2 237.4L234.4 244.3L234.6 254.1L234.8 239.1L235.0 242.9L235.2 240.9L235.4 236.9L235.6 236.5L235.8 239.5L236.0 236.4L236.2 257.9L236.4 248.4L236.6 239.2L236.8 252.9L237.0 245.3L237.2 236.9L237.4 257.7L237.6 244.7L237.8 253.0L238.0 263.4L238.2 261.6L238.4 256.3L238.6 268.7L238.8 266.1L239.0 254.9L239.2 261.0L239.4 263.6L239.6 266.1L239.8 250.1L240.0 256.7L240.2 265.6L240.4 259.6L240.6 256.0L240.8 258.0L241.0 274.0L241.2 260.7L241.4 261.4L241.6 267.4L241.8 265.7L242.0 264.6L242.2 272.5L242.4 261.0L242.6 279.3L242.8 262.8L243.0 259.7L243.2 262.9L243.4 267.7L243.6 262.5L243.8 240.5L244.0 287.6L244.2 250.3L244.4 281.5L244.6 262.5L244.8 293.0L245.0 275.6L245.2 273.2L245.4 266.6L245.6 288.4L245.8 262.4L246.0 273.9L246.2 267.6L246.4 281.5L246.6 280.9L246.8 270.6L247.0 256.8L247.2 277.5L247.4 275.5L247.6 285.2L247.8 284.0L248.0 269.7L248.2 273.2L248.4 291.0L248.6 273.2L248.8 269.4L249.0 273.0L249.2 274.1L249.4 279.4L249.6 277.0L249.8 282.4L250.0 261.3L250.2 278.4L250.4 276.6L250.6 277.4L250.8 281.0L251.0 280.0L251.2 291.3L251.4 277.6L251.6 287.6L251.8 281.8L252.0 277.2L252.2 264.4L252.4 271.4L252.6 286.6L252.8 275.8L253.0 294.5L253.2 288.1L253.4 289.6L253.6 285.8L253.8 299.2L254.0 288.4L254.2 288.1L254.4 289.7L254.6 295.3L254.8 277.8L255.0 285.7L255.2 279.7L255.4 283.3L255.6 285.7L255.8 282.9L256.0 283.6L256.2 303.3L256.4 285.3L256.6 301.3L256.8 285.6L257.0 293.6L257.2 289.1L257.4 293.0L257.6 281.9L257.8 288.7L258.0 303.7L258.2 282.7L258.4 283.2L258.6 285.8L258.8 282.2L259.0 276.8L259.2 298.9L259.4 278.6L259.6 282.2L259.8 298.4L260.0 292.6L260.2 282.8L260.4 277.7L260.6 287.1L260.8 290.0L261.0 285.9L261.2 277.0L261.4 279.8L261.6 288.4L261.8 298.3L262.0 290.8L262.2 288.1L262.4 294.5L262.6 295.6L262.8 285.1L263.0 294.3L263.2 288.0L263.4 300.8L263.6 287.5L263.8 295.7L264.0 298.6L264.2 287.4L264.4 301.7L264.6 295.5L264.8 296.1L265.0 302.9L265.2 301.1L265.4 288.5L265.6 280.7L265.8 301.5L266.0 287.3L266.2 300.3L266.4 291.9L266.6 285.9L266.8 288.9L267.0 281.5L267.2 302.9L267.4 301.0L267.6 288.8L267.8 304.9L268.0 299.4L268.2 301.2L268.4 293.9L268.6 306.7L268.8 292.4L269.0 306.5L269.2 312.8L269.4 301.6L269.6 297.3L269.8 323.4L270.0 287.6L270.2 298.7L270.4 295.9L270.6 307.1L270.8 291.9L271.0 296.5L271.2 292.7L271.4 302.8L271.6 302.8L271.8 321.3L272.0 305.9L272.2 304.9L272.4 309.1L272.6 287.8L272.8 306.2L273.0 291.5L273.2 293.6L273.4 301.0L273.6 289.1L273.8 297.6L274.0 299.8L274.2 307.0L274.4 309.8L274.6 300.8L274.8 302.5L275.0 301.9L275.2 305.3L275.4 331.4L275.6 311.8L275.8 299.6L276.0 294.2L276.2 292.1L276.4 300.2L276.6 291.5L276.8 302.9L277.0 302.1L277.2 297.3L277.4 288.5L277.6 297.5L277.8 304.0L278.0 305.5L278.2 294.2L278.4 296.2L278.6 296.9L278.8 293.1L279.0 291.1L279.2 292.5L279.4 288.9L279.6 290.4L279.8 299.2L280.0 301.2L280.2 298.0L280.4 295.9L280.6 307.1L280.8 294.3L281.0 295.6L281.2 293.5L281.4 310.5L281.6 301.5L281.8 287.5L282.0 313.1L282.2 295.2L282.4 303.5L282.6 301.8L282.8 283.5L283.0 298.0L283.2 302.6L283.4 313.0L283.6 301.4L283.8 308.4L284.0 305.0L284.2 296.4L284.4 292.7L284.6 305.1L284.8 289.9L285.0 292.6L285.2 302.0L285.4 298.3L285.6 308.2L285.8 302.7L286.0 302.2L286.2 300.5L286.4 305.3L286.6 296.3L286.8 311.3L287.0 305.0L287.2 291.8L287.4 301.1L287.6 293.0L287.8 279.8L288.0 308.8L288.2 315.1L288.4 286.2L288.6 290.6L288.8 299.6L289.0 307.8L289.2 291.8L289.4 278.8L289.6 309.0L289.8 296.6L290.0 295.7L290.2 283.4L290.4 295.9L290.6 292.4L290.8 299.6L291.0 296.9L291.2 311.4L291.4 309.8L291.6 298.3L291.8 296.5L292.0 300.0L292.2 298.8L292.4 308.7L292.6 309.4L292.8 306.2L293.0 290.9L293.2 296.3L293.4 291.7L293.6 303.7L293.8 299.1L294.0 306.8L294.2 302.8L294.4 308.4L294.6 298.4L294.8 307.7L295.0 310.2L295.2 304.2L295.4 299.0L295.6 302.7L295.8 301.4L296.0 298.0L296.2 301.5L296.4 297.3L296.6 297.0L296.8 292.3L297.0 289.3L297.2 300.6L297.4 288.5L297.6 304.2L297.8 327.0L298.0 313.6L298.2 312.2L298.4 299.9L298.6 309.8L298.8 294.7L299.0 290.3L299.2 305.7L299.4 295.3L299.6 299.9L299.8 308.0L300.0 295.2L300.2 301.2L300.4 306.8L300.6 317.7L300.8 312.0L301.0 313.2L301.2 286.1L301.4 321.2L301.6 302.4L301.8 296.4L302.0 301.5L302.2 308.9L302.4 291.9L302.6 314.5L302.8 293.0L303.0 309.4L303.2 307.7L303.4 289.0L303.6 296.2L303.8 293.3L304.0 307.5L304.2 289.4L304.4 300.9L304.6 318.1L304.8 301.7L305.0 313.1L305.2 296.4L305.4 310.1L305.6 298.6L305.8 294.7L306.0 303.4L306.2 296.8L306.4 296.4L306.6 302.7L306.8 302.6L307.0 311.9L307.2 315.7L307.4 306.4L307.6 304.7L307.8 290.2L308.0 298.2L308.2 308.0L308.4 308.9L308.6 286.4L308.8 303.9L309.0 309.8L309.2 295.4L309.4 318.5L309.6 306.3L309.8 302.4L310.0 309.1L310.2 313.9L310.4 299.6L310.6 303.6L310.8 307.3L311.0 313.8L311.2 303.6L311.4 323.2L311.6 310.8L311.8 317.5L312.0 297.5L312.2 314.9L312.4 303.9L312.6 296.6L312.8 314.2L313.0 312.7L313.2 300.1L313.4 309.9L313.6 313.1L313.8 304.1L314.0 316.4L314.2 300.8L314.4 312.0L314.6 310.2L314.8 300.5L315.0 313.4L315.2 312.7L315.4 307.4L315.6 311.3L315.8 309.6L316.0 297.7L316.2 307.9L316.4 314.9L316.6 300.4L316.8 300.1L317.0 312.0L317.2 322.6L317.4 318.3L317.6 307.7L317.8 300.2L318.0 306.3L318.2 308.1L318.4 296.3L318.6 320.5L318.8 294.8L319.0 305.5L319.2 310.2L319.4 303.2L319.6 318.6L319.8 302.2L320.0 315.2L320.2 306.1L320.4 313.4L320.6 306.7L320.8 316.1L321.0 319.8L321.2 297.9L321.4 319.9L321.6 310.5L321.8 298.6L322.0 314.4L322.2 312.6L322.4 302.5L322.6 321.4L322.8 319.9L323.0 310.7L323.2 309.1L323.4 320.3L323.6 315.8L323.8 303.4L324.0 306.4L324.2 319.0L324.4 303.4L324.6 318.8L324.8 317.3L325.0 316.0L325.2 301.4L325.4 307.8L325.6 306.8L325.8 299.0L326.0 323.1L326.2 319.6L326.4 308.7L326.6 297.7L326.8 324.4L327.0 297.0L327.2 308.7L327.4 297.2L327.6 308.3L327.8 316.7L328.0 297.8L328.2 323.0L328.4 304.7L328.6 316.1L328.8 320.8L329.0 313.7L329.2 308.0L329.4 306.4L329.6 305.9L329.8 309.3L330.0 310.5L330.2 305.3L330.4 314.5L330.6 302.8L330.8 306.6L331.0 309.6L331.2 304.6L331.4 296.4L331.6 312.6L331.8 307.6L332.0 316.6L332.2 308.4L332.4 314.5L332.6 314.7L332.8 314.0L333.0 319.3L333.2 312.1L333.4 319.5L333.6 308.3L333.8 304.9L334.0 297.2L334.2 296.9L334.4 296.5L334.6 326.4L334.8 314.0L335.0 314.1L335.2 320.0L335.4 316.5L335.6 321.7L335.8 307.5L336.0 314.2L336.2 303.1L336.4 317.1L336.6 310.0L336.8 312.1L337.0 315.1L337.2 298.8L337.4 300.7L337.6 310.3L337.8 307.2L338.0 308.4L338.2 290.6L338.4 329.8L338.6 328.2L338.8 317.3L339.0 304.2L339.2 312.7L339.4 303.6L339.6 313.2L339.8 317.6L340.0 294.7L340.2 300.3L340.4 313.2L340.6 315.6L340.8 313.2L341.0 322.8L341.2 301.1L341.4 299.2L341.6 299.8L341.8 304.4L342.0 305.3L342.2 298.3L342.4 310.8L342.6 310.8L342.8 308.2L343.0 306.3L343.2 310.4L343.4 302.2L343.6 305.4L343.8 306.2L344.0 311.6L344.2 305.6L344.4 308.1L344.6 317.1L344.8 314.6L345.0 303.8L345.2 307.2L345.4 298.7L345.6 308.2L345.8 316.6L346.0 312.7L346.2 306.1L346.4 296.1L346.6 308.3L346.8 305.3L347.0 318.3L347.2 326.3L347.4 309.8L347.6 333.0L347.8 310.3L348.0 315.2L348.2 317.1L348.4 301.7L348.6 322.4L348.8 300.8L349.0 301.4L349.2 319.8L349.4 314.0L349.6 313.8L349.8 308.1L350.0 306.2L350.2 295.0L350.4 304.2L350.6 305.7L350.8 303.1L351.0 313.8L351.2 291.4L351.4 308.1L351.6 312.8L351.8 301.1L352.0 295.2L352.2 321.5L352.4 308.0L352.6 333.1L352.8 312.1L353.0 322.7L353.2 311.0L353.4 301.6L353.6 299.7L353.8 305.0L354.0 300.0L354.2 300.5L354.4 306.9L354.6 315.0L354.8 315.5L355.0 306.3L355.2 300.2L355.4 304.2L355.6 313.4L355.8 306.8L356.0 322.6L356.2 305.8L356.4 302.0L356.6 313.5L356.8 305.6L357.0 313.6L357.2 315.0L357.4 309.9L357.6 308.4L357.8 316.5L358.0 313.2L358.2 306.2L358.4 300.7L358.6 300.7L358.8 310.8L359.0 313.1L359.2 295.4L359.4 296.5L359.6 289.7L359.8 315.1L360.0 294.9L360.2 308.1L360.4 319.2L360.6 292.6L360.8 311.3L361.0 310.7L361.2 312.6L361.4 291.6L361.6 285.4L361.8 311.5L362.0 297.4L362.2 281.6L362.4 306.0L362.6 314.8L362.8 294.4L363.0 309.2L363.2 296.0L363.4 309.4L363.6 302.1L363.8 307.1L364.0 293.0L364.2 309.2L364.4 298.0L364.6 304.3L364.8 295.4L365.0 286.1L365.2 296.2L365.4 300.7L365.6 304.9L365.8 290.4L366.0 318.5L366.2 306.5L366.4 303.3L366.6 285.2L366.8 319.4L367.0 300.2L367.2 297.5L367.4 296.1L367.6 300.0L367.8 297.5L368.0 294.1L368.2 288.1L368.4 294.5L368.6 291.7L368.8 292.8L369.0 293.5L369.2 284.9L369.4 298.6L369.6 277.3L369.8 279.7L370.0 300.5L370.2 302.2L370.4 277.9L370.6 279.7L370.8 306.0L371.0 300.9L371.2 300.6L371.4 294.0L371.6 303.6L371.8 303.4L372.0 284.4L372.2 287.6L372.4 302.4L372.6 297.1L372.8 308.1L373.0 309.6L373.2 304.9L373.4 288.8L373.6 297.4L373.8 298.3L374.0 289.0L374.2 293.8L374.4 292.6L374.6 288.5L374.8 296.8L375.0 297.7L375.2 286.2L375.4 275.9L375.6 293.7L375.8 295.0L376.0 287.5L376.2 287.2L376.4 282.5L376.6 294.2L376.8 287.4L377.0 292.9L377.2 276.9L377.4 288.0L377.6 289.8L377.8 293.7L378.0 294.0L378.2 289.6L378.4 281.8L378.6 282.9L378.8 281.2L379.0 296.1L379.2 283.3L379.4 292.3L379.6 288.8L379.8 291.9L380.0 277.8L380.2 305.5L380.4 270.1L380.6 294.4L380.8 296.5L381.0 282.6L381.2 293.7L381.4 291.0L381.6 304.4L381.8 286.3L382.0 290.9L382.2 294.4L382.4 288.6L382.6 285.6L382.8 286.9L383.0 277.7L383.2 283.5L383.4 293.3L383.6 277.9L383.8 269.4L384.0 294.1L384.2 281.9L384.4 298.2L384.6 295.2L384.8 283.9L385.0 289.1L385.2 275.4L385.4 294.7L385.6 286.3L385.8 281.0L386.0 277.0L386.2 276.8L386.4 279.8L386.6 278.6L386.8 290.3L387.0 286.5L387.2 269.6L387.4 288.0L387.6 281.7L387.8 293.3L388.0 287.5L388.2 282.6L388.4 276.7L388.6 276.6L388.8 289.0L389.0 292.0L389.2 285.9L389.4 284.3L389.6 286.7L389.8 278.6L390.0 277.1L390.2 272.0L390.4 268.2L390.6 285.0L390.8 274.7L391.0 275.4L391.2 284.4L391.4 276.4L391.6 289.0L391.8 276.2L392.0 280.3L392.2 272.9L392.4 286.2L392.6 279.3L392.8 285.1L393.0 283.0L393.2 269.5L393.4 263.6L393.6 273.8L393.8 270.2L394.0 280.9L394.2 289.4L394.4 289.8L394.6 286.8L394.8 287.6L395.0 268.5L395.2 280.7L395.4 278.8L395.6 273.6L395.8 281.7L396.0 269.0L396.2 277.8L396.4 273.8L396.6 262.1L396.8 283.7L397.0 282.3L397.2 280.8L397.4 254.8L397.6 283.6L397.8 271.9L398.0 263.4L398.2 272.9L398.4 275.5L398.6 275.6L398.8 262.5L399.0 285.0L399.2 279.6L399.4 282.1L399.6 264.7L399.8 278.9L400.0 266.6L400.2 285.2L400.4 278.1L400.6 271.9L400.8 272.4L401.0 271.8L401.2 278.0L401.4 264.3L401.6 277.8L401.8 266.3L402.0 276.5L402.2 274.5L402.4 274.6L402.6 265.1L402.8 262.0L403.0 266.6L403.2 276.8L403.4 270.3L403.6 269.3L403.8 270.9L404.0 268.3L404.2 271.2L404.4 274.0L404.6 260.3L404.8 275.4L405.0 274.8L405.2 281.1L405.4 277.9L405.6 271.9L405.8 271.0L406.0 260.7L406.2 266.8L406.4 272.5L406.6 271.8L406.8 265.4L407.0 271.1L407.2 251.0L407.4 266.5L407.6 281.8L407.8 285.9L408.0 270.4L408.2 261.4L408.4 263.4L408.6 271.3L408.8 262.9L409.0 271.7L409.2 255.5L409.4 263.0L409.6 275.0L409.8 267.8L410.0 268.6L410.2 271.1L410.4 266.3L410.6 260.0L410.8 257.6L411.0 276.1L411.2 265.5L411.4 265.7L411.6 269.1L411.8 263.8L412.0 258.9L412.2 264.8L412.4 248.7L412.6 245.1L412.8 261.7L413.0 269.0L413.2 265.0L413.4 262.8L413.6 258.7L413.8 270.8L414.0 266.5L414.2 264.9L414.4 265.7L414.6 253.6L414.8 268.0L415.0 272.2L415.2 267.4L415.4 275.6L415.6 259.7L415.8 264.0L416.0 264.5L416.2 253.6L416.4 262.2L416.6 266.2L416.8 269.1L417.0 264.0L417.2 268.2L417.4 262.5L417.6 275.3L417.8 277.7L418.0 263.0L418.2 252.0L418.4 256.8L418.6 276.6L418.8 265.5L419.0 258.0L419.2 259.5L419.4 261.4L419.6 272.6L419.8 261.9L420.0 258.3L420.2 263.2L420.4 272.0L420.6 270.4L420.8 266.2L421.0 253.9L421.2 266.8L421.4 256.1L421.6 259.9L421.8 264.5L422.0 274.9L422.2 260.4L422.4 274.0L422.6 269.3L422.8 253.6L423.0 250.4L423.2 250.3L423.4 258.3L423.6 253.3L423.8 254.2L424.0 249.4L424.2 272.9L424.4 253.5L424.6 262.1L424.8 250.5L425.0 262.0" fill="none" stroke="#000" stroke-width="0.85" stroke-linejoin="round"/></svg></div>
<div class="abs" style="left:195.80px;top:466.90px;font:normal 12px 'DejaVu Sans',sans-serif;letter-spacing:0.229px;color:#222;white-space:nowrap;line-height:normal;">2012-12-01 0:00 to 12:00</div>
</div>
<div class="abs" style="left:5px;top:681px;width:928px;height:1px;background:#fff"></div>
<div class="abs" style="left:15px;top:692px;width:835px;height:26px;border:1px solid #7a8a99;background:#fff"></div>
<div class="abs" style="left:17.10px;top:699.00px;font:bold 12px 'DejaVu Sans',sans-serif;letter-spacing:0.117px;color:#333;white-space:nowrap;line-height:normal;">file:/home/jbf/tmp/pngwalk3/product_$Y$m$d_$(H,delta=12).png</div>
<div class="btn" style="left:851px;top:692px;width:20px;height:27px"><svg width="18" height="25" viewBox="0 0 18 25" style="left:0;top:0"><path d="M4 10 L14 10 L9 15 Z" fill="#222"/></svg></div>
<div class="btn" style="left:877px;top:692px;width:26px;height:27px"><svg width="24" height="25" viewBox="0 0 24 25" style="left:0;top:0"><defs><linearGradient id="pg" x1="0" y1="0" x2="1" y2="1"><stop offset="0" stop-color="#b4e2ba"/><stop offset="0.55" stop-color="#58b868"/><stop offset="1" stop-color="#2f9646"/></linearGradient></defs><path d="M7.6 6.6 L17.6 12.4 L7.6 18.2 Z" fill="url(#pg)" stroke="#1f8a3d" stroke-width="1.3" stroke-linejoin="round"/></svg></div>
<div class="btn" style="left:909px;top:692px;width:26px;height:27px"><svg width="24" height="25" viewBox="0 0 24 25" style="left:0;top:0"><defs><linearGradient id="fg" x1="0" y1="0" x2="0" y2="1"><stop offset="0" stop-color="#fff3a8"/><stop offset="1" stop-color="#f8d850"/></linearGradient></defs><path d="M4.6 8.2 Q4.6 7.4 5.4 7.4 L9.4 7.4 L10.6 8.8 L16.8 8.8 L16.8 18.6 L4.6 18.6 Z" fill="#e8b830" stroke="#c8960c" stroke-width="1"/><path d="M6.4 11.6 L19.2 11.6 L17.4 18.6 L4.6 18.6 Z" fill="url(#fg)" stroke="#d0a010" stroke-width="1"/><path d="M12.8 11.6 L9.2 15.8" stroke="#f07c1c" stroke-width="2.3" stroke-linecap="butt"/><circle cx="15.6" cy="8.6" r="3.7" fill="#b0d4f8" stroke="#c4c8d4" stroke-width="1.1"/><ellipse cx="15.2" cy="7.4" rx="2.2" ry="1.3" fill="#e4f1fd"/></svg></div>
<div class="chk" style="left:49px;top:731px"></div>
<div class="abs" style="left:65.70px;top:730.90px;font:bold 12px 'DejaVu Sans',sans-serif;letter-spacing:0.219px;color:#333;white-space:nowrap;line-height:normal;">Limit range to:</div>
<div class="abs" style="left:176px;top:728px;width:236px;height:19px;border:1px solid #b8cfe5;background:#fff"></div>
<div class="abs" style="left:424px;top:725px;width:93px;height:25px;border:1px solid #999;background:#eee"></div>
<div class="abs" style="left:441.70px;top:730.80px;font:bold 12px 'DejaVu Sans',sans-serif;letter-spacing:0.275px;color:#999;white-space:nowrap;line-height:normal;">Select...</div>
<div class="chk" style="left:539px;top:731px"></div>
<div class="abs" style="left:556.70px;top:730.80px;font:bold 12px 'DejaVu Sans',sans-serif;letter-spacing:0.383px;color:#333;white-space:nowrap;line-height:normal;">Show Missing</div>
<div class="btn" style="left:780px;top:730px;width:150px;height:25px"></div>
<div class="abs" style="left:797.20px;top:735.80px;font:bold 12px 'DejaVu Sans',sans-serif;letter-spacing:0.200px;color:#333;white-space:nowrap;line-height:normal;">View in Autoplot</div>
<div class="btn" style="left:139px;top:756px;width:58px;height:22px"><svg width="24" height="14" viewBox="0 0 24 14" style="left:16.5px;top:3px"><rect x="0" y="0.5" width="2" height="13" fill="#1c26c4"/><path d="M2.5 7 L9.5 1 L9.5 13 Z" fill="url(#tl)" stroke="#1c26c4" stroke-width="1" stroke-linejoin="miter"/><path d="M8.5 7 L15.5 1 L15.5 13 Z" fill="url(#tl)" stroke="#1c26c4" stroke-width="1" stroke-linejoin="miter"/><path d="M14.5 7 L21.5 1 L21.5 13 Z" fill="url(#tl)" stroke="#1c26c4" stroke-width="1" stroke-linejoin="miter"/></svg></div>
<div class="btn" style="left:203px;top:756px;width:58px;height:22px"><svg width="22" height="14" viewBox="0 0 22 14" style="left:17.5px;top:3px"><path d="M0.5 7 L7.5 1 L7.5 13 Z" fill="url(#tl)" stroke="#1c26c4" stroke-width="1" stroke-linejoin="miter"/><path d="M6.5 7 L13.5 1 L13.5 13 Z" fill="url(#tl)" stroke="#1c26c4" stroke-width="1" stroke-linejoin="miter"/><path d="M12.5 7 L19.5 1 L19.5 13 Z" fill="url(#tl)" stroke="#1c26c4" stroke-width="1" stroke-linejoin="miter"/></svg></div>
<div class="btn" style="left:267px;top:756px;width:50px;height:22px"><svg width="16" height="14" viewBox="0 0 16 14" style="left:16.5px;top:3px"><path d="M0.5 7 L7.5 1 L7.5 13 Z" fill="url(#tl)" stroke="#1c26c4" stroke-width="1" stroke-linejoin="miter"/><path d="M6.5 7 L13.5 1 L13.5 13 Z" fill="url(#tl)" stroke="#1c26c4" stroke-width="1" stroke-linejoin="miter"/></svg></div>
<div class="btn" style="left:356px;top:756px;width:50px;height:22px"><svg width="16" height="14" viewBox="0 0 16 14" style="left:16.5px;top:3px"><path d="M7.5 7 L0.5 1 L0.5 13 Z" fill="url(#tr)" stroke="#1c26c4" stroke-width="1"/><path d="M13.5 7 L6.5 1 L6.5 13 Z" fill="url(#tr)" stroke="#1c26c4" stroke-width="1"/></svg></div>
<div class="btn" style="left:412px;top:756px;width:58px;height:22px"><svg width="22" height="14" viewBox="0 0 22 14" style="left:17.5px;top:3px"><path d="M7.5 7 L0.5 1 L0.5 13 Z" fill="url(#tr)" stroke="#1c26c4" stroke-width="1"/><path d="M13.5 7 L6.5 1 L6.5 13 Z" fill="url(#tr)" stroke="#1c26c4" stroke-width="1"/><path d="M19.5 7 L12.5 1 L12.5 13 Z" fill="url(#tr)" stroke="#1c26c4" stroke-width="1"/></svg></div>
<div class="btn" style="left:476px;top:756px;width:58px;height:22px"><svg width="24" height="14" viewBox="0 0 24 14" style="left:16.5px;top:3px"><path d="M7.5 7 L0.5 1 L0.5 13 Z" fill="url(#tr)" stroke="#1c26c4" stroke-width="1"/><path d="M13.5 7 L6.5 1 L6.5 13 Z" fill="url(#tr)" stroke="#1c26c4" stroke-width="1"/><path d="M19.5 7 L12.5 1 L12.5 13 Z" fill="url(#tr)" stroke="#1c26c4" stroke-width="1"/><rect x="21" y="0.5" width="2" height="13" fill="#1c26c4"/></svg></div>
<div class="abs" style="left:34.30px;top:789.50px;font:bold 12px 'DejaVu Sans',sans-serif;letter-spacing:0.220px;color:#333;white-space:nowrap;line-height:normal;">1 of 62 images loaded.</div>
<svg class="abs" style="left:510px;top:486px" width="42" height="56" viewBox="0 0 42 56"><defs><linearGradient id="cg" x1="0" y1="0" x2="1" y2="1"><stop offset="0" stop-color="#ffffff"/><stop offset="0.5" stop-color="#f2f2f2"/><stop offset="1" stop-color="#b5b5b5"/></linearGradient></defs><path d="M6 6 L7 36.3 L15 30.8 L23.2 47.8 Q25 50.4 28 49 L32.4 46.8 Q34.8 45.2 33.6 42.4 L24.2 25.6 L32.3 21.8 Z" fill="url(#cg)" stroke="#1c1c1c" stroke-width="3.2" stroke-linejoin="round"/><path d="M10.5 13.5 l2.3 4 l2 -1.2 l-0.6 4.2 l-3.6 -2 z" fill="#222"/></svg>
</div></body></html>
